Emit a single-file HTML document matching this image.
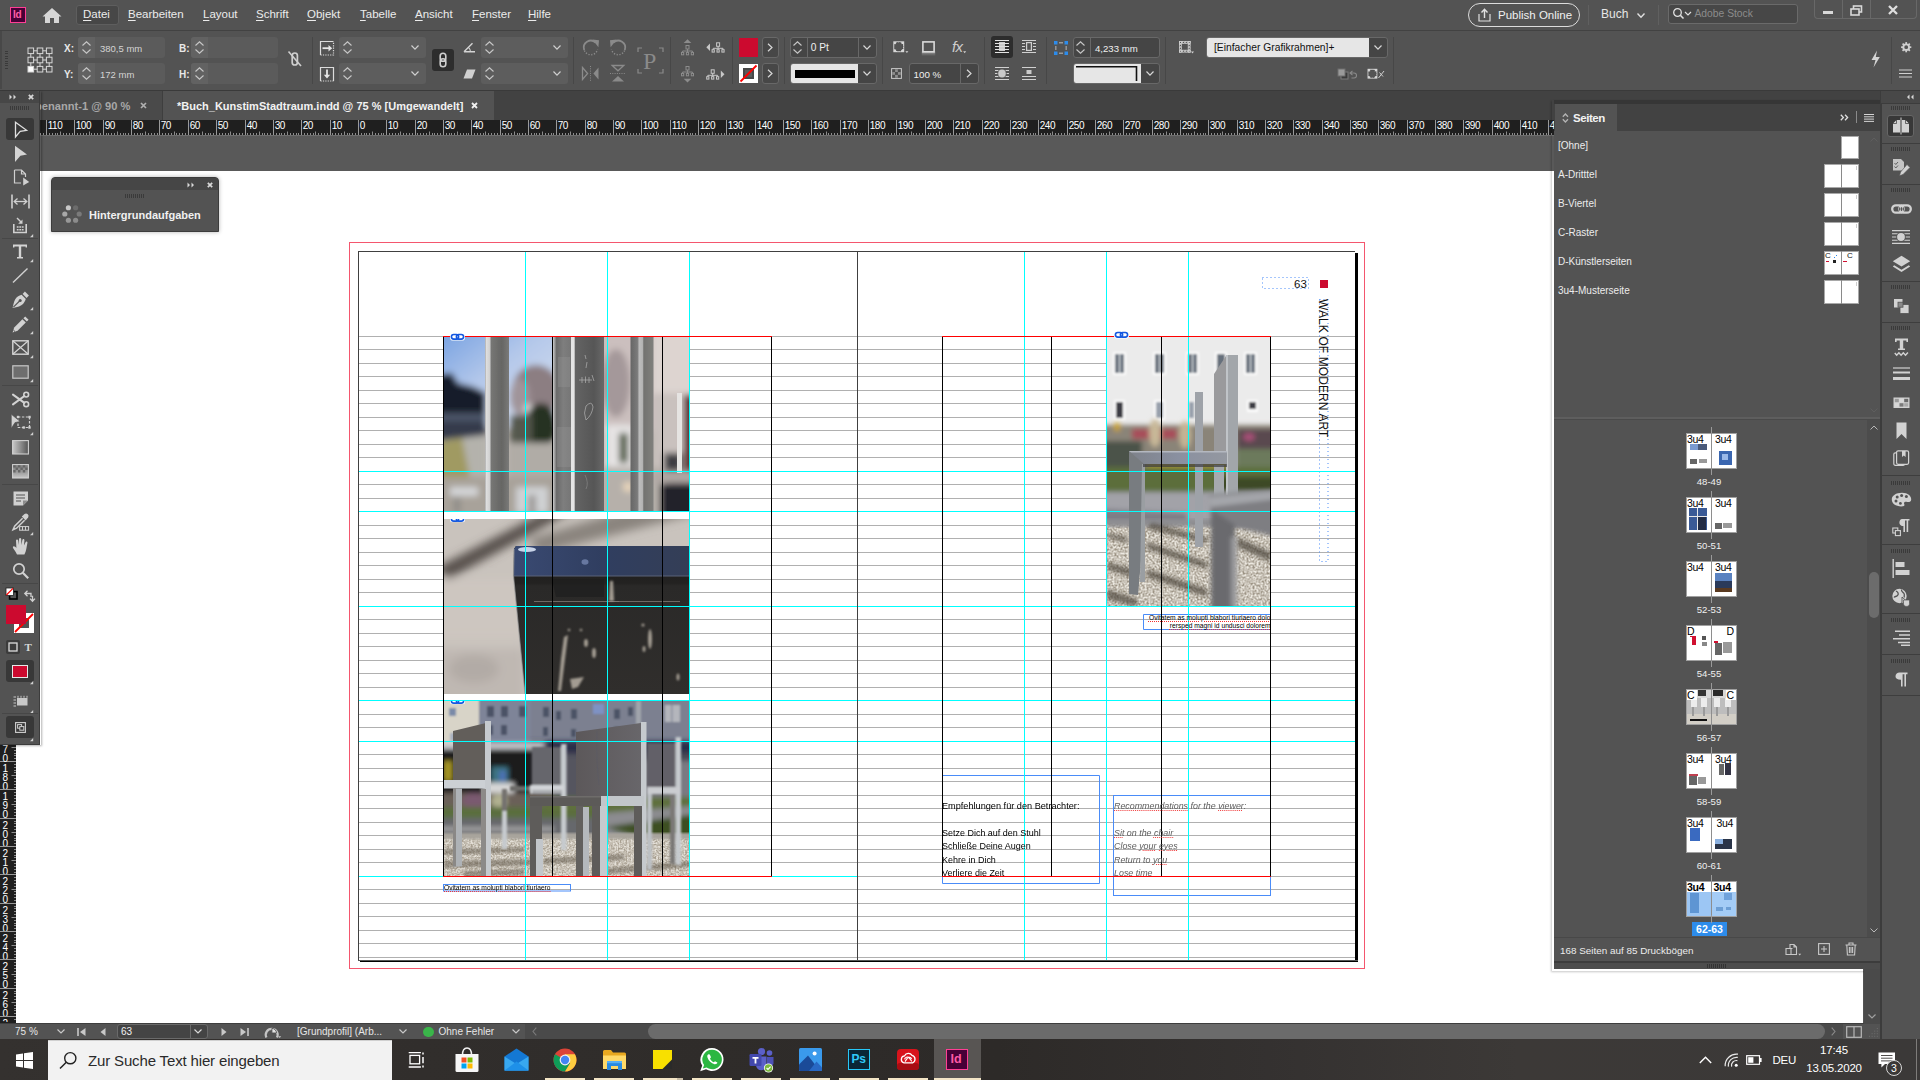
<!DOCTYPE html>
<html><head><meta charset="utf-8"><title>InDesign</title>
<style>
html,body{margin:0;padding:0;width:1920px;height:1080px;overflow:hidden;background:#535353;}
body{font-family:"Liberation Sans",sans-serif;position:relative;}
body div, body svg{position:absolute;}
svg{overflow:visible;}
u{text-decoration:underline;text-underline-offset:1.5px;}
</style></head><body>
<div style="left:39px;top:170.5px;width:1515px;height:852px;background:#ffffff;"></div>
<div style="left:16px;top:744px;width:24px;height:279px;background:#ffffff;"></div>
<div style="left:1554px;top:969px;width:309px;height:54px;background:#ffffff;"></div>
<div style="left:360px;top:960px;width:998px;height:2px;background:#000;"></div>
<div style="left:1355px;top:253px;width:3px;height:709px;background:#000;"></div>
<div style="left:358px;top:251px;width:997px;height:709px;background:#fff;border-left:1px solid #404040;border-top:1px solid #404040;box-sizing:border-box;"></div>
<div style="left:358px;top:960px;width:1000px;height:0.6px;background:#555;"></div>
<div style="left:349px;top:242px;width:1016px;height:727px;border:1px solid #f4566e;box-sizing:border-box;"></div>
<svg style="left:0;top:0" width="1920" height="1080"><path d="M359,336.5H1355" stroke="#b0b0b0" stroke-width="1"/><path d="M359,349.5H1355" stroke="#b0b0b0" stroke-width="1"/><path d="M359,363.5H1355" stroke="#b0b0b0" stroke-width="1"/><path d="M359,376.5H1355" stroke="#b0b0b0" stroke-width="1"/><path d="M359,390.5H1355" stroke="#b0b0b0" stroke-width="1"/><path d="M359,403.5H1355" stroke="#b0b0b0" stroke-width="1"/><path d="M359,417.5H1355" stroke="#b0b0b0" stroke-width="1"/><path d="M359,430.5H1355" stroke="#b0b0b0" stroke-width="1"/><path d="M359,444.5H1355" stroke="#b0b0b0" stroke-width="1"/><path d="M359,457.5H1355" stroke="#b0b0b0" stroke-width="1"/><path d="M359,471.5H1355" stroke="#b0b0b0" stroke-width="1"/><path d="M359,484.5H1355" stroke="#b0b0b0" stroke-width="1"/><path d="M359,498.5H1355" stroke="#b0b0b0" stroke-width="1"/><path d="M359,511.5H1355" stroke="#b0b0b0" stroke-width="1"/><path d="M359,525.5H1355" stroke="#b0b0b0" stroke-width="1"/><path d="M359,538.5H1355" stroke="#b0b0b0" stroke-width="1"/><path d="M359,552.5H1355" stroke="#b0b0b0" stroke-width="1"/><path d="M359,565.5H1355" stroke="#b0b0b0" stroke-width="1"/><path d="M359,579.5H1355" stroke="#b0b0b0" stroke-width="1"/><path d="M359,592.5H1355" stroke="#b0b0b0" stroke-width="1"/><path d="M359,606.5H1355" stroke="#b0b0b0" stroke-width="1"/><path d="M359,619.5H1355" stroke="#b0b0b0" stroke-width="1"/><path d="M359,633.5H1355" stroke="#b0b0b0" stroke-width="1"/><path d="M359,646.5H1355" stroke="#b0b0b0" stroke-width="1"/><path d="M359,660.5H1355" stroke="#b0b0b0" stroke-width="1"/><path d="M359,673.5H1355" stroke="#b0b0b0" stroke-width="1"/><path d="M359,687.5H1355" stroke="#b0b0b0" stroke-width="1"/><path d="M359,700.5H1355" stroke="#b0b0b0" stroke-width="1"/><path d="M359,714.5H1355" stroke="#b0b0b0" stroke-width="1"/><path d="M359,727.5H1355" stroke="#b0b0b0" stroke-width="1"/><path d="M359,741.5H1355" stroke="#b0b0b0" stroke-width="1"/><path d="M359,754.5H1355" stroke="#b0b0b0" stroke-width="1"/><path d="M359,768.5H1355" stroke="#b0b0b0" stroke-width="1"/><path d="M359,781.5H1355" stroke="#b0b0b0" stroke-width="1"/><path d="M359,795.5H1355" stroke="#b0b0b0" stroke-width="1"/><path d="M359,808.5H1355" stroke="#b0b0b0" stroke-width="1"/><path d="M359,822.5H1355" stroke="#b0b0b0" stroke-width="1"/><path d="M359,835.5H1355" stroke="#b0b0b0" stroke-width="1"/><path d="M359,849.5H1355" stroke="#b0b0b0" stroke-width="1"/><path d="M359,862.5H1355" stroke="#b0b0b0" stroke-width="1"/><path d="M359,876.5H1355" stroke="#b0b0b0" stroke-width="1"/><path d="M359,889.5H1355" stroke="#b0b0b0" stroke-width="1"/><path d="M359,903.5H1355" stroke="#b0b0b0" stroke-width="1"/><path d="M359,916.5H1355" stroke="#b0b0b0" stroke-width="1"/><path d="M359,930.5H1355" stroke="#b0b0b0" stroke-width="1"/><path d="M359,943.5H1355" stroke="#b0b0b0" stroke-width="1"/><path d="M359,957.5H1355" stroke="#b0b0b0" stroke-width="1"/></svg>
<div style="left:857px;top:251px;width:1px;height:709px;background:#3a3a3a;"></div>
<svg style="left:444px;top:337px;overflow:hidden;" width="246" height="174" viewBox="0 0 246 174"><defs>
<filter id="b1" x="-10%" y="-10%" width="120%" height="120%"><feGaussianBlur stdDeviation="3.2"/></filter>
<filter id="b1s" x="-10%" y="-10%" width="120%" height="120%"><feGaussianBlur stdDeviation="0.7"/></filter>
<linearGradient id="sky1" x1="0" y1="0" x2="1" y2="1"><stop offset="0" stop-color="#6f9ce0"/><stop offset="0.45" stop-color="#b4c8ea"/><stop offset="1" stop-color="#dfe4ee"/></linearGradient>
<linearGradient id="bar1g" x1="0" y1="0" x2="1" y2="0"><stop offset="0" stop-color="#a8a8a8"/><stop offset="0.06" stop-color="#dedede"/><stop offset="0.2" stop-color="#d0d0d0"/><stop offset="0.26" stop-color="#767674"/><stop offset="0.7" stop-color="#666664"/><stop offset="1" stop-color="#7a7a78"/></linearGradient>
<linearGradient id="bar2g" x1="0" y1="0" x2="1" y2="0"><stop offset="0" stop-color="#cccccc"/><stop offset="0.07" stop-color="#6a6a6a"/><stop offset="0.2" stop-color="#7e7e7e"/><stop offset="0.355" stop-color="#767676"/><stop offset="0.36" stop-color="#e4e4e4"/><stop offset="0.42" stop-color="#e4e4e4"/><stop offset="0.425" stop-color="#646464"/><stop offset="0.8" stop-color="#565656"/><stop offset="1" stop-color="#686868"/></linearGradient>
<linearGradient id="bar3g" x1="0" y1="0" x2="1" y2="0"><stop offset="0" stop-color="#666666"/><stop offset="0.3" stop-color="#7a7a7a"/><stop offset="0.38" stop-color="#bcbcbc"/><stop offset="0.52" stop-color="#b4b4b4"/><stop offset="0.58" stop-color="#727270"/><stop offset="1" stop-color="#80807c"/></linearGradient>
</defs>
<rect width="246" height="174" fill="#bdb6b2"/>
<g filter="url(#b1)">
<rect x="-10" y="-10" width="130" height="100" fill="url(#sky1)"/>
<path d="M-10,38 L8,36 L14,46 L30,50 L42,56 L42,104 L-10,104Z" fill="#131a2c"/>
<rect x="-10" y="76" width="52" height="9" fill="#4c5468"/>
<rect x="-10" y="86" width="52" height="16" fill="#343a4c"/>
<path d="M-10,104 L42,98 L42,142 L-10,142Z" fill="#b4b2ac"/>
<path d="M-10,106 L18,101 L26,142 L-10,142Z" fill="#a09a62"/>
<ellipse cx="92" cy="54" rx="24" ry="26" fill="#8c7e82"/>
<ellipse cx="76" cy="60" rx="10" ry="18" fill="#a0949a"/>
<circle cx="85" cy="72" r="5" fill="#e4e2e2"/>
<ellipse cx="97" cy="88" rx="16" ry="22" fill="#283220"/><rect x="66" y="78" width="22" height="28" fill="#54584e"/>
<rect x="64" y="106" width="50" height="42" fill="#b0aca6"/>
<rect x="-10" y="140" width="130" height="44" fill="#a8a29a"/>
<rect x="6" y="150" width="28" height="9" fill="#d4d6d8"/>
<rect x="10" y="160" width="6" height="16" fill="#8c8a86"/>
<rect x="72" y="150" width="32" height="26" fill="#d0d2d4"/>
<rect x="84" y="158" width="8" height="18" fill="#9c9a98"/>
<rect x="158" y="-10" width="100" height="104" fill="#cbbfbe"/>
<ellipse cx="172" cy="46" rx="14" ry="34" fill="#a4989a"/>
<rect x="162" y="88" width="28" height="42" fill="#e6e4e4"/>
<rect x="175" y="96" width="9" height="30" fill="#48563a"/>
<rect x="208" y="-10" width="50" height="68" fill="#ddd4d0"/>
<rect x="210" y="56" width="44" height="84" fill="#c9c1be"/>
<rect x="240" y="58" width="16" height="78" fill="#561a1a"/>
<rect x="220" y="116" width="18" height="18" fill="#3c3c42"/>
<path d="M213,148 L260,140 L260,184 L213,184Z" fill="#22222a"/>
<rect x="158" y="130" width="58" height="54" fill="#b6b0aa"/>
<rect x="210" y="134" width="40" height="12" fill="#b0a8a4"/>
<ellipse cx="184" cy="150" rx="5" ry="5" fill="#ecd8bc"/>
</g>
<rect x="41" y="-2" width="24" height="178" fill="url(#bar1g)" filter="url(#b1s)"/>
<rect x="186.5" y="-2" width="23" height="178" fill="url(#bar3g)" filter="url(#b1s)"/>
<rect x="233" y="56" width="5" height="80" fill="#e6e4e2" filter="url(#b1s)"/>
<rect x="109" y="0" width="51" height="174" fill="url(#bar2g)"/>
<g stroke="#cfcfcf" stroke-width="0.7" fill="none" opacity="0.75"><path d="M135,43 H148 M138,40 V46 M141.5,39.5 V46 M145,40 V46 M148,38 L150,44 M141,18 L142,22 M143,25 L142,31 M142,69 Q148,63 149,70 Q148,78 142,83 Q139,76 142,69"/><path d="M141,138 Q145,146 142,152" opacity="0.5"/></g>
<g fill="#a0a0a0" opacity="0.25"><rect x="113" y="90" width="14" height="40"/><rect x="114" y="20" width="12" height="30"/></g>
</svg>
<svg style="left:444px;top:519px;overflow:hidden;" width="246" height="175" viewBox="0 0 246 175"><defs>
<filter id="b2" x="-10%" y="-10%" width="120%" height="120%"><feGaussianBlur stdDeviation="5"/></filter>
<filter id="b2s"><feGaussianBlur stdDeviation="0.8"/></filter>
<linearGradient id="blk" x1="0" y1="0" x2="0" y2="1"><stop offset="0" stop-color="#1e1e1e"/><stop offset="0.25" stop-color="#232221"/><stop offset="0.27" stop-color="#2a2928"/><stop offset="1" stop-color="#302e2c"/></linearGradient>
<linearGradient id="blu" x1="0" y1="0" x2="1" y2="0"><stop offset="0" stop-color="#3a4a72"/><stop offset="0.5" stop-color="#303e60"/><stop offset="1" stop-color="#343e56"/></linearGradient>
</defs>
<rect width="246" height="175" fill="#c9c3bd"/>
<g filter="url(#b2)">
<path d="M-10,50 L110,-12 L135,-12 L5,60Z" fill="#56504c"/>
<path d="M85,20 L250,-30 L250,-5 L95,35Z" fill="#8a847e"/>
<rect x="-10" y="60" width="90" height="60" fill="#cdc6c0"/>
<rect x="-10" y="130" width="90" height="60" fill="#bfb8b2"/>
<ellipse cx="30" cy="150" rx="25" ry="14" fill="#b2aba6"/>
</g>
<path d="M72,27 L246,27 L246,175 L81,175 L69.5,57 L70,30Z" fill="url(#blk)"/>
<path d="M72,27 L246,27 L246,57 L69.5,57 L70,30Z" fill="url(#blu)"/>
<path d="M69.5,57 H246" stroke="#5a6278" stroke-width="1.2"/>
<path d="M70,30 L69.5,57 L81,175" stroke="#9a9a9a" stroke-width="1.2" fill="none" opacity="0.7"/>
<ellipse cx="83" cy="30.5" rx="9" ry="2.5" fill="#c8d4e8"/>
<ellipse cx="141" cy="43" rx="3.5" ry="2.8" fill="#6878a0"/>
<path d="M108,60 H160 V78 H112Z" fill="#1e1e1e" opacity="0.7"/>
<path d="M90,82.5 H175 M165,82.5 H236" stroke="#807a74" stroke-width="0.8"/>
<g fill="#b8b0a4" opacity="0.85" filter="url(#b2s)">
<path d="M166,62 L169,62 L170,82 L165,82Z"/>
<path d="M120,118 L124,116 L121,140 L117,172 L114,172 L117,140Z"/>
<path d="M126,160 L140,158 L134,168 L128,170Z"/>
<ellipse cx="142" cy="124" rx="2" ry="4"/>
<ellipse cx="206" cy="120" rx="2" ry="10"/>
<ellipse cx="200" cy="130" rx="1.5" ry="3"/>
<ellipse cx="234" cy="158" rx="1.5" ry="3.5"/>
<ellipse cx="150" cy="134" rx="2" ry="5"/>
<ellipse cx="125" cy="111" rx="1.3" ry="1.3"/><ellipse cx="137" cy="111" rx="1.3" ry="1.3"/><ellipse cx="199" cy="106" rx="1.6" ry="1.6"/>
</g>
</svg>
<div style="left:444px;top:511px;width:246px;height:8px;background:#fff;"></div>
<div style="left:444px;top:694px;width:246px;height:7px;background:#fff;"></div>
<svg style="left:444px;top:701px;overflow:hidden;" width="246" height="176" viewBox="0 0 246 176"><defs>
<filter id="b3" x="-10%" y="-10%" width="120%" height="120%"><feGaussianBlur stdDeviation="2.4"/></filter>
<filter id="b3b" x="-10%" y="-10%" width="120%" height="120%"><feGaussianBlur stdDeviation="1.3"/></filter>
<filter id="b3s"><feGaussianBlur stdDeviation="0.8"/></filter>
<linearGradient id="pan" x1="0" y1="0" x2="1" y2="0"><stop offset="0" stop-color="#5c585a"/><stop offset="1" stop-color="#68666a"/></linearGradient>
<filter id="grvf3" x="0" y="0" width="100%" height="100%"><feTurbulence type="fractalNoise" baseFrequency="0.55" numOctaves="2" seed="3"/><feColorMatrix type="matrix" values="0 0 0 0 0.78  0 0 0 0 0.75  0 0 0 0 0.69  1.6 1.6 0 0 -1.05"/><feComposite in2="SourceGraphic" operator="in"/></filter>
</defs>
<rect width="246" height="176" fill="#8c8c96"/>
<g filter="url(#b3b)">
<rect x="-10" y="-10" width="270" height="54" fill="#7c8090"/>
<rect x="-10" y="-10" width="45" height="60" fill="#d8d4c8"/>
<rect x="35" y="-10" width="52" height="52" fill="#7e8498"/>
<rect x="5" y="7" width="7" height="8" fill="#7a8aa8"/><rect x="6" y="32" width="5" height="8" fill="#a8b0c0"/>
<g fill="#4c5266"><rect x="43" y="5" width="7" height="11"/><rect x="57" y="5" width="7" height="11"/><rect x="75" y="5" width="7" height="11"/><rect x="43" y="24" width="6" height="10"/><rect x="57" y="24" width="6" height="10"/><rect x="99" y="6" width="6" height="10"/><rect x="112" y="10" width="5" height="9"/><rect x="127" y="8" width="6" height="10"/><rect x="99" y="26" width="5" height="9"/><rect x="127" y="28" width="5" height="8"/><rect x="170" y="8" width="6" height="10"/><rect x="184" y="6" width="5" height="9"/><rect x="170" y="26" width="5" height="9"/></g>
<rect x="149" y="3" width="11" height="10" fill="#7e92c4"/>
<rect x="192" y="0" width="5" height="24" fill="#a0a4ac"/>
<rect x="221" y="4" width="15" height="17" fill="#b4b6bc"/><rect x="227" y="4" width="1.5" height="17" fill="#8a8e9c"/>
</g>
<g filter="url(#b3)">
<rect x="-10" y="42" width="270" height="58" fill="#4a4a56"/>
<rect x="86" y="40" width="170" height="12" fill="#2c2e48"/>
<rect x="-10" y="48" width="100" height="46" fill="#1a1c1c"/>
<rect x="-10" y="42" width="110" height="6" fill="#c8cace"/>
<rect x="0" y="60" width="8" height="20" fill="#a89820"/>
<rect x="48" y="66" width="16" height="16" fill="#3e7484"/><rect x="56" y="70" width="5" height="10" fill="#5070c0"/>
<rect x="40" y="82" width="30" height="14" fill="#d8d8d8"/>
<rect x="200" y="60" width="60" height="40" fill="#7a7a82"/>
<rect x="100" y="54" width="100" height="42" fill="#55555f"/>
<rect x="-10" y="92" width="120" height="18" fill="#6a6058"/>
<ellipse cx="30" cy="100" rx="12" ry="8" fill="#7a5a70"/>
<ellipse cx="55" cy="100" rx="8" ry="7" fill="#b0b090"/>
<rect x="-10" y="106" width="270" height="16" fill="#5a6e3c"/>
<rect x="100" y="96" width="160" height="14" fill="#5e703e"/>
<path d="M160,112 L260,104 L260,116 L160,126Z" fill="#8c8c90"/>
<rect x="-10" y="117" width="170" height="20" fill="#66686c"/>
<rect x="-10" y="126" width="120" height="4" fill="#a8a8a8"/>
<path d="M160,126 L260,112 L260,140 L200,136Z" fill="#3e5024"/>
</g>
<rect x="-2" y="134" width="250" height="44" fill="#a89f90"/><rect x="-2" y="134" width="250" height="44" fill="#fff" filter="url(#grvf3)"/><rect x="-2" y="132" width="250" height="6" fill="#a8a49c" filter="url(#b3s)"/>
<g fill="#5e564a" opacity="0.5" filter="url(#b3s)"><path d="M0,148 L80,146 L80,151 L0,154Z"/><path d="M0,160 L90,158 L90,164 L0,167Z"/><path d="M100,157 L180,153 L180,159 L100,163Z"/><path d="M150,168 L246,160 L246,166 L150,174Z"/><path d="M20,170 L80,168 L80,174 L20,176Z"/></g>
<!-- chair 2 (mid back) -->
<g filter="url(#b3s)">
<rect x="66" y="85" width="22" height="5" fill="#6c6a68"/>
<rect x="58" y="88" width="5" height="60" fill="#74726e"/><rect x="58" y="110" width="5" height="38" fill="#c6cace"/>
<rect x="88" y="46" width="32" height="42" fill="#66666c"/>
<rect x="117" y="43" width="5.5" height="106" fill="#c6cace"/>
<rect x="86" y="84" width="34" height="9" fill="#d2d4d8"/><rect x="88" y="89" width="30" height="4" fill="#a8aaae"/>
</g>
<!-- chair 4 (right) -->
<g filter="url(#b3s)">
<rect x="203" y="42" width="31" height="48" fill="#626068"/>
<rect x="231.5" y="36" width="5.5" height="128" fill="#c6cace"/>
<rect x="203" y="86" width="34" height="7" fill="#caccd0"/>
<rect x="203" y="93" width="5" height="76" fill="#bcc0c4"/>
<rect x="226" y="93" width="5" height="70" fill="#7a7876"/>
</g>
<!-- chair 1 (left) -->
<path d="M9,30 L42,22 L42,80 L9,80Z" fill="#625e5a"/>
<rect x="41" y="20" width="6" height="158" fill="#c6cace"/><rect x="37" y="88" width="5" height="90" fill="#8c8a88"/>
<rect x="-2" y="79" width="43" height="8.5" fill="#ccd0d4"/>
<rect x="9" y="87.5" width="9" height="78" fill="#aeb2b6"/><rect x="9" y="87.5" width="3" height="78" fill="#8a8886"/>
<!-- chair 3 (main) -->
<path d="M132,31 L197,22 L197,95 L132,95Z" fill="url(#pan)"/>
<path d="M153,30 Q152,60 155,84" stroke="#5a5a64" stroke-width="0.6" fill="none"/>
<rect x="197" y="21" width="5.5" height="157" fill="#c6cace"/>
<rect x="86" y="95" width="72" height="10" fill="#5c5a58"/><rect x="86" y="95" width="72" height="1.5" fill="#6e6c6a"/>
<rect x="157" y="95" width="43" height="10" fill="#c2c6ca"/>
<rect x="86" y="105" width="12" height="73" fill="#5e5c5a"/><rect x="92" y="138" width="7" height="40" fill="#c2c6ca"/>
<rect x="132" y="105" width="8" height="73" fill="#62605e"/><rect x="139" y="106" width="6" height="72" fill="#b4b8bc"/>
<rect x="148" y="105" width="9" height="73" fill="#5e5c5a"/><rect x="156" y="105" width="8" height="73" fill="#c6cace"/>
<rect x="190" y="105" width="8" height="73" fill="#5e5c5a"/>
</svg>
<svg style="left:1106.5px;top:337px;overflow:hidden;" width="164" height="270" viewBox="0 0 164 270"><defs>
<filter id="b4" x="-10%" y="-10%" width="120%" height="120%"><feGaussianBlur stdDeviation="2.5"/></filter>
<filter id="b4s"><feGaussianBlur stdDeviation="0.7"/></filter>
<filter id="b4w" x="-5%" y="-5%" width="110%" height="110%"><feGaussianBlur stdDeviation="1.1"/></filter>
<filter id="b4m"><feGaussianBlur stdDeviation="2"/></filter>
<filter id="grvf4" x="0" y="0" width="100%" height="100%"><feTurbulence type="fractalNoise" baseFrequency="0.5" numOctaves="2" seed="7"/><feColorMatrix type="matrix" values="0 0 0 0 0.84  0 0 0 0 0.81  0 0 0 0 0.75  1.6 1.6 0 0 -1.05"/><feComposite in2="SourceGraphic" operator="in"/></filter>
<linearGradient id="seat4" x1="0" y1="0" x2="1" y2="0"><stop offset="0" stop-color="#7e828a"/><stop offset="0.5" stop-color="#8a90a0"/><stop offset="1" stop-color="#9498a0"/></linearGradient>
</defs>
<rect width="164" height="270" fill="#e4e4e4"/>
<g filter="url(#b4w)">
<rect x="-5" y="-5" width="174" height="95" fill="#ebebeb"/>
<g fill="#fcfcfc"><rect x="6" y="15" width="13" height="23"/><rect x="46" y="15" width="13" height="23"/><rect x="79" y="15" width="13" height="23"/><rect x="108" y="15" width="12" height="23"/><rect x="137" y="15" width="13" height="23"/><rect x="7" y="63" width="11" height="20"/><rect x="47" y="63" width="11" height="20"/><rect x="140" y="63" width="11" height="12"/></g>
<g fill="#66707c"><rect x="8" y="17" width="9" height="19"/><rect x="48" y="17" width="9" height="19"/><rect x="81" y="17" width="9" height="19"/><rect x="110" y="17" width="8" height="19"/><rect x="139" y="17" width="9" height="19"/></g>
<g fill="#d8dce0"><rect x="12" y="17" width="1.2" height="19"/><rect x="52" y="17" width="1.2" height="19"/><rect x="85" y="17" width="1.2" height="19"/><rect x="143" y="17" width="1.2" height="19"/></g>
<g fill="#3e3e44"><rect x="9" y="65" width="7" height="16"/><rect x="142" y="65" width="7" height="7"/></g>
<g fill="#98a0ac"><rect x="49" y="65" width="7" height="16"/><rect x="82" y="65" width="5" height="16"/></g>
</g>
<g filter="url(#b4)">
<rect x="-5" y="88" width="174" height="46" fill="#8a8478"/>
<rect x="25" y="92" width="45" height="10" fill="#a84c58"/>
<ellipse cx="48" cy="96" rx="6" ry="14" fill="#c8b898"/><ellipse cx="78" cy="98" rx="6" ry="14" fill="#c4b494"/>
<rect x="7" y="86" width="6" height="8" fill="#c8a020"/>
<rect x="-5" y="104" width="40" height="28" fill="#4c5248"/>
<rect x="130" y="92" width="40" height="30" fill="#5a4a50"/><ellipse cx="142" cy="100" rx="6" ry="4" fill="#a85078"/>
<rect x="130" y="112" width="40" height="18" fill="#6c7a5c"/>
<rect x="40" y="124" width="80" height="8" fill="#b0a030"/>
<rect x="-5" y="130" width="174" height="28" fill="#5c6e3a"/>
<rect x="110" y="140" width="60" height="14" fill="#3c4828"/>
<rect x="-5" y="155" width="174" height="32" fill="#a2a2a8"/>
<path d="M-5,172 L80,176 L80,186 L-5,186Z" fill="#7e7e86"/>
</g>
<rect x="-2" y="186" width="168" height="86" fill="#9c9384"/><rect x="-2" y="186" width="168" height="86" fill="#fff" filter="url(#grvf4)"/><rect x="-2" y="182" width="168" height="8" fill="#8c8c90" filter="url(#b4m)"/>
<g fill="#4e463c" opacity="0.72" filter="url(#b4m)"><path d="M0,196 L20,200 L20,206 L0,200Z"/><path d="M45,186 L100,200 L100,206 L40,192Z"/><path d="M40,205 L100,225 L100,232 L40,212Z"/><path d="M0,225 L25,232 L25,240 L0,232Z"/><path d="M40,232 L100,252 L100,260 L40,240Z"/><path d="M0,252 L30,262 L30,270 L0,262Z"/><path d="M130,200 L164,215 L164,225 L130,210Z"/></g>
<!-- thin post behind -->
<rect x="88" y="55" width="8" height="155" fill="#9ea2a8" filter="url(#b4s)"/>
<rect x="107" y="128" width="10" height="50" fill="#a6aaae"/>
<!-- back panel + post -->
<path d="M107,37 L119,19 L119,114 L107,114Z" fill="#9a9a9c"/>
<rect x="119" y="18" width="12" height="140" fill="#a2a6aa"/><rect x="119" y="18" width="2" height="140" fill="#c0c4c8"/>
<!-- seat & leg -->
<rect x="22" y="114" width="98" height="13" fill="url(#seat4)"/><rect x="22" y="114" width="98" height="1.5" fill="#b4b8c0"/>
<path d="M22,114 L37,127 L36,200 L31,258 L22,257Z" fill="#787c80"/><path d="M35,127 L38,127 L38,245 L33,245Z" fill="#9a9ea2"/>
<rect x="36" y="127" width="84" height="3" fill="#3a3a40" opacity="0.7"/>
<!-- foreground blurry chair -->
<g filter="url(#b4m)">
<path d="M102,158 L170,152 L170,200 L128,190 L104,172Z" fill="#7e7e82"/>
<path d="M102,160 L170,154 L170,162 L104,170Z" fill="#a4a6aa"/>
<path d="M104,172 L128,188 L128,275 L104,275Z" fill="#6a6a6e"/>
<rect x="124" y="200" width="6" height="70" fill="#9a9a9c"/>
</g>
</svg>
<svg style="left:0;top:0" width="1920" height="1080"><rect x="443.5" y="884.5" width="127" height="6.5" fill="none" stroke="#4a8cf8" stroke-width="1"/><path d="M1270.5,614.5 H1143.5 V629.5 H1270.5" fill="none" stroke="#4a8cf8" stroke-width="1"/><path d="M942.5,775.5 H1099.5 V883.5 H942.5 V877" fill="none" stroke="#4a8cf8" stroke-width="1"/><rect x="1113.5" y="795.5" width="157" height="100" fill="none" stroke="#4a8cf8" stroke-width="1"/><rect x="1262.5" y="277.5" width="46" height="11" fill="none" stroke="#4a8cf8" stroke-width="1" stroke-dasharray="1,3"/><rect x="1319.5" y="299.5" width="8.5" height="262" fill="none" stroke="#4a8cf8" stroke-width="1" stroke-dasharray="1,3"/><path d="M525.5,252V960" stroke="#00ffff" stroke-width="1"/><path d="M607.5,252V960" stroke="#00ffff" stroke-width="1"/><path d="M689.5,252V960" stroke="#00ffff" stroke-width="1"/><path d="M1024.5,252V960" stroke="#00ffff" stroke-width="1"/><path d="M1106.5,252V960" stroke="#00ffff" stroke-width="1"/><path d="M1188.5,252V960" stroke="#00ffff" stroke-width="1"/><path d="M359,471.5H1355" stroke="#00ffff" stroke-width="1"/><path d="M359,511.5H1355" stroke="#00ffff" stroke-width="1"/><path d="M359,606.5H1355" stroke="#00ffff" stroke-width="1"/><path d="M359,700.5H1355" stroke="#00ffff" stroke-width="1"/><path d="M359,741.5H1355" stroke="#00ffff" stroke-width="1"/><path d="M359,876.5H857" stroke="#00ffff" stroke-width="1"/><path d="M443.5,337V877" stroke="#000" stroke-width="1"/><path d="M552.5,337V877" stroke="#000" stroke-width="1"/><path d="M662.5,337V877" stroke="#000" stroke-width="1"/><path d="M771.5,337V877" stroke="#000" stroke-width="1"/><path d="M942.5,337V877" stroke="#000" stroke-width="1"/><path d="M1051.5,337V877" stroke="#000" stroke-width="1"/><path d="M1161.5,337V877" stroke="#000" stroke-width="1"/><path d="M1270.5,337V877" stroke="#000" stroke-width="1"/><path d="M443,336.5H772" stroke="#ff0000" stroke-width="1"/><path d="M443,876.5H772" stroke="#ff0000" stroke-width="1"/><path d="M942,336.5H1271" stroke="#ff0000" stroke-width="1"/><path d="M942,876.5H1271" stroke="#ff0000" stroke-width="1"/><path d="M857.5,251V960" stroke="#404040" stroke-width="1"/></svg>
<svg style="left:450px;top:333.3px;" width="15" height="7.6" viewBox="0 0 15 7.6"><rect x="0" y="0" width="15" height="7.6" rx="3.2" fill="#fff"/><rect x="1.4" y="1.5" width="7.2" height="4.6" rx="2.3" fill="none" stroke="#1458e0" stroke-width="1.6"/><rect x="6.4" y="1.5" width="7.2" height="4.6" rx="2.3" fill="none" stroke="#1458e0" stroke-width="1.6"/></svg>
<svg style="left:1113.5px;top:330.8px;" width="15" height="7.6" viewBox="0 0 15 7.6"><rect x="0" y="0" width="15" height="7.6" rx="3.2" fill="#fff"/><rect x="1.4" y="1.5" width="7.2" height="4.6" rx="2.3" fill="none" stroke="#1458e0" stroke-width="1.6"/><rect x="6.4" y="1.5" width="7.2" height="4.6" rx="2.3" fill="none" stroke="#1458e0" stroke-width="1.6"/></svg>
<svg style="clip-path:inset(4.4px 0 0 0);left:450px;top:514.6px;" width="15" height="7.6" viewBox="0 0 15 7.6"><rect x="0" y="0" width="15" height="7.6" rx="3.2" fill="#fff"/><rect x="1.4" y="1.5" width="7.2" height="4.6" rx="2.3" fill="none" stroke="#1458e0" stroke-width="1.6"/><rect x="6.4" y="1.5" width="7.2" height="4.6" rx="2.3" fill="none" stroke="#1458e0" stroke-width="1.6"/></svg>
<svg style="clip-path:inset(4.4px 0 0 0);left:450px;top:696.6px;" width="15" height="7.6" viewBox="0 0 15 7.6"><rect x="0" y="0" width="15" height="7.6" rx="3.2" fill="#fff"/><rect x="1.4" y="1.5" width="7.2" height="4.6" rx="2.3" fill="none" stroke="#1458e0" stroke-width="1.6"/><rect x="6.4" y="1.5" width="7.2" height="4.6" rx="2.3" fill="none" stroke="#1458e0" stroke-width="1.6"/></svg>
<div style="left:1294px;top:278.5px;font-size:11.5px;color:#111;white-space:nowrap;line-height:1;letter-spacing:0.2px;">63</div>
<div style="left:1319.5px;top:279.5px;width:8.5px;height:8.5px;background:#cc0a2f;"></div>
<div style="left:1328.5px;top:299px;font-size:12px;color:#111;white-space:nowrap;line-height:1;transform-origin:0 0;transform:rotate(90deg);letter-spacing:0.1px;">WALK OF MODERN ART</div>
<div style="left:942px;top:801.5px;font-size:9.3px;color:#000;white-space:nowrap;line-height:1;transform-origin:0 0;transform:scaleX(0.985);">Empfehlungen für den Betrachter:</div>
<div style="left:942px;top:828.5px;font-size:9.3px;color:#000;white-space:nowrap;line-height:1;transform-origin:0 0;transform:scaleX(0.965);">Setze Dich auf den Stuhl</div>
<div style="left:942px;top:842px;font-size:9.3px;color:#000;white-space:nowrap;line-height:1;transform-origin:0 0;transform:scaleX(0.965);">Schließe Deine Augen</div>
<div style="left:942px;top:855.5px;font-size:9.3px;color:#000;white-space:nowrap;line-height:1;transform-origin:0 0;transform:scaleX(0.965);">Kehre in Dich</div>
<div style="left:942px;top:869px;font-size:9.3px;color:#000;white-space:nowrap;line-height:1;transform-origin:0 0;transform:scaleX(0.965);">Verliere die Zeit</div>
<div style="left:1113.5px;top:801.5px;font-size:9.3px;color:#5e5e5e;font-style:italic;white-space:nowrap;line-height:1;transform-origin:0 0;transform:scaleX(0.955);"><span style="text-decoration:underline dotted #f03838;text-decoration-thickness:1px;text-underline-offset:1px;">Recommendations</span> for the <span style="text-decoration:underline dotted #f03838;text-decoration-thickness:1px;text-underline-offset:1px;">viewer</span>:</div>
<div style="left:1113.5px;top:828.5px;font-size:9.3px;color:#5e5e5e;font-style:italic;white-space:nowrap;line-height:1;transform-origin:0 0;transform:scaleX(0.955);"><span style="text-decoration:underline dotted #f03838;text-decoration-thickness:1px;text-underline-offset:1px;">Sit</span> on the <span style="text-decoration:underline dotted #f03838;text-decoration-thickness:1px;text-underline-offset:1px;">chair</span></div>
<div style="left:1113.5px;top:842px;font-size:9.3px;color:#5e5e5e;font-style:italic;white-space:nowrap;line-height:1;transform-origin:0 0;transform:scaleX(0.955);">Close <span style="text-decoration:underline dotted #f03838;text-decoration-thickness:1px;text-underline-offset:1px;">your</span> <span style="text-decoration:underline dotted #f03838;text-decoration-thickness:1px;text-underline-offset:1px;">eyes</span></div>
<div style="left:1113.5px;top:855.5px;font-size:9.3px;color:#5e5e5e;font-style:italic;white-space:nowrap;line-height:1;transform-origin:0 0;transform:scaleX(0.955);">Return to <span style="text-decoration:underline dotted #f03838;text-decoration-thickness:1px;text-underline-offset:1px;">you</span></div>
<div style="left:1113.5px;top:869px;font-size:9.3px;color:#5e5e5e;font-style:italic;white-space:nowrap;line-height:1;transform-origin:0 0;transform:scaleX(0.955);">Lose time</div>
<div style="left:444px;top:884.5px;font-size:6.7px;color:#000;white-space:nowrap;line-height:1;text-decoration:underline dotted #f03030;text-decoration-thickness:1px;text-underline-offset:0.5px;transform-origin:0 0;transform:scaleX(0.995);">Ovitatem as molupti blabori tiuriaero</div>
<div style="left:1143px;top:614.5px;width:127.5px;text-align:right;font-size:6.7px;color:#000;white-space:nowrap;line-height:1;text-decoration:underline dotted #f03030;text-decoration-thickness:1px;text-underline-offset:0.5px;">Ovitatem as molupti blabori tiuriaero dolo</div>
<div style="left:1143px;top:623px;width:127.5px;text-align:right;font-size:6.7px;color:#000;white-space:nowrap;line-height:1;text-decoration:underline dotted #f03030;text-decoration-thickness:1px;text-underline-offset:0.5px;">rersped magni id undusci dolorem</div>
<div style="left:0px;top:0px;width:1920px;height:30px;background:#535353;"></div>
<div style="left:0px;top:30px;width:1920px;height:1px;background:#424242;"></div>
<div style="left:10px;top:7px;width:16px;height:16px;background:#470137;border:1px solid #ff3f94;box-sizing:border-box;"></div>
<div style="left:13px;top:10px;font-size:10px;color:#ff5fa8;white-space:nowrap;line-height:1;font-weight:bold;letter-spacing:-0.3px;">Id</div>
<svg style="left:42px;top:7px;" width="20" height="17" viewBox="0 0 20 17"><path d="M10,1 L19.5,9.5 L17,9.5 L17,16 L12,16 L12,11 L8,11 L8,16 L3,16 L3,9.5 L0.5,9.5 Z" fill="#d6d6d6"/></svg>
<div style="left:76px;top:5px;width:43px;height:20px;background:#474747;border-radius:3px;border:1px solid #5e5e5e;box-sizing:border-box;"></div>
<div style="left:83px;top:9px;font-size:11.5px;color:#ececec;white-space:nowrap;line-height:1;"><u>D</u>atei</div>
<div style="left:128px;top:9px;font-size:11.5px;color:#ececec;white-space:nowrap;line-height:1;"><u>B</u>earbeiten</div>
<div style="left:203px;top:9px;font-size:11.5px;color:#ececec;white-space:nowrap;line-height:1;"><u>L</u>ayout</div>
<div style="left:256px;top:9px;font-size:11.5px;color:#ececec;white-space:nowrap;line-height:1;"><u>S</u>chrift</div>
<div style="left:307px;top:9px;font-size:11.5px;color:#ececec;white-space:nowrap;line-height:1;"><u>O</u>bjekt</div>
<div style="left:360px;top:9px;font-size:11.5px;color:#ececec;white-space:nowrap;line-height:1;"><u>T</u>abelle</div>
<div style="left:415px;top:9px;font-size:11.5px;color:#ececec;white-space:nowrap;line-height:1;"><u>A</u>nsicht</div>
<div style="left:472px;top:9px;font-size:11.5px;color:#ececec;white-space:nowrap;line-height:1;"><u>F</u>enster</div>
<div style="left:528px;top:9px;font-size:11.5px;color:#ececec;white-space:nowrap;line-height:1;"><u>H</u>ilfe</div>
<div style="left:1468px;top:3px;width:112px;height:24px;border:1px solid #dcdcdc;border-radius:12px;box-sizing:border-box;"></div>
<svg style="left:1478px;top:8px;" width="14" height="14" viewBox="0 0 14 14"><path d="M1,6 L1,13 L12,13 L12,6" fill="none" stroke="#e0e0e0" stroke-width="1.2"/><path d="M6.5,10 L6.5,2 M3.5,4.5 L6.5,1.2 L9.5,4.5" fill="none" stroke="#e0e0e0" stroke-width="1.4"/></svg>
<div style="left:1498px;top:10px;font-size:11.5px;color:#f0f0f0;white-space:nowrap;line-height:1;">Publish Online</div>
<div style="left:1588px;top:5px;width:1px;height:20px;background:#606060;"></div>
<div style="left:1601px;top:8px;font-size:12px;color:#e6e6e6;white-space:nowrap;line-height:1;">Buch</div>
<svg style="left:1637px;top:13px;" width="8" height="5.5" viewBox="0 0 8 5.5"><path d="M0.5,0.5 L4.0,4.2 L7.5,0.5" fill="none" stroke="#e0e0e0" stroke-width="1.4"/></svg>
<div style="left:1658px;top:5px;width:1px;height:20px;background:#606060;"></div>
<div style="left:1668px;top:4px;width:130px;height:20px;background:#474747;border:1px solid #6a6a6a;border-radius:3px;box-sizing:border-box;"></div>
<svg style="left:1672px;top:7px;" width="26" height="13" viewBox="0 0 26 13"><circle cx="5.5" cy="5.5" r="3.8" fill="none" stroke="#e0e0e0" stroke-width="1.3"/><path d="M8.3,8.3 L11.5,11.5" stroke="#e0e0e0" stroke-width="1.6"/><path d="M13,5 L16,8 L19,5" fill="none" stroke="#e0e0e0" stroke-width="1.2"/></svg>
<div style="left:1694.5px;top:8.8px;font-size:10.3px;color:#8c8c8c;white-space:nowrap;line-height:1;">Adobe Stock</div>
<div style="left:1814px;top:0px;width:103px;height:18.5px;border:1px solid #686868;border-top:none;border-radius:0 0 4px 4px;box-sizing:border-box;"></div>
<div style="left:1842px;top:0px;width:1px;height:18px;background:#686868;"></div>
<div style="left:1869.5px;top:0px;width:1px;height:18px;background:#686868;"></div>
<div style="left:1823px;top:11px;width:10px;height:2.5px;background:#d8d8d8;"></div>
<svg style="left:1850px;top:5px;" width="13" height="11" viewBox="0 0 13 11"><rect x="3.5" y="1" width="8" height="6" fill="none" stroke="#d8d8d8" stroke-width="1.6"/><rect x="1" y="4" width="8" height="6" fill="#535353" stroke="#d8d8d8" stroke-width="1.6"/></svg>
<svg style="left:1888px;top:4.5px;" width="10" height="10" viewBox="0 0 10 10"><path d="M1,1 L9,9 M9,1 L1,9" stroke="#dedede" stroke-width="2.3"/></svg>
<div style="left:0px;top:31px;width:1920px;height:59px;background:#535353;"></div>
<div style="left:0px;top:90px;width:1920px;height:1.2px;background:#3a3a3a;"></div>
<div style="left:0px;top:31px;width:2px;height:58px;background:#484848;"></div>
<div style="left:5px;top:51.0px;width:3px;height:1px;background:#3a3a3a;"></div>
<div style="left:5px;top:53.4px;width:3px;height:1px;background:#3a3a3a;"></div>
<div style="left:5px;top:55.8px;width:3px;height:1px;background:#3a3a3a;"></div>
<div style="left:5px;top:58.2px;width:3px;height:1px;background:#3a3a3a;"></div>
<div style="left:5px;top:60.6px;width:3px;height:1px;background:#3a3a3a;"></div>
<div style="left:5px;top:63.0px;width:3px;height:1px;background:#3a3a3a;"></div>
<div style="left:5px;top:65.4px;width:3px;height:1px;background:#3a3a3a;"></div>
<div style="left:5px;top:67.8px;width:3px;height:1px;background:#3a3a3a;"></div>
<svg style="left:27px;top:47px;" width="27" height="27" viewBox="0 0 27 27"><rect x="1.0" y="1.0" width="5.6" height="5.6" fill="none" stroke="#d8d8d8" stroke-width="1"/><rect x="10.2" y="1.0" width="5.6" height="5.6" fill="none" stroke="#d8d8d8" stroke-width="1"/><rect x="19.4" y="1.0" width="5.6" height="5.6" fill="none" stroke="#d8d8d8" stroke-width="1"/><rect x="1.0" y="10.2" width="5.6" height="5.6" fill="none" stroke="#d8d8d8" stroke-width="1"/><rect x="10.2" y="10.2" width="5.6" height="5.6" fill="none" stroke="#d8d8d8" stroke-width="1"/><rect x="19.4" y="10.2" width="5.6" height="5.6" fill="none" stroke="#d8d8d8" stroke-width="1"/><rect x="1.0" y="19.4" width="5.6" height="5.6" fill="#ffffff" stroke="#d8d8d8" stroke-width="1"/><rect x="10.2" y="19.4" width="5.6" height="5.6" fill="none" stroke="#d8d8d8" stroke-width="1"/><rect x="19.4" y="19.4" width="5.6" height="5.6" fill="none" stroke="#d8d8d8" stroke-width="1"/><path d="M6.6,3.8H10.2 M15.8,3.8H19.4 M6.6,13H10.2 M15.8,13H19.4 M6.6,22.2H10.2 M15.8,22.2H19.4 M3.8,6.6V10.2 M3.8,15.8V19.4 M13,6.6V10.2 M13,15.8V19.4 M22.2,6.6V10.2 M22.2,15.8V19.4" stroke="#d8d8d8" stroke-width="1"/></svg>
<div style="left:64px;top:43.5px;font-size:10px;color:#e8e8e8;white-space:nowrap;line-height:1;font-weight:bold;">X:</div>
<div style="left:64px;top:69.5px;font-size:10px;color:#e8e8e8;white-space:nowrap;line-height:1;font-weight:bold;">Y:</div>
<div style="left:179px;top:43.5px;font-size:10px;color:#e8e8e8;white-space:nowrap;line-height:1;font-weight:bold;">B:</div>
<div style="left:179px;top:69.5px;font-size:10px;color:#e8e8e8;white-space:nowrap;line-height:1;font-weight:bold;">H:</div>
<div style="left:78px;top:37px;width:87px;height:21px;background:#5b5b5b;border-radius:3px;"></div>
<div style="left:78px;top:37px;width:17px;height:21px;background:#626262;border-radius:3px 0 0 3px;"></div>
<svg style="left:82px;top:41px;" width="9" height="5.5" viewBox="0 0 9 5.5"><path d="M0.5,4.5 L4.5,0.8 L8.5,4.5" fill="none" stroke="#c8c8c8" stroke-width="1.1"/></svg><svg style="left:82px;top:49px;" width="9" height="5.5" viewBox="0 0 9 5.5"><path d="M0.5,0.5 L4.5,4.2 L8.5,0.5" fill="none" stroke="#c8c8c8" stroke-width="1.1"/></svg>
<div style="left:78px;top:63px;width:87px;height:21px;background:#5b5b5b;border-radius:3px;"></div>
<div style="left:78px;top:63px;width:17px;height:21px;background:#626262;border-radius:3px 0 0 3px;"></div>
<svg style="left:82px;top:67px;" width="9" height="5.5" viewBox="0 0 9 5.5"><path d="M0.5,4.5 L4.5,0.8 L8.5,4.5" fill="none" stroke="#c8c8c8" stroke-width="1.1"/></svg><svg style="left:82px;top:75px;" width="9" height="5.5" viewBox="0 0 9 5.5"><path d="M0.5,0.5 L4.5,4.2 L8.5,0.5" fill="none" stroke="#c8c8c8" stroke-width="1.1"/></svg>
<div style="left:191px;top:37px;width:87px;height:21px;background:#5b5b5b;border-radius:3px;"></div>
<div style="left:191px;top:37px;width:17px;height:21px;background:#626262;border-radius:3px 0 0 3px;"></div>
<svg style="left:195px;top:41px;" width="9" height="5.5" viewBox="0 0 9 5.5"><path d="M0.5,4.5 L4.5,0.8 L8.5,4.5" fill="none" stroke="#c8c8c8" stroke-width="1.1"/></svg><svg style="left:195px;top:49px;" width="9" height="5.5" viewBox="0 0 9 5.5"><path d="M0.5,0.5 L4.5,4.2 L8.5,0.5" fill="none" stroke="#c8c8c8" stroke-width="1.1"/></svg>
<div style="left:191px;top:63px;width:87px;height:21px;background:#5b5b5b;border-radius:3px;"></div>
<div style="left:191px;top:63px;width:17px;height:21px;background:#626262;border-radius:3px 0 0 3px;"></div>
<svg style="left:195px;top:67px;" width="9" height="5.5" viewBox="0 0 9 5.5"><path d="M0.5,4.5 L4.5,0.8 L8.5,4.5" fill="none" stroke="#c8c8c8" stroke-width="1.1"/></svg><svg style="left:195px;top:75px;" width="9" height="5.5" viewBox="0 0 9 5.5"><path d="M0.5,0.5 L4.5,4.2 L8.5,0.5" fill="none" stroke="#c8c8c8" stroke-width="1.1"/></svg>
<div style="left:100px;top:43.5px;font-size:9.5px;color:#d4d4d4;white-space:nowrap;line-height:1;">380,5 mm</div>
<div style="left:100px;top:69.5px;font-size:9.5px;color:#d4d4d4;white-space:nowrap;line-height:1;">172 mm</div>
<svg style="left:287px;top:50px;" width="16" height="18" viewBox="0 0 16 18"><rect x="5.2" y="3" width="5.2" height="12" rx="2.6" fill="none" stroke="#cfcfcf" stroke-width="1.7"/><path d="M1.5,1.5 L14,16" stroke="#cfcfcf" stroke-width="1.6"/></svg>
<div style="left:312px;top:37px;width:1px;height:47px;background:#474747;"></div>
<svg style="left:319px;top:40px;" width="16" height="16" viewBox="0 0 16 16"><path d="M1.5,15 V1.5 H14.5" fill="none" stroke="#dcdcdc" stroke-width="1.2"/><path d="M1.5,15 H14.5 V1.5" fill="none" stroke="#dcdcdc" stroke-width="1.2" stroke-dasharray="1.2,1.2"/><path d="M3.5,8.2 H11" stroke="#e6e6e6" stroke-width="1.8"/><path d="M9.5,5 L13.2,8.2 L9.5,11.4Z" fill="#e6e6e6"/></svg>
<svg style="left:319px;top:66px;" width="16" height="16" viewBox="0 0 16 16"><path d="M1.5,15 V1.5 H14.5 V15" fill="none" stroke="#dcdcdc" stroke-width="1.2"/><path d="M1.5,15 H14.5" fill="none" stroke="#dcdcdc" stroke-width="1.2" stroke-dasharray="1.2,1.2"/><path d="M8,3.5 V10" stroke="#e6e6e6" stroke-width="1.8"/><path d="M4.8,8.8 L8,12.6 L11.2,8.8Z" fill="#e6e6e6"/></svg>
<div style="left:339px;top:37px;width:87px;height:21px;background:#5d5d5d;border-radius:3px;"></div>
<svg style="left:343px;top:41px;" width="9" height="5.5" viewBox="0 0 9 5.5"><path d="M0.5,4.5 L4.5,0.8 L8.5,4.5" fill="none" stroke="#c8c8c8" stroke-width="1.1"/></svg><svg style="left:343px;top:49px;" width="9" height="5.5" viewBox="0 0 9 5.5"><path d="M0.5,0.5 L4.5,4.2 L8.5,0.5" fill="none" stroke="#c8c8c8" stroke-width="1.1"/></svg>
<svg style="left:411px;top:45px;" width="8" height="5.5" viewBox="0 0 8 5.5"><path d="M0.5,0.5 L4.0,4.2 L7.5,0.5" fill="none" stroke="#d0d0d0" stroke-width="1.2"/></svg>
<div style="left:339px;top:63px;width:87px;height:21px;background:#5d5d5d;border-radius:3px;"></div>
<svg style="left:343px;top:67px;" width="9" height="5.5" viewBox="0 0 9 5.5"><path d="M0.5,4.5 L4.5,0.8 L8.5,4.5" fill="none" stroke="#c8c8c8" stroke-width="1.1"/></svg><svg style="left:343px;top:75px;" width="9" height="5.5" viewBox="0 0 9 5.5"><path d="M0.5,0.5 L4.5,4.2 L8.5,0.5" fill="none" stroke="#c8c8c8" stroke-width="1.1"/></svg>
<svg style="left:411px;top:71px;" width="8" height="5.5" viewBox="0 0 8 5.5"><path d="M0.5,0.5 L4.0,4.2 L7.5,0.5" fill="none" stroke="#d0d0d0" stroke-width="1.2"/></svg>
<div style="left:481px;top:37px;width:87px;height:21px;background:#5d5d5d;border-radius:3px;"></div>
<svg style="left:485px;top:41px;" width="9" height="5.5" viewBox="0 0 9 5.5"><path d="M0.5,4.5 L4.5,0.8 L8.5,4.5" fill="none" stroke="#c8c8c8" stroke-width="1.1"/></svg><svg style="left:485px;top:49px;" width="9" height="5.5" viewBox="0 0 9 5.5"><path d="M0.5,0.5 L4.5,4.2 L8.5,0.5" fill="none" stroke="#c8c8c8" stroke-width="1.1"/></svg>
<svg style="left:553px;top:45px;" width="8" height="5.5" viewBox="0 0 8 5.5"><path d="M0.5,0.5 L4.0,4.2 L7.5,0.5" fill="none" stroke="#d0d0d0" stroke-width="1.2"/></svg>
<div style="left:481px;top:63px;width:87px;height:21px;background:#5d5d5d;border-radius:3px;"></div>
<svg style="left:485px;top:67px;" width="9" height="5.5" viewBox="0 0 9 5.5"><path d="M0.5,4.5 L4.5,0.8 L8.5,4.5" fill="none" stroke="#c8c8c8" stroke-width="1.1"/></svg><svg style="left:485px;top:75px;" width="9" height="5.5" viewBox="0 0 9 5.5"><path d="M0.5,0.5 L4.5,4.2 L8.5,0.5" fill="none" stroke="#c8c8c8" stroke-width="1.1"/></svg>
<svg style="left:553px;top:71px;" width="8" height="5.5" viewBox="0 0 8 5.5"><path d="M0.5,0.5 L4.0,4.2 L7.5,0.5" fill="none" stroke="#d0d0d0" stroke-width="1.2"/></svg>
<div style="left:432px;top:49px;width:22px;height:22px;background:#2d2d2d;border-radius:3px;"></div>
<svg style="left:437px;top:52px;" width="12" height="16" viewBox="0 0 12 16"><rect x="3.2" y="1.2" width="5.6" height="8" rx="2.8" fill="none" stroke="#cfcfcf" stroke-width="1.6"/><rect x="3.2" y="6.8" width="5.6" height="8" rx="2.8" fill="none" stroke="#cfcfcf" stroke-width="1.6"/></svg>
<svg style="left:463px;top:42px;" width="13" height="11" viewBox="0 0 13 11"><path d="M1,9.8 H12 M1,9.8 L9.5,1.2" stroke="#d4d4d4" stroke-width="1.4" fill="none"/><path d="M7.5,9.8 A6,6 0 0 0 5.4,5.3" stroke="#d4d4d4" stroke-width="1.1" fill="none"/></svg>
<svg style="left:463px;top:69px;" width="13" height="10" viewBox="0 0 13 10"><path d="M4,0.5 H12.5 L9,9.5 H0.5Z" fill="#d0d0d0"/></svg>
<div style="left:573px;top:37px;width:1px;height:47px;background:#474747;"></div>
<svg style="left:582px;top:38px;" width="18" height="18" viewBox="0 0 18 18"><path d="M2.2,12 A7,7 0 0 1 13.6,4.6" fill="none" stroke="#8a8a8a" stroke-width="1.8"/><path d="M10.4,1.6 L17,2.2 L16.4,9.2Z" fill="#8a8a8a"/><path d="M2.4,12.5 A7,7 0 0 0 15.6,11.5" fill="none" stroke="#8a8a8a" stroke-width="1.4" stroke-dasharray="1.2,1.6"/></svg>
<svg style="left:609px;top:38px;" width="18" height="18" viewBox="0 0 18 18"><path d="M15.8,12 A7,7 0 0 0 4.4,4.6" fill="none" stroke="#8a8a8a" stroke-width="1.8"/><path d="M7.6,1.6 L1,2.2 L1.6,9.2Z" fill="#8a8a8a"/><path d="M15.6,12.5 A7,7 0 0 1 2.4,11.5" fill="none" stroke="#8a8a8a" stroke-width="1.4" stroke-dasharray="1.2,1.6"/></svg>
<svg style="left:581px;top:65px;" width="19" height="17" viewBox="0 0 19 17"><path d="M1.5,2.5 L6.6,8.5 L1.5,14.5Z" fill="none" stroke="#8a8a8a" stroke-width="1.3"/><path d="M17.5,2.5 L12.4,8.5 L17.5,14.5Z" fill="#8a8a8a"/><path d="M9.5,1 V16" stroke="#8a8a8a" stroke-width="1" stroke-dasharray="1,1.3"/></svg>
<svg style="left:609px;top:64px;" width="18" height="19" viewBox="0 0 18 19"><path d="M3.2,1.5 L9,6.8 L14.8,1.5Z" fill="none" stroke="#8a8a8a" stroke-width="1.3"/><path d="M3,17.5 L9,12 L15,17.5Z" fill="#8a8a8a"/><path d="M1,9.5 H17" stroke="#8a8a8a" stroke-width="1" stroke-dasharray="1,1.3"/></svg>
<svg style="left:637px;top:47px;" width="27" height="27" viewBox="0 0 27 27"><path d="M1,5 V1 H5 M22,1 H26 V5 M26,22 V26 H22 M5,26 H1 V22" fill="none" stroke="#8a8a8a" stroke-width="1.2"/></svg>
<div style="left:643px;top:48.5px;font-size:24px;color:#8a8a8a;white-space:nowrap;line-height:1;font-family:'Liberation Serif',serif;">P</div>
<div style="left:670px;top:37px;width:1px;height:47px;background:#474747;"></div>
<svg style="left:681px;top:38.5px;" width="13" height="17" viewBox="0 0 13 17"><path d="M2.7,4 L6.5,0.3 L10.3,4Z" fill="#8c8c8c"/><g transform="translate(0,6)"><path d="M6.5,4 V6 M1.6,7.4 V6 H11.4 V7.4 M6.5,6 V7.4" fill="none" stroke="#8c8c8c" stroke-width="1"/><rect x="5" y="0.5" width="3" height="3.5" fill="none" stroke="#8c8c8c" stroke-width="1"/><rect x="0.5" y="7.4" width="2.2" height="2.4" fill="none" stroke="#8c8c8c" stroke-width="1"/><rect x="5.4" y="7.4" width="2.2" height="2.4" fill="none" stroke="#8c8c8c" stroke-width="1"/><rect x="10.3" y="7.4" width="2.2" height="2.4" fill="none" stroke="#8c8c8c" stroke-width="1"/></g></svg>
<svg style="left:681px;top:65.5px;" width="13" height="17" viewBox="0 0 13 17"><g transform="translate(0,0)"><path d="M6.5,4 V6 M1.6,7.4 V6 H11.4 V7.4 M6.5,6 V7.4" fill="none" stroke="#8c8c8c" stroke-width="1"/><rect x="5" y="0.5" width="3" height="3.5" fill="none" stroke="#8c8c8c" stroke-width="1"/><rect x="0.5" y="7.4" width="2.2" height="2.4" fill="none" stroke="#8c8c8c" stroke-width="1"/><rect x="5.4" y="7.4" width="2.2" height="2.4" fill="none" stroke="#8c8c8c" stroke-width="1"/><rect x="10.3" y="7.4" width="2.2" height="2.4" fill="none" stroke="#8c8c8c" stroke-width="1"/></g><path d="M2.7,12.8 L6.5,16.5 L10.3,12.8Z" fill="#8c8c8c"/></svg>
<svg style="left:705.5px;top:41.5px;" width="19" height="11" viewBox="0 0 19 11"><path d="M4,1.5 L0.3,5.3 L4,9.1Z" fill="#c8c8c8"/><g transform="translate(5.6,0.3)"><path d="M6.5,4 V6 M1.6,7.4 V6 H11.4 V7.4 M6.5,6 V7.4" fill="none" stroke="#c8c8c8" stroke-width="1"/><rect x="5" y="0.5" width="3" height="3.5" fill="none" stroke="#c8c8c8" stroke-width="1"/><rect x="0.5" y="7.4" width="2.2" height="2.4" fill="none" stroke="#c8c8c8" stroke-width="1"/><rect x="5.4" y="7.4" width="2.2" height="2.4" fill="none" stroke="#c8c8c8" stroke-width="1"/><rect x="10.3" y="7.4" width="2.2" height="2.4" fill="none" stroke="#c8c8c8" stroke-width="1"/></g></svg>
<svg style="left:705.5px;top:68.5px;" width="19" height="11" viewBox="0 0 19 11"><g transform="translate(0.2,0.3)"><path d="M6.5,4 V6 M1.6,7.4 V6 H11.4 V7.4 M6.5,6 V7.4" fill="none" stroke="#c8c8c8" stroke-width="1"/><rect x="5" y="0.5" width="3" height="3.5" fill="none" stroke="#c8c8c8" stroke-width="1"/><rect x="0.5" y="7.4" width="2.2" height="2.4" fill="none" stroke="#c8c8c8" stroke-width="1"/><rect x="5.4" y="7.4" width="2.2" height="2.4" fill="none" stroke="#c8c8c8" stroke-width="1"/><rect x="10.3" y="7.4" width="2.2" height="2.4" fill="none" stroke="#c8c8c8" stroke-width="1"/></g><path d="M14.8,1.5 L18.5,5.3 L14.8,9.1Z" fill="#c8c8c8"/></svg>
<div style="left:732px;top:37px;width:1px;height:47px;background:#474747;"></div>
<div style="left:739px;top:38px;width:19px;height:19px;background:#cc0a2f;"></div>
<div style="left:739px;top:64px;width:19px;height:19px;background:#ffffff;"></div>
<svg style="left:739px;top:64px;" width="19" height="19" viewBox="0 0 19 19"><rect x="5" y="5" width="9" height="9" fill="#5a5a5a" stroke="#484848" stroke-width="2"/><path d="M1.5,17.5 L17.5,1.5" stroke="#ff0000" stroke-width="1.8"/></svg>
<div style="left:762px;top:37px;width:17px;height:21px;background:#474747;border:1px solid #686868;border-radius:3px;box-sizing:border-box;"></div>
<svg style="left:767px;top:43px;" width="6" height="9" viewBox="0 0 6 9"><path d="M1,0.7 L5,4.5 L1,8.3" fill="none" stroke="#d8d8d8" stroke-width="1.2"/></svg>
<div style="left:762px;top:63px;width:17px;height:21px;background:#474747;border:1px solid #686868;border-radius:3px;box-sizing:border-box;"></div>
<svg style="left:767px;top:69px;" width="6" height="9" viewBox="0 0 6 9"><path d="M1,0.7 L5,4.5 L1,8.3" fill="none" stroke="#d8d8d8" stroke-width="1.2"/></svg>
<div style="left:784px;top:37px;width:1px;height:47px;background:#474747;"></div>
<div style="left:790px;top:37px;width:87px;height:21px;background:#454545;border:1px solid #686868;border-radius:3px;box-sizing:border-box;"></div>
<div style="left:807px;top:38px;width:1px;height:19px;background:#686868;"></div>
<div style="left:858px;top:38px;width:1px;height:19px;background:#686868;"></div>
<svg style="left:793px;top:41px;" width="9" height="5.5" viewBox="0 0 9 5.5"><path d="M0.5,4.5 L4.5,0.8 L8.5,4.5" fill="none" stroke="#c8c8c8" stroke-width="1.1"/></svg><svg style="left:793px;top:49px;" width="9" height="5.5" viewBox="0 0 9 5.5"><path d="M0.5,0.5 L4.5,4.2 L8.5,0.5" fill="none" stroke="#c8c8c8" stroke-width="1.1"/></svg>
<div style="left:810.8px;top:43.3px;font-size:10.2px;color:#f0f0f0;white-space:nowrap;line-height:1;">0 Pt</div>
<svg style="left:863px;top:45px;" width="8" height="5.5" viewBox="0 0 8 5.5"><path d="M0.5,0.5 L4.0,4.2 L7.5,0.5" fill="none" stroke="#d8d8d8" stroke-width="1.2"/></svg>
<div style="left:790px;top:63px;width:87px;height:21px;background:#454545;border:1px solid #686868;border-radius:3px;box-sizing:border-box;"></div>
<div style="left:791px;top:64px;width:67px;height:19px;background:#e6e6e6;border-radius:2px 0 0 2px;"></div>
<div style="left:795px;top:70px;width:60px;height:8px;background:#000;"></div>
<svg style="left:863px;top:71px;" width="8" height="5.5" viewBox="0 0 8 5.5"><path d="M0.5,0.5 L4.0,4.2 L7.5,0.5" fill="none" stroke="#d8d8d8" stroke-width="1.2"/></svg>
<div style="left:882px;top:37px;width:1px;height:47px;background:#474747;"></div>
<svg style="left:892.7px;top:40.8px;" width="16" height="13" viewBox="0 0 16 13"><rect x="0.3" y="0.3" width="10.9" height="10.9" fill="#d6d6d6"/><path d="M3.6,1.5 H7.9 A2.1,2.1 0 0 0 10,3.6 V7.9 A2.1,2.1 0 0 0 7.9,10 H3.6 A2.1,2.1 0 0 0 1.5,7.9 V3.6 A2.1,2.1 0 0 0 3.6,1.5Z" fill="#545454" stroke="#3c3c3c" stroke-width="0.7" stroke-dasharray="1.2,0.9"/><path d="M12.4,10.2 L15.4,10.2 L13.9,12Z" fill="#d4d4d4"/></svg>
<svg style="left:921px;top:40px;" width="15" height="17" viewBox="0 0 15 17"><defs><linearGradient id="dsg" x1="0" y1="0" x2="0" y2="1"><stop offset="0" stop-color="#a8a8a8"/><stop offset="1" stop-color="#8a8a8a" stop-opacity="0"/></linearGradient></defs><rect x="0.8" y="11.5" width="13.4" height="4.6" fill="url(#dsg)"/><rect x="1.9" y="1.9" width="11.2" height="9.9" fill="#535353" stroke="#dadada" stroke-width="1.6"/></svg>
<div style="left:952px;top:38.6px;font-size:15px;color:#cdcdcd;white-space:nowrap;line-height:1;font-style:italic;letter-spacing:-0.6px;">fx</div>
<svg style="left:963px;top:50.5px;" width="4" height="3" viewBox="0 0 4 3"><path d="M0.2,0.3 L3.2,0.3 L1.7,2.2Z" fill="#d0d0d0"/></svg>
<svg style="left:891px;top:68px;" width="11" height="11" viewBox="0 0 11 11"><rect x="1.3" y="1.3" width="2.8" height="2.8" fill="#4c4c4c"/><rect x="4.1" y="1.3" width="2.8" height="2.8" fill="#8e8e8e"/><rect x="6.8999999999999995" y="1.3" width="2.8" height="2.8" fill="#4c4c4c"/><rect x="1.3" y="4.1" width="2.8" height="2.8" fill="#8e8e8e"/><rect x="4.1" y="4.1" width="2.8" height="2.8" fill="#4c4c4c"/><rect x="6.8999999999999995" y="4.1" width="2.8" height="2.8" fill="#8e8e8e"/><rect x="1.3" y="6.8999999999999995" width="2.8" height="2.8" fill="#4c4c4c"/><rect x="4.1" y="6.8999999999999995" width="2.8" height="2.8" fill="#8e8e8e"/><rect x="6.8999999999999995" y="6.8999999999999995" width="2.8" height="2.8" fill="#4c4c4c"/><rect x="0.6" y="0.6" width="9.8" height="9.8" fill="none" stroke="#c8c8c8" stroke-width="1"/></svg>
<div style="left:909px;top:63px;width:70px;height:21px;background:#454545;border:1px solid #686868;border-radius:3px;box-sizing:border-box;"></div>
<div style="left:960px;top:64px;width:1px;height:19px;background:#686868;"></div>
<div style="left:913.5px;top:70px;font-size:9.8px;color:#f0f0f0;white-space:nowrap;line-height:1;">100 %</div>
<svg style="left:966px;top:69px;" width="6" height="9" viewBox="0 0 6 9"><path d="M1,0.7 L5,4.5 L1,8.3" fill="none" stroke="#d8d8d8" stroke-width="1.2"/></svg>
<div style="left:984px;top:37px;width:1px;height:47px;background:#474747;"></div>
<div style="left:991px;top:36px;width:22px;height:22px;background:#2d2d2d;border-radius:3px;"></div>
<svg style="left:995px;top:40px;" width="14" height="14" viewBox="0 0 14 14"><path d="M0,0.5H14 M0,3.5H14 M0,6.5H14 M0,9.5H14 M0,12.5H14" stroke="#e4e4e4" stroke-width="1"/><rect x="4" y="2" width="6" height="9" fill="#dcdcdc" opacity="0.9"/></svg>
<svg style="left:1022px;top:40px;" width="14" height="14" viewBox="0 0 14 14"><path d="M0,0.5H14 M0,12.5H14 M0,3.5H3 M11,3.5H14 M0,6.5H3 M11,6.5H14 M0,9.5H3 M11,9.5H14" stroke="#d0d0d0" stroke-width="1"/><rect x="4.6" y="2.6" width="4.8" height="7.8" fill="none" stroke="#d0d0d0" stroke-width="1.2"/></svg>
<svg style="left:995px;top:67px;" width="14" height="14" viewBox="0 0 14 14"><path d="M0,0.5H14 M0,12.5H14 M0,3.5H3.4 M10.6,3.5H14 M0,6.5H2.4 M11.6,6.5H14 M0,9.5H3.4 M10.6,9.5H14" stroke="#d0d0d0" stroke-width="1"/><ellipse cx="7" cy="6.5" rx="3.8" ry="4.1" fill="#cacaca"/></svg>
<svg style="left:1022px;top:67px;" width="14" height="14" viewBox="0 0 14 14"><path d="M0,0.5H14 M0,9.5H14 M0,12.5H14" stroke="#d0d0d0" stroke-width="1"/><rect x="4.5" y="3" width="5" height="4" fill="#cacaca"/></svg>
<div style="left:1046px;top:37px;width:1px;height:47px;background:#474747;"></div>
<svg style="left:1054px;top:41px;" width="14" height="14" viewBox="0 0 14 14"><rect x="0" y="0" width="3.5" height="3.5" fill="#2d8ceb"/><rect x="10.5" y="0" width="3.5" height="3.5" fill="#2d8ceb"/><rect x="0" y="10.5" width="3.5" height="3.5" fill="#2d8ceb"/><rect x="10.5" y="10.5" width="3.5" height="3.5" fill="#2d8ceb"/><path d="M5,1.8H9 M5,12.2H9 M1.8,5V9 M12.2,5V9" stroke="#9a9a9a" stroke-width="1.4"/></svg>
<div style="left:1073px;top:37px;width:87px;height:21px;background:#454545;border:1px solid #686868;border-radius:3px;box-sizing:border-box;"></div>
<div style="left:1090px;top:38px;width:1px;height:19px;background:#686868;"></div>
<svg style="left:1076px;top:41px;" width="9" height="5.5" viewBox="0 0 9 5.5"><path d="M0.5,4.5 L4.5,0.8 L8.5,4.5" fill="none" stroke="#c8c8c8" stroke-width="1.1"/></svg><svg style="left:1076px;top:49px;" width="9" height="5.5" viewBox="0 0 9 5.5"><path d="M0.5,0.5 L4.5,4.2 L8.5,0.5" fill="none" stroke="#c8c8c8" stroke-width="1.1"/></svg>
<div style="left:1095px;top:43.5px;font-size:9.6px;color:#f0f0f0;white-space:nowrap;line-height:1;">4,233 mm</div>
<div style="left:1073px;top:63px;width:87px;height:21px;background:#454545;border:1px solid #686868;border-radius:3px;box-sizing:border-box;"></div>
<div style="left:1074px;top:64px;width:67px;height:19px;background:#e6e6e6;border-radius:2px 0 0 2px;"></div>
<svg style="left:1074px;top:64px;" width="67" height="19" viewBox="0 0 67 19"><path d="M2,2.8 H62.5 V17" fill="none" stroke="#111" stroke-width="1.6"/></svg>
<svg style="left:1146px;top:71px;" width="8" height="5.5" viewBox="0 0 8 5.5"><path d="M0.5,0.5 L4.0,4.2 L7.5,0.5" fill="none" stroke="#d8d8d8" stroke-width="1.2"/></svg>
<div style="left:1165px;top:37px;width:1px;height:47px;background:#474747;"></div>
<svg style="left:1179px;top:41px;" width="17" height="14" viewBox="0 0 17 14"><rect x="0.5" y="0.5" width="2" height="2" fill="none" stroke="#d0d0d0" stroke-width="0.8"/><rect x="0.5" y="9.2" width="2" height="2" fill="none" stroke="#d0d0d0" stroke-width="0.8"/><rect x="0.5" y="0.5" width="2" height="2" fill="none" stroke="#d0d0d0" stroke-width="0.8"/><rect x="9.2" y="0.5" width="2" height="2" fill="none" stroke="#d0d0d0" stroke-width="0.8"/><rect x="3.4" y="0.5" width="2" height="2" fill="none" stroke="#d0d0d0" stroke-width="0.8"/><rect x="3.4" y="9.2" width="2" height="2" fill="none" stroke="#d0d0d0" stroke-width="0.8"/><rect x="0.5" y="3.4" width="2" height="2" fill="none" stroke="#d0d0d0" stroke-width="0.8"/><rect x="9.2" y="3.4" width="2" height="2" fill="none" stroke="#d0d0d0" stroke-width="0.8"/><rect x="6.3" y="0.5" width="2" height="2" fill="none" stroke="#d0d0d0" stroke-width="0.8"/><rect x="6.3" y="9.2" width="2" height="2" fill="none" stroke="#d0d0d0" stroke-width="0.8"/><rect x="0.5" y="6.3" width="2" height="2" fill="none" stroke="#d0d0d0" stroke-width="0.8"/><rect x="9.2" y="6.3" width="2" height="2" fill="none" stroke="#d0d0d0" stroke-width="0.8"/><rect x="9.2" y="0.5" width="2" height="2" fill="none" stroke="#d0d0d0" stroke-width="0.8"/><rect x="9.2" y="9.2" width="2" height="2" fill="none" stroke="#d0d0d0" stroke-width="0.8"/><rect x="0.5" y="9.2" width="2" height="2" fill="none" stroke="#d0d0d0" stroke-width="0.8"/><rect x="9.2" y="9.2" width="2" height="2" fill="none" stroke="#d0d0d0" stroke-width="0.8"/><path d="M12,10.6 L15,10.6 L13.5,12.4Z" fill="#d0d0d0"/></svg>
<div style="left:1206px;top:37px;width:182px;height:21px;background:#454545;border:1px solid #686868;border-radius:3px;box-sizing:border-box;"></div>
<div style="left:1207px;top:38px;width:162px;height:19px;background:#e6e6e6;border-radius:2px 0 0 2px;"></div>
<div style="left:1214px;top:42.5px;font-size:10.3px;color:#111;white-space:nowrap;line-height:1;">[Einfacher Grafikrahmen]+</div>
<svg style="left:1374px;top:45px;" width="8" height="5.5" viewBox="0 0 8 5.5"><path d="M0.5,0.5 L4.0,4.2 L7.5,0.5" fill="none" stroke="#d8d8d8" stroke-width="1.2"/></svg>
<svg style="left:1337px;top:68px;" width="21" height="12" viewBox="0 0 21 12"><rect x="4" y="4" width="7" height="7" fill="#3c3c3c" stroke="#7a7a7a" stroke-width="1"/><rect x="1" y="1" width="7" height="7" fill="#9a9a9a" stroke="#6e6e6e" stroke-width="1"/><path d="M13.5,5 H17 A2.5,2.5 0 0 1 17,10 H14.5 M15.5,2.8 L13,5 L15.5,7.2" fill="none" stroke="#8a8a8a" stroke-width="1.1"/></svg>
<svg style="left:1367px;top:68px;" width="18" height="12" viewBox="0 0 18 12"><g transform="scale(0.9) translate(0.3,0.6)"><rect x="0.3" y="0.3" width="10.9" height="10.9" fill="#d6d6d6"/><path d="M3.6,1.5 H7.9 A2.1,2.1 0 0 0 10,3.6 V7.9 A2.1,2.1 0 0 0 7.9,10 H3.6 A2.1,2.1 0 0 0 1.5,7.9 V3.6 A2.1,2.1 0 0 0 3.6,1.5Z" fill="#545454" stroke="#3c3c3c" stroke-width="0.7" stroke-dasharray="1.2,0.9"/></g><path d="M11.5,10 L17,3 M12.5,4.5 L16,8.5" stroke="#d0d0d0" stroke-width="1"/></svg>
<div style="left:1393px;top:37px;width:1px;height:47px;background:#474747;"></div>
<svg style="left:1870px;top:50px;" width="11" height="18" viewBox="0 0 11 18"><path d="M7,0.5 L1.5,10 H5.5 L3.5,17.5 L9.8,7 H5.8Z" fill="#d4d4d4"/></svg>
<div style="left:1890.5px;top:37px;width:1px;height:47px;background:#474747;"></div>
<svg style="left:1900.7px;top:41.8px;" width="10.4" height="10.4" viewBox="0 0 12 12"><circle cx="6" cy="6" r="3.3" fill="none" stroke="#d0d0d0" stroke-width="2.2"/><rect x="-1" y="-1" width="2" height="2.2" fill="#d0d0d0" transform="translate(10.90,6.00) rotate(90)"/><rect x="-1" y="-1" width="2" height="2.2" fill="#d0d0d0" transform="translate(9.46,9.46) rotate(135)"/><rect x="-1" y="-1" width="2" height="2.2" fill="#d0d0d0" transform="translate(6.00,10.90) rotate(180)"/><rect x="-1" y="-1" width="2" height="2.2" fill="#d0d0d0" transform="translate(2.54,9.46) rotate(225)"/><rect x="-1" y="-1" width="2" height="2.2" fill="#d0d0d0" transform="translate(1.10,6.00) rotate(270)"/><rect x="-1" y="-1" width="2" height="2.2" fill="#d0d0d0" transform="translate(2.54,2.54) rotate(315)"/><rect x="-1" y="-1" width="2" height="2.2" fill="#d0d0d0" transform="translate(6.00,1.10) rotate(360)"/><rect x="-1" y="-1" width="2" height="2.2" fill="#d0d0d0" transform="translate(9.46,2.54) rotate(405)"/></svg>
<svg style="left:1899px;top:69px;" width="13" height="9" viewBox="0 0 13 9"><path d="M0,1H13 M0,4.5H13 M0,8H13" stroke="#d0d0d0" stroke-width="1.1"/></svg>
<div style="left:0px;top:91px;width:1920px;height:29px;background:#424242;"></div>
<div style="left:39px;top:91px;width:123px;height:29px;background:#4a4a4a;"></div>
<div style="left:162px;top:91px;width:1px;height:29px;background:#3e3e3e;"></div>
<div style="left:35.1px;top:100.6px;font-size:11.1px;color:#a8a8a8;white-space:nowrap;line-height:1;font-weight:bold;">benannt-1 @ 90 %</div>
<svg style="left:139.5px;top:102px;" width="7" height="7" viewBox="0 0 7 7"><path d="M1,1 L6,6 M6,1 L1,6" stroke="#b0b0b0" stroke-width="1.7"/></svg>
<div style="left:163px;top:91px;width:331px;height:29px;background:#535353;"></div>
<div style="left:177px;top:100.6px;font-size:11px;color:#f2f2f2;white-space:nowrap;line-height:1;font-weight:bold;">*Buch_KunstimStadtraum.indd @ 75 % [Umgewandelt]</div>
<svg style="left:471px;top:102px;" width="7" height="7" viewBox="0 0 7 7"><path d="M1,1 L6,6 M6,1 L1,6" stroke="#f0f0f0" stroke-width="1.8"/></svg>
<div style="left:39px;top:120px;width:1515px;height:15px;background:#1f1f1f;"></div>
<div style="left:39px;top:135px;width:1515px;height:1px;background:#6e6e6e;"></div>
<svg style="left:0;top:119px" width="1554" height="16" viewBox="0 0 1554 16"><path d="M40.5,14V16" stroke="#8c8c8c" stroke-width="1"/><path d="M43.5,14V16" stroke="#8c8c8c" stroke-width="1"/><path d="M46.5,1V16" stroke="#9a9a9a" stroke-width="1"/><text x="47.8" y="9.9" font-size="10" letter-spacing="-0.5" fill="#fff" font-family="Liberation Sans">110</text><path d="M49.5,14V16" stroke="#8c8c8c" stroke-width="1"/><path d="M52.5,14V16" stroke="#8c8c8c" stroke-width="1"/><path d="M55.5,14V16" stroke="#8c8c8c" stroke-width="1"/><path d="M57.5,14V16" stroke="#8c8c8c" stroke-width="1"/><path d="M60.5,12.5V16" stroke="#8c8c8c" stroke-width="1"/><path d="M63.5,14V16" stroke="#8c8c8c" stroke-width="1"/><path d="M66.5,14V16" stroke="#8c8c8c" stroke-width="1"/><path d="M69.5,14V16" stroke="#8c8c8c" stroke-width="1"/><path d="M72.5,14V16" stroke="#8c8c8c" stroke-width="1"/><path d="M74.5,1V16" stroke="#9a9a9a" stroke-width="1"/><text x="75.8" y="9.9" font-size="10" letter-spacing="-0.5" fill="#fff" font-family="Liberation Sans">100</text><path d="M77.5,14V16" stroke="#8c8c8c" stroke-width="1"/><path d="M80.5,14V16" stroke="#8c8c8c" stroke-width="1"/><path d="M83.5,14V16" stroke="#8c8c8c" stroke-width="1"/><path d="M86.5,14V16" stroke="#8c8c8c" stroke-width="1"/><path d="M89.5,12.5V16" stroke="#8c8c8c" stroke-width="1"/><path d="M91.5,14V16" stroke="#8c8c8c" stroke-width="1"/><path d="M94.5,14V16" stroke="#8c8c8c" stroke-width="1"/><path d="M97.5,14V16" stroke="#8c8c8c" stroke-width="1"/><path d="M100.5,14V16" stroke="#8c8c8c" stroke-width="1"/><path d="M103.5,1V16" stroke="#9a9a9a" stroke-width="1"/><text x="104.8" y="9.9" font-size="10" letter-spacing="-0.5" fill="#fff" font-family="Liberation Sans">90</text><path d="M106.5,14V16" stroke="#8c8c8c" stroke-width="1"/><path d="M108.5,14V16" stroke="#8c8c8c" stroke-width="1"/><path d="M111.5,14V16" stroke="#8c8c8c" stroke-width="1"/><path d="M114.5,14V16" stroke="#8c8c8c" stroke-width="1"/><path d="M117.5,12.5V16" stroke="#8c8c8c" stroke-width="1"/><path d="M120.5,14V16" stroke="#8c8c8c" stroke-width="1"/><path d="M123.5,14V16" stroke="#8c8c8c" stroke-width="1"/><path d="M125.5,14V16" stroke="#8c8c8c" stroke-width="1"/><path d="M128.5,14V16" stroke="#8c8c8c" stroke-width="1"/><path d="M131.5,1V16" stroke="#9a9a9a" stroke-width="1"/><text x="132.8" y="9.9" font-size="10" letter-spacing="-0.5" fill="#fff" font-family="Liberation Sans">80</text><path d="M134.5,14V16" stroke="#8c8c8c" stroke-width="1"/><path d="M137.5,14V16" stroke="#8c8c8c" stroke-width="1"/><path d="M140.5,14V16" stroke="#8c8c8c" stroke-width="1"/><path d="M142.5,14V16" stroke="#8c8c8c" stroke-width="1"/><path d="M145.5,12.5V16" stroke="#8c8c8c" stroke-width="1"/><path d="M148.5,14V16" stroke="#8c8c8c" stroke-width="1"/><path d="M151.5,14V16" stroke="#8c8c8c" stroke-width="1"/><path d="M154.5,14V16" stroke="#8c8c8c" stroke-width="1"/><path d="M157.5,14V16" stroke="#8c8c8c" stroke-width="1"/><path d="M159.5,1V16" stroke="#9a9a9a" stroke-width="1"/><text x="160.8" y="9.9" font-size="10" letter-spacing="-0.5" fill="#fff" font-family="Liberation Sans">70</text><path d="M162.5,14V16" stroke="#8c8c8c" stroke-width="1"/><path d="M165.5,14V16" stroke="#8c8c8c" stroke-width="1"/><path d="M168.5,14V16" stroke="#8c8c8c" stroke-width="1"/><path d="M171.5,14V16" stroke="#8c8c8c" stroke-width="1"/><path d="M174.5,12.5V16" stroke="#8c8c8c" stroke-width="1"/><path d="M176.5,14V16" stroke="#8c8c8c" stroke-width="1"/><path d="M179.5,14V16" stroke="#8c8c8c" stroke-width="1"/><path d="M182.5,14V16" stroke="#8c8c8c" stroke-width="1"/><path d="M185.5,14V16" stroke="#8c8c8c" stroke-width="1"/><path d="M188.5,1V16" stroke="#9a9a9a" stroke-width="1"/><text x="189.8" y="9.9" font-size="10" letter-spacing="-0.5" fill="#fff" font-family="Liberation Sans">60</text><path d="M191.5,14V16" stroke="#8c8c8c" stroke-width="1"/><path d="M193.5,14V16" stroke="#8c8c8c" stroke-width="1"/><path d="M196.5,14V16" stroke="#8c8c8c" stroke-width="1"/><path d="M199.5,14V16" stroke="#8c8c8c" stroke-width="1"/><path d="M202.5,12.5V16" stroke="#8c8c8c" stroke-width="1"/><path d="M205.5,14V16" stroke="#8c8c8c" stroke-width="1"/><path d="M208.5,14V16" stroke="#8c8c8c" stroke-width="1"/><path d="M210.5,14V16" stroke="#8c8c8c" stroke-width="1"/><path d="M213.5,14V16" stroke="#8c8c8c" stroke-width="1"/><path d="M216.5,1V16" stroke="#9a9a9a" stroke-width="1"/><text x="217.8" y="9.9" font-size="10" letter-spacing="-0.5" fill="#fff" font-family="Liberation Sans">50</text><path d="M219.5,14V16" stroke="#8c8c8c" stroke-width="1"/><path d="M222.5,14V16" stroke="#8c8c8c" stroke-width="1"/><path d="M225.5,14V16" stroke="#8c8c8c" stroke-width="1"/><path d="M228.5,14V16" stroke="#8c8c8c" stroke-width="1"/><path d="M230.5,12.5V16" stroke="#8c8c8c" stroke-width="1"/><path d="M233.5,14V16" stroke="#8c8c8c" stroke-width="1"/><path d="M236.5,14V16" stroke="#8c8c8c" stroke-width="1"/><path d="M239.5,14V16" stroke="#8c8c8c" stroke-width="1"/><path d="M242.5,14V16" stroke="#8c8c8c" stroke-width="1"/><path d="M245.5,1V16" stroke="#9a9a9a" stroke-width="1"/><text x="246.8" y="9.9" font-size="10" letter-spacing="-0.5" fill="#fff" font-family="Liberation Sans">40</text><path d="M247.5,14V16" stroke="#8c8c8c" stroke-width="1"/><path d="M250.5,14V16" stroke="#8c8c8c" stroke-width="1"/><path d="M253.5,14V16" stroke="#8c8c8c" stroke-width="1"/><path d="M256.5,14V16" stroke="#8c8c8c" stroke-width="1"/><path d="M259.5,12.5V16" stroke="#8c8c8c" stroke-width="1"/><path d="M262.5,14V16" stroke="#8c8c8c" stroke-width="1"/><path d="M264.5,14V16" stroke="#8c8c8c" stroke-width="1"/><path d="M267.5,14V16" stroke="#8c8c8c" stroke-width="1"/><path d="M270.5,14V16" stroke="#8c8c8c" stroke-width="1"/><path d="M273.5,1V16" stroke="#9a9a9a" stroke-width="1"/><text x="274.8" y="9.9" font-size="10" letter-spacing="-0.5" fill="#fff" font-family="Liberation Sans">30</text><path d="M276.5,14V16" stroke="#8c8c8c" stroke-width="1"/><path d="M279.5,14V16" stroke="#8c8c8c" stroke-width="1"/><path d="M281.5,14V16" stroke="#8c8c8c" stroke-width="1"/><path d="M284.5,14V16" stroke="#8c8c8c" stroke-width="1"/><path d="M287.5,12.5V16" stroke="#8c8c8c" stroke-width="1"/><path d="M290.5,14V16" stroke="#8c8c8c" stroke-width="1"/><path d="M293.5,14V16" stroke="#8c8c8c" stroke-width="1"/><path d="M296.5,14V16" stroke="#8c8c8c" stroke-width="1"/><path d="M298.5,14V16" stroke="#8c8c8c" stroke-width="1"/><path d="M301.5,1V16" stroke="#9a9a9a" stroke-width="1"/><text x="302.8" y="9.9" font-size="10" letter-spacing="-0.5" fill="#fff" font-family="Liberation Sans">20</text><path d="M304.5,14V16" stroke="#8c8c8c" stroke-width="1"/><path d="M307.5,14V16" stroke="#8c8c8c" stroke-width="1"/><path d="M310.5,14V16" stroke="#8c8c8c" stroke-width="1"/><path d="M313.5,14V16" stroke="#8c8c8c" stroke-width="1"/><path d="M315.5,12.5V16" stroke="#8c8c8c" stroke-width="1"/><path d="M318.5,14V16" stroke="#8c8c8c" stroke-width="1"/><path d="M321.5,14V16" stroke="#8c8c8c" stroke-width="1"/><path d="M324.5,14V16" stroke="#8c8c8c" stroke-width="1"/><path d="M327.5,14V16" stroke="#8c8c8c" stroke-width="1"/><path d="M330.5,1V16" stroke="#9a9a9a" stroke-width="1"/><text x="331.8" y="9.9" font-size="10" letter-spacing="-0.5" fill="#fff" font-family="Liberation Sans">10</text><path d="M332.5,14V16" stroke="#8c8c8c" stroke-width="1"/><path d="M335.5,14V16" stroke="#8c8c8c" stroke-width="1"/><path d="M338.5,14V16" stroke="#8c8c8c" stroke-width="1"/><path d="M341.5,14V16" stroke="#8c8c8c" stroke-width="1"/><path d="M344.5,12.5V16" stroke="#8c8c8c" stroke-width="1"/><path d="M347.5,14V16" stroke="#8c8c8c" stroke-width="1"/><path d="M349.5,14V16" stroke="#8c8c8c" stroke-width="1"/><path d="M352.5,14V16" stroke="#8c8c8c" stroke-width="1"/><path d="M355.5,14V16" stroke="#8c8c8c" stroke-width="1"/><path d="M358.5,1V16" stroke="#9a9a9a" stroke-width="1"/><text x="359.8" y="9.9" font-size="10" letter-spacing="-0.5" fill="#fff" font-family="Liberation Sans">0</text><path d="M361.5,14V16" stroke="#8c8c8c" stroke-width="1"/><path d="M364.5,14V16" stroke="#8c8c8c" stroke-width="1"/><path d="M366.5,14V16" stroke="#8c8c8c" stroke-width="1"/><path d="M369.5,14V16" stroke="#8c8c8c" stroke-width="1"/><path d="M372.5,12.5V16" stroke="#8c8c8c" stroke-width="1"/><path d="M375.5,14V16" stroke="#8c8c8c" stroke-width="1"/><path d="M378.5,14V16" stroke="#8c8c8c" stroke-width="1"/><path d="M381.5,14V16" stroke="#8c8c8c" stroke-width="1"/><path d="M383.5,14V16" stroke="#8c8c8c" stroke-width="1"/><path d="M386.5,1V16" stroke="#9a9a9a" stroke-width="1"/><text x="387.8" y="9.9" font-size="10" letter-spacing="-0.5" fill="#fff" font-family="Liberation Sans">10</text><path d="M389.5,14V16" stroke="#8c8c8c" stroke-width="1"/><path d="M392.5,14V16" stroke="#8c8c8c" stroke-width="1"/><path d="M395.5,14V16" stroke="#8c8c8c" stroke-width="1"/><path d="M398.5,14V16" stroke="#8c8c8c" stroke-width="1"/><path d="M400.5,12.5V16" stroke="#8c8c8c" stroke-width="1"/><path d="M403.5,14V16" stroke="#8c8c8c" stroke-width="1"/><path d="M406.5,14V16" stroke="#8c8c8c" stroke-width="1"/><path d="M409.5,14V16" stroke="#8c8c8c" stroke-width="1"/><path d="M412.5,14V16" stroke="#8c8c8c" stroke-width="1"/><path d="M415.5,1V16" stroke="#9a9a9a" stroke-width="1"/><text x="416.8" y="9.9" font-size="10" letter-spacing="-0.5" fill="#fff" font-family="Liberation Sans">20</text><path d="M417.5,14V16" stroke="#8c8c8c" stroke-width="1"/><path d="M420.5,14V16" stroke="#8c8c8c" stroke-width="1"/><path d="M423.5,14V16" stroke="#8c8c8c" stroke-width="1"/><path d="M426.5,14V16" stroke="#8c8c8c" stroke-width="1"/><path d="M429.5,12.5V16" stroke="#8c8c8c" stroke-width="1"/><path d="M432.5,14V16" stroke="#8c8c8c" stroke-width="1"/><path d="M434.5,14V16" stroke="#8c8c8c" stroke-width="1"/><path d="M437.5,14V16" stroke="#8c8c8c" stroke-width="1"/><path d="M440.5,14V16" stroke="#8c8c8c" stroke-width="1"/><path d="M443.5,1V16" stroke="#9a9a9a" stroke-width="1"/><text x="444.8" y="9.9" font-size="10" letter-spacing="-0.5" fill="#fff" font-family="Liberation Sans">30</text><path d="M446.5,14V16" stroke="#8c8c8c" stroke-width="1"/><path d="M449.5,14V16" stroke="#8c8c8c" stroke-width="1"/><path d="M451.5,14V16" stroke="#8c8c8c" stroke-width="1"/><path d="M454.5,14V16" stroke="#8c8c8c" stroke-width="1"/><path d="M457.5,12.5V16" stroke="#8c8c8c" stroke-width="1"/><path d="M460.5,14V16" stroke="#8c8c8c" stroke-width="1"/><path d="M463.5,14V16" stroke="#8c8c8c" stroke-width="1"/><path d="M466.5,14V16" stroke="#8c8c8c" stroke-width="1"/><path d="M468.5,14V16" stroke="#8c8c8c" stroke-width="1"/><path d="M471.5,1V16" stroke="#9a9a9a" stroke-width="1"/><text x="472.8" y="9.9" font-size="10" letter-spacing="-0.5" fill="#fff" font-family="Liberation Sans">40</text><path d="M474.5,14V16" stroke="#8c8c8c" stroke-width="1"/><path d="M477.5,14V16" stroke="#8c8c8c" stroke-width="1"/><path d="M480.5,14V16" stroke="#8c8c8c" stroke-width="1"/><path d="M483.5,14V16" stroke="#8c8c8c" stroke-width="1"/><path d="M485.5,12.5V16" stroke="#8c8c8c" stroke-width="1"/><path d="M488.5,14V16" stroke="#8c8c8c" stroke-width="1"/><path d="M491.5,14V16" stroke="#8c8c8c" stroke-width="1"/><path d="M494.5,14V16" stroke="#8c8c8c" stroke-width="1"/><path d="M497.5,14V16" stroke="#8c8c8c" stroke-width="1"/><path d="M500.5,1V16" stroke="#9a9a9a" stroke-width="1"/><text x="501.8" y="9.9" font-size="10" letter-spacing="-0.5" fill="#fff" font-family="Liberation Sans">50</text><path d="M502.5,14V16" stroke="#8c8c8c" stroke-width="1"/><path d="M505.5,14V16" stroke="#8c8c8c" stroke-width="1"/><path d="M508.5,14V16" stroke="#8c8c8c" stroke-width="1"/><path d="M511.5,14V16" stroke="#8c8c8c" stroke-width="1"/><path d="M514.5,12.5V16" stroke="#8c8c8c" stroke-width="1"/><path d="M517.5,14V16" stroke="#8c8c8c" stroke-width="1"/><path d="M519.5,14V16" stroke="#8c8c8c" stroke-width="1"/><path d="M522.5,14V16" stroke="#8c8c8c" stroke-width="1"/><path d="M525.5,14V16" stroke="#8c8c8c" stroke-width="1"/><path d="M528.5,1V16" stroke="#9a9a9a" stroke-width="1"/><text x="529.8" y="9.9" font-size="10" letter-spacing="-0.5" fill="#fff" font-family="Liberation Sans">60</text><path d="M531.5,14V16" stroke="#8c8c8c" stroke-width="1"/><path d="M534.5,14V16" stroke="#8c8c8c" stroke-width="1"/><path d="M536.5,14V16" stroke="#8c8c8c" stroke-width="1"/><path d="M539.5,14V16" stroke="#8c8c8c" stroke-width="1"/><path d="M542.5,12.5V16" stroke="#8c8c8c" stroke-width="1"/><path d="M545.5,14V16" stroke="#8c8c8c" stroke-width="1"/><path d="M548.5,14V16" stroke="#8c8c8c" stroke-width="1"/><path d="M551.5,14V16" stroke="#8c8c8c" stroke-width="1"/><path d="M553.5,14V16" stroke="#8c8c8c" stroke-width="1"/><path d="M556.5,1V16" stroke="#9a9a9a" stroke-width="1"/><text x="557.8" y="9.9" font-size="10" letter-spacing="-0.5" fill="#fff" font-family="Liberation Sans">70</text><path d="M559.5,14V16" stroke="#8c8c8c" stroke-width="1"/><path d="M562.5,14V16" stroke="#8c8c8c" stroke-width="1"/><path d="M565.5,14V16" stroke="#8c8c8c" stroke-width="1"/><path d="M568.5,14V16" stroke="#8c8c8c" stroke-width="1"/><path d="M570.5,12.5V16" stroke="#8c8c8c" stroke-width="1"/><path d="M573.5,14V16" stroke="#8c8c8c" stroke-width="1"/><path d="M576.5,14V16" stroke="#8c8c8c" stroke-width="1"/><path d="M579.5,14V16" stroke="#8c8c8c" stroke-width="1"/><path d="M582.5,14V16" stroke="#8c8c8c" stroke-width="1"/><path d="M585.5,1V16" stroke="#9a9a9a" stroke-width="1"/><text x="586.8" y="9.9" font-size="10" letter-spacing="-0.5" fill="#fff" font-family="Liberation Sans">80</text><path d="M588.5,14V16" stroke="#8c8c8c" stroke-width="1"/><path d="M590.5,14V16" stroke="#8c8c8c" stroke-width="1"/><path d="M593.5,14V16" stroke="#8c8c8c" stroke-width="1"/><path d="M596.5,14V16" stroke="#8c8c8c" stroke-width="1"/><path d="M599.5,12.5V16" stroke="#8c8c8c" stroke-width="1"/><path d="M602.5,14V16" stroke="#8c8c8c" stroke-width="1"/><path d="M605.5,14V16" stroke="#8c8c8c" stroke-width="1"/><path d="M607.5,14V16" stroke="#8c8c8c" stroke-width="1"/><path d="M610.5,14V16" stroke="#8c8c8c" stroke-width="1"/><path d="M613.5,1V16" stroke="#9a9a9a" stroke-width="1"/><text x="614.8" y="9.9" font-size="10" letter-spacing="-0.5" fill="#fff" font-family="Liberation Sans">90</text><path d="M616.5,14V16" stroke="#8c8c8c" stroke-width="1"/><path d="M619.5,14V16" stroke="#8c8c8c" stroke-width="1"/><path d="M622.5,14V16" stroke="#8c8c8c" stroke-width="1"/><path d="M624.5,14V16" stroke="#8c8c8c" stroke-width="1"/><path d="M627.5,12.5V16" stroke="#8c8c8c" stroke-width="1"/><path d="M630.5,14V16" stroke="#8c8c8c" stroke-width="1"/><path d="M633.5,14V16" stroke="#8c8c8c" stroke-width="1"/><path d="M636.5,14V16" stroke="#8c8c8c" stroke-width="1"/><path d="M639.5,14V16" stroke="#8c8c8c" stroke-width="1"/><path d="M641.5,1V16" stroke="#9a9a9a" stroke-width="1"/><text x="642.8" y="9.9" font-size="10" letter-spacing="-0.5" fill="#fff" font-family="Liberation Sans">100</text><path d="M644.5,14V16" stroke="#8c8c8c" stroke-width="1"/><path d="M647.5,14V16" stroke="#8c8c8c" stroke-width="1"/><path d="M650.5,14V16" stroke="#8c8c8c" stroke-width="1"/><path d="M653.5,14V16" stroke="#8c8c8c" stroke-width="1"/><path d="M656.5,12.5V16" stroke="#8c8c8c" stroke-width="1"/><path d="M658.5,14V16" stroke="#8c8c8c" stroke-width="1"/><path d="M661.5,14V16" stroke="#8c8c8c" stroke-width="1"/><path d="M664.5,14V16" stroke="#8c8c8c" stroke-width="1"/><path d="M667.5,14V16" stroke="#8c8c8c" stroke-width="1"/><path d="M670.5,1V16" stroke="#9a9a9a" stroke-width="1"/><text x="671.8" y="9.9" font-size="10" letter-spacing="-0.5" fill="#fff" font-family="Liberation Sans">110</text><path d="M673.5,14V16" stroke="#8c8c8c" stroke-width="1"/><path d="M675.5,14V16" stroke="#8c8c8c" stroke-width="1"/><path d="M678.5,14V16" stroke="#8c8c8c" stroke-width="1"/><path d="M681.5,14V16" stroke="#8c8c8c" stroke-width="1"/><path d="M684.5,12.5V16" stroke="#8c8c8c" stroke-width="1"/><path d="M687.5,14V16" stroke="#8c8c8c" stroke-width="1"/><path d="M690.5,14V16" stroke="#8c8c8c" stroke-width="1"/><path d="M692.5,14V16" stroke="#8c8c8c" stroke-width="1"/><path d="M695.5,14V16" stroke="#8c8c8c" stroke-width="1"/><path d="M698.5,1V16" stroke="#9a9a9a" stroke-width="1"/><text x="699.8" y="9.9" font-size="10" letter-spacing="-0.5" fill="#fff" font-family="Liberation Sans">120</text><path d="M701.5,14V16" stroke="#8c8c8c" stroke-width="1"/><path d="M704.5,14V16" stroke="#8c8c8c" stroke-width="1"/><path d="M707.5,14V16" stroke="#8c8c8c" stroke-width="1"/><path d="M709.5,14V16" stroke="#8c8c8c" stroke-width="1"/><path d="M712.5,12.5V16" stroke="#8c8c8c" stroke-width="1"/><path d="M715.5,14V16" stroke="#8c8c8c" stroke-width="1"/><path d="M718.5,14V16" stroke="#8c8c8c" stroke-width="1"/><path d="M721.5,14V16" stroke="#8c8c8c" stroke-width="1"/><path d="M724.5,14V16" stroke="#8c8c8c" stroke-width="1"/><path d="M726.5,1V16" stroke="#9a9a9a" stroke-width="1"/><text x="727.8" y="9.9" font-size="10" letter-spacing="-0.5" fill="#fff" font-family="Liberation Sans">130</text><path d="M729.5,14V16" stroke="#8c8c8c" stroke-width="1"/><path d="M732.5,14V16" stroke="#8c8c8c" stroke-width="1"/><path d="M735.5,14V16" stroke="#8c8c8c" stroke-width="1"/><path d="M738.5,14V16" stroke="#8c8c8c" stroke-width="1"/><path d="M741.5,12.5V16" stroke="#8c8c8c" stroke-width="1"/><path d="M743.5,14V16" stroke="#8c8c8c" stroke-width="1"/><path d="M746.5,14V16" stroke="#8c8c8c" stroke-width="1"/><path d="M749.5,14V16" stroke="#8c8c8c" stroke-width="1"/><path d="M752.5,14V16" stroke="#8c8c8c" stroke-width="1"/><path d="M755.5,1V16" stroke="#9a9a9a" stroke-width="1"/><text x="756.8" y="9.9" font-size="10" letter-spacing="-0.5" fill="#fff" font-family="Liberation Sans">140</text><path d="M758.5,14V16" stroke="#8c8c8c" stroke-width="1"/><path d="M760.5,14V16" stroke="#8c8c8c" stroke-width="1"/><path d="M763.5,14V16" stroke="#8c8c8c" stroke-width="1"/><path d="M766.5,14V16" stroke="#8c8c8c" stroke-width="1"/><path d="M769.5,12.5V16" stroke="#8c8c8c" stroke-width="1"/><path d="M772.5,14V16" stroke="#8c8c8c" stroke-width="1"/><path d="M775.5,14V16" stroke="#8c8c8c" stroke-width="1"/><path d="M777.5,14V16" stroke="#8c8c8c" stroke-width="1"/><path d="M780.5,14V16" stroke="#8c8c8c" stroke-width="1"/><path d="M783.5,1V16" stroke="#9a9a9a" stroke-width="1"/><text x="784.8" y="9.9" font-size="10" letter-spacing="-0.5" fill="#fff" font-family="Liberation Sans">150</text><path d="M786.5,14V16" stroke="#8c8c8c" stroke-width="1"/><path d="M789.5,14V16" stroke="#8c8c8c" stroke-width="1"/><path d="M792.5,14V16" stroke="#8c8c8c" stroke-width="1"/><path d="M794.5,14V16" stroke="#8c8c8c" stroke-width="1"/><path d="M797.5,12.5V16" stroke="#8c8c8c" stroke-width="1"/><path d="M800.5,14V16" stroke="#8c8c8c" stroke-width="1"/><path d="M803.5,14V16" stroke="#8c8c8c" stroke-width="1"/><path d="M806.5,14V16" stroke="#8c8c8c" stroke-width="1"/><path d="M809.5,14V16" stroke="#8c8c8c" stroke-width="1"/><path d="M811.5,1V16" stroke="#9a9a9a" stroke-width="1"/><text x="812.8" y="9.9" font-size="10" letter-spacing="-0.5" fill="#fff" font-family="Liberation Sans">160</text><path d="M814.5,14V16" stroke="#8c8c8c" stroke-width="1"/><path d="M817.5,14V16" stroke="#8c8c8c" stroke-width="1"/><path d="M820.5,14V16" stroke="#8c8c8c" stroke-width="1"/><path d="M823.5,14V16" stroke="#8c8c8c" stroke-width="1"/><path d="M826.5,12.5V16" stroke="#8c8c8c" stroke-width="1"/><path d="M828.5,14V16" stroke="#8c8c8c" stroke-width="1"/><path d="M831.5,14V16" stroke="#8c8c8c" stroke-width="1"/><path d="M834.5,14V16" stroke="#8c8c8c" stroke-width="1"/><path d="M837.5,14V16" stroke="#8c8c8c" stroke-width="1"/><path d="M840.5,1V16" stroke="#9a9a9a" stroke-width="1"/><text x="841.8" y="9.9" font-size="10" letter-spacing="-0.5" fill="#fff" font-family="Liberation Sans">170</text><path d="M843.5,14V16" stroke="#8c8c8c" stroke-width="1"/><path d="M845.5,14V16" stroke="#8c8c8c" stroke-width="1"/><path d="M848.5,14V16" stroke="#8c8c8c" stroke-width="1"/><path d="M851.5,14V16" stroke="#8c8c8c" stroke-width="1"/><path d="M854.5,12.5V16" stroke="#8c8c8c" stroke-width="1"/><path d="M857.5,14V16" stroke="#8c8c8c" stroke-width="1"/><path d="M860.5,14V16" stroke="#8c8c8c" stroke-width="1"/><path d="M862.5,14V16" stroke="#8c8c8c" stroke-width="1"/><path d="M865.5,14V16" stroke="#8c8c8c" stroke-width="1"/><path d="M868.5,1V16" stroke="#9a9a9a" stroke-width="1"/><text x="869.8" y="9.9" font-size="10" letter-spacing="-0.5" fill="#fff" font-family="Liberation Sans">180</text><path d="M871.5,14V16" stroke="#8c8c8c" stroke-width="1"/><path d="M874.5,14V16" stroke="#8c8c8c" stroke-width="1"/><path d="M877.5,14V16" stroke="#8c8c8c" stroke-width="1"/><path d="M879.5,14V16" stroke="#8c8c8c" stroke-width="1"/><path d="M882.5,12.5V16" stroke="#8c8c8c" stroke-width="1"/><path d="M885.5,14V16" stroke="#8c8c8c" stroke-width="1"/><path d="M888.5,14V16" stroke="#8c8c8c" stroke-width="1"/><path d="M891.5,14V16" stroke="#8c8c8c" stroke-width="1"/><path d="M894.5,14V16" stroke="#8c8c8c" stroke-width="1"/><path d="M896.5,1V16" stroke="#9a9a9a" stroke-width="1"/><text x="897.8" y="9.9" font-size="10" letter-spacing="-0.5" fill="#fff" font-family="Liberation Sans">190</text><path d="M899.5,14V16" stroke="#8c8c8c" stroke-width="1"/><path d="M902.5,14V16" stroke="#8c8c8c" stroke-width="1"/><path d="M905.5,14V16" stroke="#8c8c8c" stroke-width="1"/><path d="M908.5,14V16" stroke="#8c8c8c" stroke-width="1"/><path d="M911.5,12.5V16" stroke="#8c8c8c" stroke-width="1"/><path d="M913.5,14V16" stroke="#8c8c8c" stroke-width="1"/><path d="M916.5,14V16" stroke="#8c8c8c" stroke-width="1"/><path d="M919.5,14V16" stroke="#8c8c8c" stroke-width="1"/><path d="M922.5,14V16" stroke="#8c8c8c" stroke-width="1"/><path d="M925.5,1V16" stroke="#9a9a9a" stroke-width="1"/><text x="926.8" y="9.9" font-size="10" letter-spacing="-0.5" fill="#fff" font-family="Liberation Sans">200</text><path d="M928.5,14V16" stroke="#8c8c8c" stroke-width="1"/><path d="M930.5,14V16" stroke="#8c8c8c" stroke-width="1"/><path d="M933.5,14V16" stroke="#8c8c8c" stroke-width="1"/><path d="M936.5,14V16" stroke="#8c8c8c" stroke-width="1"/><path d="M939.5,12.5V16" stroke="#8c8c8c" stroke-width="1"/><path d="M942.5,14V16" stroke="#8c8c8c" stroke-width="1"/><path d="M945.5,14V16" stroke="#8c8c8c" stroke-width="1"/><path d="M948.5,14V16" stroke="#8c8c8c" stroke-width="1"/><path d="M950.5,14V16" stroke="#8c8c8c" stroke-width="1"/><path d="M953.5,1V16" stroke="#9a9a9a" stroke-width="1"/><text x="954.8" y="9.9" font-size="10" letter-spacing="-0.5" fill="#fff" font-family="Liberation Sans">210</text><path d="M956.5,14V16" stroke="#8c8c8c" stroke-width="1"/><path d="M959.5,14V16" stroke="#8c8c8c" stroke-width="1"/><path d="M962.5,14V16" stroke="#8c8c8c" stroke-width="1"/><path d="M965.5,14V16" stroke="#8c8c8c" stroke-width="1"/><path d="M967.5,12.5V16" stroke="#8c8c8c" stroke-width="1"/><path d="M970.5,14V16" stroke="#8c8c8c" stroke-width="1"/><path d="M973.5,14V16" stroke="#8c8c8c" stroke-width="1"/><path d="M976.5,14V16" stroke="#8c8c8c" stroke-width="1"/><path d="M979.5,14V16" stroke="#8c8c8c" stroke-width="1"/><path d="M982.5,1V16" stroke="#9a9a9a" stroke-width="1"/><text x="983.8" y="9.9" font-size="10" letter-spacing="-0.5" fill="#fff" font-family="Liberation Sans">220</text><path d="M984.5,14V16" stroke="#8c8c8c" stroke-width="1"/><path d="M987.5,14V16" stroke="#8c8c8c" stroke-width="1"/><path d="M990.5,14V16" stroke="#8c8c8c" stroke-width="1"/><path d="M993.5,14V16" stroke="#8c8c8c" stroke-width="1"/><path d="M996.5,12.5V16" stroke="#8c8c8c" stroke-width="1"/><path d="M999.5,14V16" stroke="#8c8c8c" stroke-width="1"/><path d="M1001.5,14V16" stroke="#8c8c8c" stroke-width="1"/><path d="M1004.5,14V16" stroke="#8c8c8c" stroke-width="1"/><path d="M1007.5,14V16" stroke="#8c8c8c" stroke-width="1"/><path d="M1010.5,1V16" stroke="#9a9a9a" stroke-width="1"/><text x="1011.8" y="9.9" font-size="10" letter-spacing="-0.5" fill="#fff" font-family="Liberation Sans">230</text><path d="M1013.5,14V16" stroke="#8c8c8c" stroke-width="1"/><path d="M1016.5,14V16" stroke="#8c8c8c" stroke-width="1"/><path d="M1018.5,14V16" stroke="#8c8c8c" stroke-width="1"/><path d="M1021.5,14V16" stroke="#8c8c8c" stroke-width="1"/><path d="M1024.5,12.5V16" stroke="#8c8c8c" stroke-width="1"/><path d="M1027.5,14V16" stroke="#8c8c8c" stroke-width="1"/><path d="M1030.5,14V16" stroke="#8c8c8c" stroke-width="1"/><path d="M1033.5,14V16" stroke="#8c8c8c" stroke-width="1"/><path d="M1035.5,14V16" stroke="#8c8c8c" stroke-width="1"/><path d="M1038.5,1V16" stroke="#9a9a9a" stroke-width="1"/><text x="1039.8" y="9.9" font-size="10" letter-spacing="-0.5" fill="#fff" font-family="Liberation Sans">240</text><path d="M1041.5,14V16" stroke="#8c8c8c" stroke-width="1"/><path d="M1044.5,14V16" stroke="#8c8c8c" stroke-width="1"/><path d="M1047.5,14V16" stroke="#8c8c8c" stroke-width="1"/><path d="M1050.5,14V16" stroke="#8c8c8c" stroke-width="1"/><path d="M1052.5,12.5V16" stroke="#8c8c8c" stroke-width="1"/><path d="M1055.5,14V16" stroke="#8c8c8c" stroke-width="1"/><path d="M1058.5,14V16" stroke="#8c8c8c" stroke-width="1"/><path d="M1061.5,14V16" stroke="#8c8c8c" stroke-width="1"/><path d="M1064.5,14V16" stroke="#8c8c8c" stroke-width="1"/><path d="M1067.5,1V16" stroke="#9a9a9a" stroke-width="1"/><text x="1068.8" y="9.9" font-size="10" letter-spacing="-0.5" fill="#fff" font-family="Liberation Sans">250</text><path d="M1069.5,14V16" stroke="#8c8c8c" stroke-width="1"/><path d="M1072.5,14V16" stroke="#8c8c8c" stroke-width="1"/><path d="M1075.5,14V16" stroke="#8c8c8c" stroke-width="1"/><path d="M1078.5,14V16" stroke="#8c8c8c" stroke-width="1"/><path d="M1081.5,12.5V16" stroke="#8c8c8c" stroke-width="1"/><path d="M1084.5,14V16" stroke="#8c8c8c" stroke-width="1"/><path d="M1086.5,14V16" stroke="#8c8c8c" stroke-width="1"/><path d="M1089.5,14V16" stroke="#8c8c8c" stroke-width="1"/><path d="M1092.5,14V16" stroke="#8c8c8c" stroke-width="1"/><path d="M1095.5,1V16" stroke="#9a9a9a" stroke-width="1"/><text x="1096.8" y="9.9" font-size="10" letter-spacing="-0.5" fill="#fff" font-family="Liberation Sans">260</text><path d="M1098.5,14V16" stroke="#8c8c8c" stroke-width="1"/><path d="M1101.5,14V16" stroke="#8c8c8c" stroke-width="1"/><path d="M1103.5,14V16" stroke="#8c8c8c" stroke-width="1"/><path d="M1106.5,14V16" stroke="#8c8c8c" stroke-width="1"/><path d="M1109.5,12.5V16" stroke="#8c8c8c" stroke-width="1"/><path d="M1112.5,14V16" stroke="#8c8c8c" stroke-width="1"/><path d="M1115.5,14V16" stroke="#8c8c8c" stroke-width="1"/><path d="M1118.5,14V16" stroke="#8c8c8c" stroke-width="1"/><path d="M1120.5,14V16" stroke="#8c8c8c" stroke-width="1"/><path d="M1123.5,1V16" stroke="#9a9a9a" stroke-width="1"/><text x="1124.8" y="9.9" font-size="10" letter-spacing="-0.5" fill="#fff" font-family="Liberation Sans">270</text><path d="M1126.5,14V16" stroke="#8c8c8c" stroke-width="1"/><path d="M1129.5,14V16" stroke="#8c8c8c" stroke-width="1"/><path d="M1132.5,14V16" stroke="#8c8c8c" stroke-width="1"/><path d="M1135.5,14V16" stroke="#8c8c8c" stroke-width="1"/><path d="M1137.5,12.5V16" stroke="#8c8c8c" stroke-width="1"/><path d="M1140.5,14V16" stroke="#8c8c8c" stroke-width="1"/><path d="M1143.5,14V16" stroke="#8c8c8c" stroke-width="1"/><path d="M1146.5,14V16" stroke="#8c8c8c" stroke-width="1"/><path d="M1149.5,14V16" stroke="#8c8c8c" stroke-width="1"/><path d="M1152.5,1V16" stroke="#9a9a9a" stroke-width="1"/><text x="1153.8" y="9.9" font-size="10" letter-spacing="-0.5" fill="#fff" font-family="Liberation Sans">280</text><path d="M1154.5,14V16" stroke="#8c8c8c" stroke-width="1"/><path d="M1157.5,14V16" stroke="#8c8c8c" stroke-width="1"/><path d="M1160.5,14V16" stroke="#8c8c8c" stroke-width="1"/><path d="M1163.5,14V16" stroke="#8c8c8c" stroke-width="1"/><path d="M1166.5,12.5V16" stroke="#8c8c8c" stroke-width="1"/><path d="M1169.5,14V16" stroke="#8c8c8c" stroke-width="1"/><path d="M1171.5,14V16" stroke="#8c8c8c" stroke-width="1"/><path d="M1174.5,14V16" stroke="#8c8c8c" stroke-width="1"/><path d="M1177.5,14V16" stroke="#8c8c8c" stroke-width="1"/><path d="M1180.5,1V16" stroke="#9a9a9a" stroke-width="1"/><text x="1181.8" y="9.9" font-size="10" letter-spacing="-0.5" fill="#fff" font-family="Liberation Sans">290</text><path d="M1183.5,14V16" stroke="#8c8c8c" stroke-width="1"/><path d="M1186.5,14V16" stroke="#8c8c8c" stroke-width="1"/><path d="M1188.5,14V16" stroke="#8c8c8c" stroke-width="1"/><path d="M1191.5,14V16" stroke="#8c8c8c" stroke-width="1"/><path d="M1194.5,12.5V16" stroke="#8c8c8c" stroke-width="1"/><path d="M1197.5,14V16" stroke="#8c8c8c" stroke-width="1"/><path d="M1200.5,14V16" stroke="#8c8c8c" stroke-width="1"/><path d="M1203.5,14V16" stroke="#8c8c8c" stroke-width="1"/><path d="M1205.5,14V16" stroke="#8c8c8c" stroke-width="1"/><path d="M1208.5,1V16" stroke="#9a9a9a" stroke-width="1"/><text x="1209.8" y="9.9" font-size="10" letter-spacing="-0.5" fill="#fff" font-family="Liberation Sans">300</text><path d="M1211.5,14V16" stroke="#8c8c8c" stroke-width="1"/><path d="M1214.5,14V16" stroke="#8c8c8c" stroke-width="1"/><path d="M1217.5,14V16" stroke="#8c8c8c" stroke-width="1"/><path d="M1220.5,14V16" stroke="#8c8c8c" stroke-width="1"/><path d="M1222.5,12.5V16" stroke="#8c8c8c" stroke-width="1"/><path d="M1225.5,14V16" stroke="#8c8c8c" stroke-width="1"/><path d="M1228.5,14V16" stroke="#8c8c8c" stroke-width="1"/><path d="M1231.5,14V16" stroke="#8c8c8c" stroke-width="1"/><path d="M1234.5,14V16" stroke="#8c8c8c" stroke-width="1"/><path d="M1237.5,1V16" stroke="#9a9a9a" stroke-width="1"/><text x="1238.8" y="9.9" font-size="10" letter-spacing="-0.5" fill="#fff" font-family="Liberation Sans">310</text><path d="M1239.5,14V16" stroke="#8c8c8c" stroke-width="1"/><path d="M1242.5,14V16" stroke="#8c8c8c" stroke-width="1"/><path d="M1245.5,14V16" stroke="#8c8c8c" stroke-width="1"/><path d="M1248.5,14V16" stroke="#8c8c8c" stroke-width="1"/><path d="M1251.5,12.5V16" stroke="#8c8c8c" stroke-width="1"/><path d="M1254.5,14V16" stroke="#8c8c8c" stroke-width="1"/><path d="M1256.5,14V16" stroke="#8c8c8c" stroke-width="1"/><path d="M1259.5,14V16" stroke="#8c8c8c" stroke-width="1"/><path d="M1262.5,14V16" stroke="#8c8c8c" stroke-width="1"/><path d="M1265.5,1V16" stroke="#9a9a9a" stroke-width="1"/><text x="1266.8" y="9.9" font-size="10" letter-spacing="-0.5" fill="#fff" font-family="Liberation Sans">320</text><path d="M1268.5,14V16" stroke="#8c8c8c" stroke-width="1"/><path d="M1271.5,14V16" stroke="#8c8c8c" stroke-width="1"/><path d="M1273.5,14V16" stroke="#8c8c8c" stroke-width="1"/><path d="M1276.5,14V16" stroke="#8c8c8c" stroke-width="1"/><path d="M1279.5,12.5V16" stroke="#8c8c8c" stroke-width="1"/><path d="M1282.5,14V16" stroke="#8c8c8c" stroke-width="1"/><path d="M1285.5,14V16" stroke="#8c8c8c" stroke-width="1"/><path d="M1288.5,14V16" stroke="#8c8c8c" stroke-width="1"/><path d="M1290.5,14V16" stroke="#8c8c8c" stroke-width="1"/><path d="M1293.5,1V16" stroke="#9a9a9a" stroke-width="1"/><text x="1294.8" y="9.9" font-size="10" letter-spacing="-0.5" fill="#fff" font-family="Liberation Sans">330</text><path d="M1296.5,14V16" stroke="#8c8c8c" stroke-width="1"/><path d="M1299.5,14V16" stroke="#8c8c8c" stroke-width="1"/><path d="M1302.5,14V16" stroke="#8c8c8c" stroke-width="1"/><path d="M1305.5,14V16" stroke="#8c8c8c" stroke-width="1"/><path d="M1308.5,12.5V16" stroke="#8c8c8c" stroke-width="1"/><path d="M1310.5,14V16" stroke="#8c8c8c" stroke-width="1"/><path d="M1313.5,14V16" stroke="#8c8c8c" stroke-width="1"/><path d="M1316.5,14V16" stroke="#8c8c8c" stroke-width="1"/><path d="M1319.5,14V16" stroke="#8c8c8c" stroke-width="1"/><path d="M1322.5,1V16" stroke="#9a9a9a" stroke-width="1"/><text x="1323.8" y="9.9" font-size="10" letter-spacing="-0.5" fill="#fff" font-family="Liberation Sans">340</text><path d="M1325.5,14V16" stroke="#8c8c8c" stroke-width="1"/><path d="M1327.5,14V16" stroke="#8c8c8c" stroke-width="1"/><path d="M1330.5,14V16" stroke="#8c8c8c" stroke-width="1"/><path d="M1333.5,14V16" stroke="#8c8c8c" stroke-width="1"/><path d="M1336.5,12.5V16" stroke="#8c8c8c" stroke-width="1"/><path d="M1339.5,14V16" stroke="#8c8c8c" stroke-width="1"/><path d="M1342.5,14V16" stroke="#8c8c8c" stroke-width="1"/><path d="M1344.5,14V16" stroke="#8c8c8c" stroke-width="1"/><path d="M1347.5,14V16" stroke="#8c8c8c" stroke-width="1"/><path d="M1350.5,1V16" stroke="#9a9a9a" stroke-width="1"/><text x="1351.8" y="9.9" font-size="10" letter-spacing="-0.5" fill="#fff" font-family="Liberation Sans">350</text><path d="M1353.5,14V16" stroke="#8c8c8c" stroke-width="1"/><path d="M1356.5,14V16" stroke="#8c8c8c" stroke-width="1"/><path d="M1359.5,14V16" stroke="#8c8c8c" stroke-width="1"/><path d="M1361.5,14V16" stroke="#8c8c8c" stroke-width="1"/><path d="M1364.5,12.5V16" stroke="#8c8c8c" stroke-width="1"/><path d="M1367.5,14V16" stroke="#8c8c8c" stroke-width="1"/><path d="M1370.5,14V16" stroke="#8c8c8c" stroke-width="1"/><path d="M1373.5,14V16" stroke="#8c8c8c" stroke-width="1"/><path d="M1376.5,14V16" stroke="#8c8c8c" stroke-width="1"/><path d="M1378.5,1V16" stroke="#9a9a9a" stroke-width="1"/><text x="1379.8" y="9.9" font-size="10" letter-spacing="-0.5" fill="#fff" font-family="Liberation Sans">360</text><path d="M1381.5,14V16" stroke="#8c8c8c" stroke-width="1"/><path d="M1384.5,14V16" stroke="#8c8c8c" stroke-width="1"/><path d="M1387.5,14V16" stroke="#8c8c8c" stroke-width="1"/><path d="M1390.5,14V16" stroke="#8c8c8c" stroke-width="1"/><path d="M1393.5,12.5V16" stroke="#8c8c8c" stroke-width="1"/><path d="M1395.5,14V16" stroke="#8c8c8c" stroke-width="1"/><path d="M1398.5,14V16" stroke="#8c8c8c" stroke-width="1"/><path d="M1401.5,14V16" stroke="#8c8c8c" stroke-width="1"/><path d="M1404.5,14V16" stroke="#8c8c8c" stroke-width="1"/><path d="M1407.5,1V16" stroke="#9a9a9a" stroke-width="1"/><text x="1408.8" y="9.9" font-size="10" letter-spacing="-0.5" fill="#fff" font-family="Liberation Sans">370</text><path d="M1410.5,14V16" stroke="#8c8c8c" stroke-width="1"/><path d="M1412.5,14V16" stroke="#8c8c8c" stroke-width="1"/><path d="M1415.5,14V16" stroke="#8c8c8c" stroke-width="1"/><path d="M1418.5,14V16" stroke="#8c8c8c" stroke-width="1"/><path d="M1421.5,12.5V16" stroke="#8c8c8c" stroke-width="1"/><path d="M1424.5,14V16" stroke="#8c8c8c" stroke-width="1"/><path d="M1427.5,14V16" stroke="#8c8c8c" stroke-width="1"/><path d="M1429.5,14V16" stroke="#8c8c8c" stroke-width="1"/><path d="M1432.5,14V16" stroke="#8c8c8c" stroke-width="1"/><path d="M1435.5,1V16" stroke="#9a9a9a" stroke-width="1"/><text x="1436.8" y="9.9" font-size="10" letter-spacing="-0.5" fill="#fff" font-family="Liberation Sans">380</text><path d="M1438.5,14V16" stroke="#8c8c8c" stroke-width="1"/><path d="M1441.5,14V16" stroke="#8c8c8c" stroke-width="1"/><path d="M1444.5,14V16" stroke="#8c8c8c" stroke-width="1"/><path d="M1446.5,14V16" stroke="#8c8c8c" stroke-width="1"/><path d="M1449.5,12.5V16" stroke="#8c8c8c" stroke-width="1"/><path d="M1452.5,14V16" stroke="#8c8c8c" stroke-width="1"/><path d="M1455.5,14V16" stroke="#8c8c8c" stroke-width="1"/><path d="M1458.5,14V16" stroke="#8c8c8c" stroke-width="1"/><path d="M1461.5,14V16" stroke="#8c8c8c" stroke-width="1"/><path d="M1463.5,1V16" stroke="#9a9a9a" stroke-width="1"/><text x="1464.8" y="9.9" font-size="10" letter-spacing="-0.5" fill="#fff" font-family="Liberation Sans">390</text><path d="M1466.5,14V16" stroke="#8c8c8c" stroke-width="1"/><path d="M1469.5,14V16" stroke="#8c8c8c" stroke-width="1"/><path d="M1472.5,14V16" stroke="#8c8c8c" stroke-width="1"/><path d="M1475.5,14V16" stroke="#8c8c8c" stroke-width="1"/><path d="M1478.5,12.5V16" stroke="#8c8c8c" stroke-width="1"/><path d="M1480.5,14V16" stroke="#8c8c8c" stroke-width="1"/><path d="M1483.5,14V16" stroke="#8c8c8c" stroke-width="1"/><path d="M1486.5,14V16" stroke="#8c8c8c" stroke-width="1"/><path d="M1489.5,14V16" stroke="#8c8c8c" stroke-width="1"/><path d="M1492.5,1V16" stroke="#9a9a9a" stroke-width="1"/><text x="1493.8" y="9.9" font-size="10" letter-spacing="-0.5" fill="#fff" font-family="Liberation Sans">400</text><path d="M1495.5,14V16" stroke="#8c8c8c" stroke-width="1"/><path d="M1497.5,14V16" stroke="#8c8c8c" stroke-width="1"/><path d="M1500.5,14V16" stroke="#8c8c8c" stroke-width="1"/><path d="M1503.5,14V16" stroke="#8c8c8c" stroke-width="1"/><path d="M1506.5,12.5V16" stroke="#8c8c8c" stroke-width="1"/><path d="M1509.5,14V16" stroke="#8c8c8c" stroke-width="1"/><path d="M1512.5,14V16" stroke="#8c8c8c" stroke-width="1"/><path d="M1514.5,14V16" stroke="#8c8c8c" stroke-width="1"/><path d="M1517.5,14V16" stroke="#8c8c8c" stroke-width="1"/><path d="M1520.5,1V16" stroke="#9a9a9a" stroke-width="1"/><text x="1521.8" y="9.9" font-size="10" letter-spacing="-0.5" fill="#fff" font-family="Liberation Sans">410</text><path d="M1523.5,14V16" stroke="#8c8c8c" stroke-width="1"/><path d="M1526.5,14V16" stroke="#8c8c8c" stroke-width="1"/><path d="M1529.5,14V16" stroke="#8c8c8c" stroke-width="1"/><path d="M1531.5,14V16" stroke="#8c8c8c" stroke-width="1"/><path d="M1534.5,12.5V16" stroke="#8c8c8c" stroke-width="1"/><path d="M1537.5,14V16" stroke="#8c8c8c" stroke-width="1"/><path d="M1540.5,14V16" stroke="#8c8c8c" stroke-width="1"/><path d="M1543.5,14V16" stroke="#8c8c8c" stroke-width="1"/><path d="M1546.5,14V16" stroke="#8c8c8c" stroke-width="1"/><path d="M1548.5,1V16" stroke="#9a9a9a" stroke-width="1"/><text x="1549.8" y="9.9" font-size="10" letter-spacing="-0.5" fill="#fff" font-family="Liberation Sans">420</text><path d="M1551.5,14V16" stroke="#8c8c8c" stroke-width="1"/></svg>
<div style="left:39px;top:136px;width:1515px;height:34.5px;background:#595959;"></div>
<div style="left:0px;top:744.5px;width:16px;height:278px;background:#1f1f1f;"></div>
<svg style="left:0;top:0;clip-path:inset(745px 1904px 58px 0)" width="1920" height="1080"><path d="M11.5,747.5H16" stroke="#8c8c8c" stroke-width="1"/><path d="M14,750.5H16" stroke="#8c8c8c" stroke-width="1"/><path d="M14,753.5H16" stroke="#8c8c8c" stroke-width="1"/><path d="M14,755.5H16" stroke="#8c8c8c" stroke-width="1"/><path d="M14,758.5H16" stroke="#8c8c8c" stroke-width="1"/><path d="M0,761.5H16" stroke="#9a9a9a" stroke-width="1"/><text x="2.5" y="772.0" font-size="10" fill="#fff" font-family="Liberation Sans">1</text><text x="2.5" y="781.0" font-size="10" fill="#fff" font-family="Liberation Sans">8</text><text x="2.5" y="790.0" font-size="10" fill="#fff" font-family="Liberation Sans">0</text><path d="M14,764.5H16" stroke="#8c8c8c" stroke-width="1"/><path d="M14,767.5H16" stroke="#8c8c8c" stroke-width="1"/><path d="M14,770.5H16" stroke="#8c8c8c" stroke-width="1"/><path d="M14,772.5H16" stroke="#8c8c8c" stroke-width="1"/><path d="M11.5,775.5H16" stroke="#8c8c8c" stroke-width="1"/><path d="M14,778.5H16" stroke="#8c8c8c" stroke-width="1"/><path d="M14,781.5H16" stroke="#8c8c8c" stroke-width="1"/><path d="M14,784.5H16" stroke="#8c8c8c" stroke-width="1"/><path d="M14,787.5H16" stroke="#8c8c8c" stroke-width="1"/><path d="M0,789.5H16" stroke="#9a9a9a" stroke-width="1"/><text x="2.5" y="800.0" font-size="10" fill="#fff" font-family="Liberation Sans">1</text><text x="2.5" y="809.0" font-size="10" fill="#fff" font-family="Liberation Sans">9</text><text x="2.5" y="818.0" font-size="10" fill="#fff" font-family="Liberation Sans">0</text><path d="M14,792.5H16" stroke="#8c8c8c" stroke-width="1"/><path d="M14,795.5H16" stroke="#8c8c8c" stroke-width="1"/><path d="M14,798.5H16" stroke="#8c8c8c" stroke-width="1"/><path d="M14,801.5H16" stroke="#8c8c8c" stroke-width="1"/><path d="M11.5,804.5H16" stroke="#8c8c8c" stroke-width="1"/><path d="M14,806.5H16" stroke="#8c8c8c" stroke-width="1"/><path d="M14,809.5H16" stroke="#8c8c8c" stroke-width="1"/><path d="M14,812.5H16" stroke="#8c8c8c" stroke-width="1"/><path d="M14,815.5H16" stroke="#8c8c8c" stroke-width="1"/><path d="M0,818.5H16" stroke="#9a9a9a" stroke-width="1"/><text x="2.5" y="829.0" font-size="10" fill="#fff" font-family="Liberation Sans">2</text><text x="2.5" y="838.0" font-size="10" fill="#fff" font-family="Liberation Sans">0</text><text x="2.5" y="847.0" font-size="10" fill="#fff" font-family="Liberation Sans">0</text><path d="M14,821.5H16" stroke="#8c8c8c" stroke-width="1"/><path d="M14,823.5H16" stroke="#8c8c8c" stroke-width="1"/><path d="M14,826.5H16" stroke="#8c8c8c" stroke-width="1"/><path d="M14,829.5H16" stroke="#8c8c8c" stroke-width="1"/><path d="M11.5,832.5H16" stroke="#8c8c8c" stroke-width="1"/><path d="M14,835.5H16" stroke="#8c8c8c" stroke-width="1"/><path d="M14,838.5H16" stroke="#8c8c8c" stroke-width="1"/><path d="M14,840.5H16" stroke="#8c8c8c" stroke-width="1"/><path d="M14,843.5H16" stroke="#8c8c8c" stroke-width="1"/><path d="M0,846.5H16" stroke="#9a9a9a" stroke-width="1"/><text x="2.5" y="857.0" font-size="10" fill="#fff" font-family="Liberation Sans">2</text><text x="2.5" y="866.0" font-size="10" fill="#fff" font-family="Liberation Sans">1</text><text x="2.5" y="875.0" font-size="10" fill="#fff" font-family="Liberation Sans">0</text><path d="M14,849.5H16" stroke="#8c8c8c" stroke-width="1"/><path d="M14,852.5H16" stroke="#8c8c8c" stroke-width="1"/><path d="M14,855.5H16" stroke="#8c8c8c" stroke-width="1"/><path d="M14,857.5H16" stroke="#8c8c8c" stroke-width="1"/><path d="M11.5,860.5H16" stroke="#8c8c8c" stroke-width="1"/><path d="M14,863.5H16" stroke="#8c8c8c" stroke-width="1"/><path d="M14,866.5H16" stroke="#8c8c8c" stroke-width="1"/><path d="M14,869.5H16" stroke="#8c8c8c" stroke-width="1"/><path d="M14,872.5H16" stroke="#8c8c8c" stroke-width="1"/><path d="M0,874.5H16" stroke="#9a9a9a" stroke-width="1"/><text x="2.5" y="885.0" font-size="10" fill="#fff" font-family="Liberation Sans">2</text><text x="2.5" y="894.0" font-size="10" fill="#fff" font-family="Liberation Sans">2</text><text x="2.5" y="903.0" font-size="10" fill="#fff" font-family="Liberation Sans">0</text><path d="M14,877.5H16" stroke="#8c8c8c" stroke-width="1"/><path d="M14,880.5H16" stroke="#8c8c8c" stroke-width="1"/><path d="M14,883.5H16" stroke="#8c8c8c" stroke-width="1"/><path d="M14,886.5H16" stroke="#8c8c8c" stroke-width="1"/><path d="M11.5,889.5H16" stroke="#8c8c8c" stroke-width="1"/><path d="M14,891.5H16" stroke="#8c8c8c" stroke-width="1"/><path d="M14,894.5H16" stroke="#8c8c8c" stroke-width="1"/><path d="M14,897.5H16" stroke="#8c8c8c" stroke-width="1"/><path d="M14,900.5H16" stroke="#8c8c8c" stroke-width="1"/><path d="M0,903.5H16" stroke="#9a9a9a" stroke-width="1"/><text x="2.5" y="914.0" font-size="10" fill="#fff" font-family="Liberation Sans">2</text><text x="2.5" y="923.0" font-size="10" fill="#fff" font-family="Liberation Sans">3</text><text x="2.5" y="932.0" font-size="10" fill="#fff" font-family="Liberation Sans">0</text><path d="M14,906.5H16" stroke="#8c8c8c" stroke-width="1"/><path d="M14,908.5H16" stroke="#8c8c8c" stroke-width="1"/><path d="M14,911.5H16" stroke="#8c8c8c" stroke-width="1"/><path d="M14,914.5H16" stroke="#8c8c8c" stroke-width="1"/><path d="M11.5,917.5H16" stroke="#8c8c8c" stroke-width="1"/><path d="M14,920.5H16" stroke="#8c8c8c" stroke-width="1"/><path d="M14,923.5H16" stroke="#8c8c8c" stroke-width="1"/><path d="M14,925.5H16" stroke="#8c8c8c" stroke-width="1"/><path d="M14,928.5H16" stroke="#8c8c8c" stroke-width="1"/><path d="M0,931.5H16" stroke="#9a9a9a" stroke-width="1"/><text x="2.5" y="942.0" font-size="10" fill="#fff" font-family="Liberation Sans">2</text><text x="2.5" y="951.0" font-size="10" fill="#fff" font-family="Liberation Sans">4</text><text x="2.5" y="960.0" font-size="10" fill="#fff" font-family="Liberation Sans">0</text><path d="M14,934.5H16" stroke="#8c8c8c" stroke-width="1"/><path d="M14,937.5H16" stroke="#8c8c8c" stroke-width="1"/><path d="M14,940.5H16" stroke="#8c8c8c" stroke-width="1"/><path d="M14,942.5H16" stroke="#8c8c8c" stroke-width="1"/><path d="M11.5,945.5H16" stroke="#8c8c8c" stroke-width="1"/><path d="M14,948.5H16" stroke="#8c8c8c" stroke-width="1"/><path d="M14,951.5H16" stroke="#8c8c8c" stroke-width="1"/><path d="M14,954.5H16" stroke="#8c8c8c" stroke-width="1"/><path d="M14,957.5H16" stroke="#8c8c8c" stroke-width="1"/><path d="M0,959.5H16" stroke="#9a9a9a" stroke-width="1"/><text x="2.5" y="970.0" font-size="10" fill="#fff" font-family="Liberation Sans">2</text><text x="2.5" y="979.0" font-size="10" fill="#fff" font-family="Liberation Sans">5</text><text x="2.5" y="988.0" font-size="10" fill="#fff" font-family="Liberation Sans">0</text><path d="M14,962.5H16" stroke="#8c8c8c" stroke-width="1"/><path d="M14,965.5H16" stroke="#8c8c8c" stroke-width="1"/><path d="M14,968.5H16" stroke="#8c8c8c" stroke-width="1"/><path d="M14,971.5H16" stroke="#8c8c8c" stroke-width="1"/><path d="M11.5,974.5H16" stroke="#8c8c8c" stroke-width="1"/><path d="M14,976.5H16" stroke="#8c8c8c" stroke-width="1"/><path d="M14,979.5H16" stroke="#8c8c8c" stroke-width="1"/><path d="M14,982.5H16" stroke="#8c8c8c" stroke-width="1"/><path d="M14,985.5H16" stroke="#8c8c8c" stroke-width="1"/><path d="M0,988.5H16" stroke="#9a9a9a" stroke-width="1"/><text x="2.5" y="999.0" font-size="10" fill="#fff" font-family="Liberation Sans">2</text><text x="2.5" y="1008.0" font-size="10" fill="#fff" font-family="Liberation Sans">6</text><text x="2.5" y="1017.0" font-size="10" fill="#fff" font-family="Liberation Sans">0</text><path d="M14,991.5H16" stroke="#8c8c8c" stroke-width="1"/><path d="M14,993.5H16" stroke="#8c8c8c" stroke-width="1"/><path d="M14,996.5H16" stroke="#8c8c8c" stroke-width="1"/><path d="M14,999.5H16" stroke="#8c8c8c" stroke-width="1"/><path d="M11.5,1002.5H16" stroke="#8c8c8c" stroke-width="1"/><path d="M14,1005.5H16" stroke="#8c8c8c" stroke-width="1"/><path d="M14,1008.5H16" stroke="#8c8c8c" stroke-width="1"/><path d="M14,1010.5H16" stroke="#8c8c8c" stroke-width="1"/><path d="M14,1013.5H16" stroke="#8c8c8c" stroke-width="1"/><path d="M0,1016.5H16" stroke="#9a9a9a" stroke-width="1"/><text x="2.5" y="1027.0" font-size="10" fill="#fff" font-family="Liberation Sans">2</text><text x="2.5" y="1036.0" font-size="10" fill="#fff" font-family="Liberation Sans">7</text><text x="2.5" y="1045.0" font-size="10" fill="#fff" font-family="Liberation Sans">0</text><path d="M14,1019.5H16" stroke="#8c8c8c" stroke-width="1"/><text x="2.5" y="753.0" font-size="10" fill="#fff" font-family="Liberation Sans">7</text><text x="2.5" y="762.0" font-size="10" fill="#fff" font-family="Liberation Sans">0</text></svg>
<div style="left:0px;top:90.5px;width:41px;height:654px;background:rgba(0,0,0,0.0);box-shadow:1px 1px 2px rgba(0,0,0,0.3);"></div>
<div style="left:0px;top:90.5px;width:40px;height:654px;background:#535353;border-right:1px solid #3c3c3c;border-bottom:1px solid #3c3c3c;box-sizing:border-box;"></div>
<div style="left:0px;top:90.5px;width:39px;height:12px;background:#474747;border-radius:0 3px 0 0;"></div>
<svg style="left:9px;top:94px;" width="8" height="6" viewBox="0 0 8 6"><path d="M0.5,0.5 L3,3 L0.5,5.5Z M4.5,0.5 L7,3 L4.5,5.5Z" fill="#d8d8d8"/></svg>
<svg style="left:28px;top:94px;" width="6" height="6" viewBox="0 0 6 6"><path d="M0.8,0.8 L5.2,5.2 M5.2,0.8 L0.8,5.2" stroke="#d8d8d8" stroke-width="1.7"/></svg>
<div style="left:10px;top:106px;width:1px;height:4px;background:#3a3a3a;"></div>
<div style="left:12px;top:106px;width:1px;height:4px;background:#3a3a3a;"></div>
<div style="left:14px;top:106px;width:1px;height:4px;background:#3a3a3a;"></div>
<div style="left:16px;top:106px;width:1px;height:4px;background:#3a3a3a;"></div>
<div style="left:18px;top:106px;width:1px;height:4px;background:#3a3a3a;"></div>
<div style="left:20px;top:106px;width:1px;height:4px;background:#3a3a3a;"></div>
<div style="left:22px;top:106px;width:1px;height:4px;background:#3a3a3a;"></div>
<div style="left:24px;top:106px;width:1px;height:4px;background:#3a3a3a;"></div>
<div style="left:26px;top:106px;width:1px;height:4px;background:#3a3a3a;"></div>
<div style="left:28px;top:106px;width:1px;height:4px;background:#3a3a3a;"></div>
<div style="left:6px;top:118px;width:28px;height:22px;background:#383838;border-radius:3px;"></div>
<svg style="left:14px;top:121px;" width="14" height="18" viewBox="0 0 14 18"><path d="M1.5,1.2 L12.6,9.3 L6.2,10.4 L1.5,16Z" fill="none" stroke="#e0e0e0" stroke-width="1.3" stroke-linejoin="miter"/></svg>
<svg style="left:14px;top:145px;" width="14" height="18" viewBox="0 0 14 18"><path d="M1,0.8 L13,9.6 L6.4,10.8 L1,17Z" fill="#d4d4d4"/></svg>
<svg style="left:13px;top:169px;" width="17" height="18" viewBox="0 0 17 18"><path d="M1.5,1 H8.5 L12.5,5 V8 M12.5,5 H8.5 V1 M1.5,1 V14 H8" fill="none" stroke="#d0d0d0" stroke-width="1.2"/><path d="M10.2,8.5 L16.2,13 L10.2,16.5Z" fill="#d0d0d0"/></svg>
<svg style="left:11px;top:194px;" width="19" height="15" viewBox="0 0 19 15"><path d="M1,0.5V14.5 M18,0.5V14.5" stroke="#d0d0d0" stroke-width="1.6"/><path d="M4,7.5H15" stroke="#d0d0d0" stroke-width="1.3"/><path d="M6.5,4.5 L3.2,7.5 L6.5,10.5 M12.5,4.5 L15.8,7.5 L12.5,10.5" fill="none" stroke="#d0d0d0" stroke-width="1.3"/></svg>
<svg style="left:12px;top:217px;" width="18" height="17" viewBox="0 0 18 17"><path d="M1.8,7 V15.5 H14.2 V7" fill="none" stroke="#d0d0d0" stroke-width="1.6"/><path d="M4.8,10 h1.8 M7.3,10 h1.8 M9.8,10 h1.8 M4.8,12.8 h1.8 M7.3,12.8 h1.8 M9.8,12.8 h1.8" stroke="#d0d0d0" stroke-width="1.6"/><path d="M5,1 L9.5,5.5" stroke="#d0d0d0" stroke-width="1.4"/><path d="M10.5,2.5 V6.8 H6.2Z" fill="#d0d0d0"/></svg>
<svg style="left:30.3px;top:233.6px;" width="3.2" height="3.2" viewBox="0 0 3.2 3.2"><path d="M3.2,0 V3.2 H0Z" fill="#d0d0d0"/></svg>
<div style="left:2px;top:238px;width:36px;height:1px;background:#474747;"></div>
<svg style="left:12px;top:243px;" width="16" height="17" viewBox="0 0 16 17"><path d="M1,1.5 H15 V4.5 H13.6 V3.4 H9.2 V14 H11 V15.5 H5 V14 H6.8 V3.4 H2.4 V4.5 H1Z" fill="#d4d4d4"/></svg>
<svg style="left:30.3px;top:258.6px;" width="3.2" height="3.2" viewBox="0 0 3.2 3.2"><path d="M3.2,0 V3.2 H0Z" fill="#d0d0d0"/></svg>
<svg style="left:12px;top:267px;" width="17" height="17" viewBox="0 0 17 17"><path d="M1,15.5 L15.5,1.5" stroke="#d0d0d0" stroke-width="1.4"/></svg>
<svg style="left:11.5px;top:291px;" width="17" height="18" viewBox="0 0 17 18"><path d="M0.6,17 C1.6,12 2.6,8.4 4.6,6.6 C6.2,5.2 8,4.4 9.6,3.8 L13.8,8 C13.2,9.6 12.4,11.4 11,13 C9.2,15 5.6,16 0.6,17Z" fill="#d2d2d2"/><path d="M1.4,16.2 L7.6,10" stroke="#535353" stroke-width="1.1"/><circle cx="8.2" cy="9.4" r="1.5" fill="#535353"/><path d="M10.6,2.9 L12.9,0.6 L16.9,4.6 L14.6,6.9Z" fill="#d2d2d2"/></svg>
<svg style="left:30.3px;top:306.6px;" width="3.2" height="3.2" viewBox="0 0 3.2 3.2"><path d="M3.2,0 V3.2 H0Z" fill="#d0d0d0"/></svg>
<svg style="left:11.5px;top:315.5px;" width="17" height="17" viewBox="0 0 17 17"><path d="M10.4,3.2 L13.8,6.6 L5.6,14.8 L0.6,16.4 L2.2,11.4Z" fill="#d2d2d2"/><path d="M1.4,14 L3,15.6" stroke="#535353" stroke-width="1"/><path d="M11.4,2.2 L13.2,0.4 L16.6,3.8 L14.8,5.6Z" fill="#d2d2d2"/></svg>
<svg style="left:30.3px;top:330.6px;" width="3.2" height="3.2" viewBox="0 0 3.2 3.2"><path d="M3.2,0 V3.2 H0Z" fill="#d0d0d0"/></svg>
<svg style="left:12px;top:340px;" width="17" height="15" viewBox="0 0 17 15"><rect x="0.8" y="0.8" width="15.4" height="13.4" fill="none" stroke="#d4d4d4" stroke-width="1.4"/><path d="M1,1 L16,14 M16,1 L1,14" stroke="#d4d4d4" stroke-width="1.2"/></svg>
<svg style="left:30.3px;top:354.6px;" width="3.2" height="3.2" viewBox="0 0 3.2 3.2"><path d="M3.2,0 V3.2 H0Z" fill="#d0d0d0"/></svg>
<svg style="left:12px;top:365px;" width="17" height="15" viewBox="0 0 17 15"><rect x="0.8" y="0.8" width="15.4" height="12.4" fill="#6e6e6e" stroke="#c8c8c8" stroke-width="1.2"/></svg>
<svg style="left:30.3px;top:378.6px;" width="3.2" height="3.2" viewBox="0 0 3.2 3.2"><path d="M3.2,0 V3.2 H0Z" fill="#d0d0d0"/></svg>
<div style="left:2px;top:385px;width:36px;height:1px;background:#474747;"></div>
<svg style="left:12px;top:390.5px;" width="18" height="17" viewBox="0 0 18 17"><circle cx="14.2" cy="3.6" r="2.4" fill="none" stroke="#d2d2d2" stroke-width="1.6"/><circle cx="14.2" cy="13.2" r="2.4" fill="none" stroke="#d2d2d2" stroke-width="1.6"/><path d="M12.4,5 L1,13.4 M12.4,11.8 L1,3.6" stroke="#d2d2d2" stroke-width="2.1" stroke-linecap="round"/></svg>
<svg style="left:10.5px;top:414px;" width="21" height="17" viewBox="0 0 21 17"><rect x="7" y="3" width="11.5" height="10.5" fill="none" stroke="#d0d0d0" stroke-width="1.2" stroke-dasharray="2.4,1.5"/><rect x="5.8" y="1.8" width="2.4" height="2.4" fill="#d0d0d0"/><rect x="17.3" y="1.8" width="2.4" height="2.4" fill="#d0d0d0"/><rect x="17.3" y="12.3" width="2.4" height="2.4" fill="#d0d0d0"/><rect x="11.5" y="12.3" width="2.4" height="2.4" fill="#d0d0d0"/><path d="M0.3,0.3 L9,7.4 L4,8.6 L0.3,14.3Z" fill="#d2d2d2" stroke="#535353" stroke-width="0.6"/></svg>
<svg style="left:30.3px;top:431.6px;" width="3.2" height="3.2" viewBox="0 0 3.2 3.2"><path d="M3.2,0 V3.2 H0Z" fill="#d0d0d0"/></svg>
<svg style="left:12px;top:440px;" width="17" height="15" viewBox="0 0 17 15"><defs><linearGradient id="gs1" x1="0" y1="0" x2="1" y2="0"><stop offset="0" stop-color="#c8c8c8"/><stop offset="1" stop-color="#555"/></linearGradient></defs><rect x="0.6" y="0.6" width="15.8" height="13.4" fill="url(#gs1)" stroke="#d0d0d0" stroke-width="1.1"/></svg>
<svg style="left:12px;top:464px;" width="17" height="15" viewBox="0 0 17 15"><defs><linearGradient id="gs2" x1="0" y1="0" x2="0" y2="1"><stop offset="0" stop-color="#7a7a7a"/><stop offset="0.55" stop-color="#9a9a9a"/><stop offset="1" stop-color="#c8c8c8"/></linearGradient></defs><rect x="0.6" y="0.6" width="15.8" height="13.4" fill="url(#gs2)" stroke="#d0d0d0" stroke-width="1.1"/><path d="M1.2,1.2h2.4v2.4h-2.4z M6,1.2h2.4v2.4h-2.4z M10.8,1.2h2.4v2.4h-2.4z M3.6,3.6h2.4v2.4h-2.4z M8.4,3.6h2.4v2.4h-2.4z M13.2,3.6h2.4v2.4h-2.4z M1.2,6h2.4v2.4h-2.4z M6,6h2.4v2.4h-2.4z M10.8,6h2.4v2.4h-2.4z" fill="#5c5c5c" opacity="0.8"/></svg>
<div style="left:2px;top:484px;width:36px;height:1px;background:#474747;"></div>
<svg style="left:13px;top:491px;" width="16" height="15" viewBox="0 0 16 15"><path d="M0.5,0.5 H15 V9.5 L10,14.5 H0.5Z" fill="#d0d0d0"/><path d="M3,4H12 M3,7H12 M3,10H8" stroke="#535353" stroke-width="1.2"/><path d="M10,14.5 V9.5 H15Z" fill="#8c8c8c"/></svg>
<svg style="left:11px;top:513px;" width="20" height="19" viewBox="0 0 20 19"><path d="M13.5,1 a2.6,2.6 0 0 1 3.6,3.6 L14.6,7.4 L10.8,3.6Z" fill="#d0d0d0"/><path d="M11.6,5.2 L3.6,13.2 L2,16.8 L5.6,15.2 L13.6,7.2" fill="none" stroke="#d0d0d0" stroke-width="1.5"/><rect x="8.6" y="13.6" width="9" height="3.6" fill="none" stroke="#d0d0d0" stroke-width="1"/><path d="M11.5,13.6v3.6 M14.5,13.6v3.6" stroke="#d0d0d0" stroke-width="1"/></svg>
<svg style="left:30.3px;top:531.6px;" width="3.2" height="3.2" viewBox="0 0 3.2 3.2"><path d="M3.2,0 V3.2 H0Z" fill="#d0d0d0"/></svg>
<svg style="left:12px;top:537px;" width="17" height="19" viewBox="0 0 17 19"><path d="M5,17.5 C3.4,14 1,11.8 0.8,10 C1.4,8.4 3.2,9.2 4.4,11 L4,3.6 C4.2,2 5.9,2 6.2,3.6 L6.8,8 L7,2 C7.3,0.5 9,0.5 9.2,2 L9.4,8 L10.4,2.8 C10.8,1.4 12.4,1.7 12.4,3.2 L12,8.6 L13.6,5.2 C14.2,4 15.8,4.5 15.4,6 C14.6,9.6 14.4,14 12.4,17.5Z" fill="#d2d2d2"/></svg>
<svg style="left:12px;top:562px;" width="18" height="18" viewBox="0 0 18 18"><circle cx="7" cy="7" r="5.2" fill="none" stroke="#d2d2d2" stroke-width="1.7"/><path d="M10.8,10.8 L16.2,16.2" stroke="#d2d2d2" stroke-width="2.2"/></svg>
<div style="left:2px;top:583px;width:36px;height:1px;background:#474747;"></div>
<svg style="left:5px;top:587px;" width="13" height="13" viewBox="0 0 13 13"><rect x="4.6" y="4.6" width="7.4" height="7.4" fill="#535353" stroke="#000" stroke-width="1.6"/><rect x="1" y="1" width="7.4" height="7.4" fill="#fff" stroke="#222" stroke-width="0.8"/><path d="M1.4,8 L8,1.4" stroke="#ff0000" stroke-width="1.2"/></svg>
<svg style="left:24px;top:590px;" width="12" height="12" viewBox="0 0 12 12"><path d="M3.5,0.8 L0.8,3.5 L3.5,6.2 M0.8,3.5 H7 V7 M8.5,5.8 L8.5,11.2 M6,8.6 L8.5,11.2 L11,8.6" fill="none" stroke="#d0d0d0" stroke-width="1.3"/></svg>
<div style="left:14px;top:613px;width:20px;height:20px;background:#ffffff;"></div>
<svg style="left:14px;top:613px;" width="20" height="20" viewBox="0 0 20 20"><rect x="5" y="5" width="10" height="10" fill="#535353"/><path d="M1,19 L19,1" stroke="#ff0000" stroke-width="1.8"/></svg>
<div style="left:6px;top:604.5px;width:19.5px;height:19.5px;background:#cc0a2f;"></div>
<div style="left:6px;top:640px;width:14px;height:14px;background:#3c3c3c;border-radius:2px;"></div>
<svg style="left:8px;top:642px;" width="10" height="10" viewBox="0 0 10 10"><rect x="1" y="1" width="8" height="8" fill="none" stroke="#dcdcdc" stroke-width="1.3"/></svg>
<div style="left:24.5px;top:642px;font-size:11px;color:#d8d8d8;white-space:nowrap;line-height:1;font-family:'Liberation Serif',serif;font-weight:bold;">T</div>
<div style="left:6px;top:660px;width:28px;height:22px;background:#383838;border-radius:3px;"></div>
<div style="left:12px;top:664.5px;width:15.5px;height:13.5px;background:#cc0a2f;border:1px solid #e8e8e8;box-sizing:border-box;"></div>
<svg style="left:30.3px;top:680.6px;" width="3.2" height="3.2" viewBox="0 0 3.2 3.2"><path d="M3.2,0 V3.2 H0Z" fill="#d0d0d0"/></svg>
<svg style="left:13px;top:695px;" width="16" height="12" viewBox="0 0 16 12"><rect x="4" y="3" width="10.5" height="7.5" fill="#c8c8c8"/><path d="M0.5,2H3 M0.5,5H3 M0.5,8H3 M0.5,11H3 M5,0.8v2 M8,0.8v2 M11,0.8v2 M14,0.8v2" stroke="#c8c8c8" stroke-width="1"/></svg>
<svg style="left:30.3px;top:709.6px;" width="3.2" height="3.2" viewBox="0 0 3.2 3.2"><path d="M3.2,0 V3.2 H0Z" fill="#d0d0d0"/></svg>
<div style="left:2px;top:713px;width:36px;height:1px;background:#474747;"></div>
<div style="left:6px;top:716px;width:28px;height:22px;background:#383838;border-radius:3px;"></div>
<svg style="left:15px;top:721.5px;" width="11" height="11" viewBox="0 0 11 11"><rect x="0.6" y="0.6" width="9.8" height="9.8" fill="none" stroke="#d0d0d0" stroke-width="1.1"/><rect x="2.6" y="2.6" width="4" height="3.6" fill="none" stroke="#d0d0d0" stroke-width="1"/><rect x="4.8" y="4.6" width="4" height="3.6" fill="#383838" stroke="#d0d0d0" stroke-width="1"/></svg>
<svg style="left:30.3px;top:737.6px;" width="3.2" height="3.2" viewBox="0 0 3.2 3.2"><path d="M3.2,0 V3.2 H0Z" fill="#d0d0d0"/></svg>
<div style="left:51px;top:177px;width:168px;height:55px;background:#535353;border-radius:4px 4px 0 0;box-shadow:0 0 4px rgba(0,0,0,0.3);border:1px solid #3c3c3c;box-sizing:border-box;"></div>
<div style="left:52px;top:178px;width:166px;height:12px;background:#464646;border-radius:3px 3px 0 0;"></div>
<svg style="left:187px;top:182px;" width="8" height="6" viewBox="0 0 8 6"><path d="M0.5,0.5 L3,3 L0.5,5.5Z M4.5,0.5 L7,3 L4.5,5.5Z" fill="#d8d8d8"/></svg>
<svg style="left:207px;top:182px;" width="6" height="6" viewBox="0 0 6 6"><path d="M0.8,0.8 L5.2,5.2 M5.2,0.8 L0.8,5.2" stroke="#d8d8d8" stroke-width="1.7"/></svg>
<div style="left:125px;top:194px;width:1px;height:4px;background:#3a3a3a;"></div>
<div style="left:127px;top:194px;width:1px;height:4px;background:#3a3a3a;"></div>
<div style="left:129px;top:194px;width:1px;height:4px;background:#3a3a3a;"></div>
<div style="left:131px;top:194px;width:1px;height:4px;background:#3a3a3a;"></div>
<div style="left:133px;top:194px;width:1px;height:4px;background:#3a3a3a;"></div>
<div style="left:135px;top:194px;width:1px;height:4px;background:#3a3a3a;"></div>
<div style="left:137px;top:194px;width:1px;height:4px;background:#3a3a3a;"></div>
<div style="left:139px;top:194px;width:1px;height:4px;background:#3a3a3a;"></div>
<div style="left:141px;top:194px;width:1px;height:4px;background:#3a3a3a;"></div>
<div style="left:143px;top:194px;width:1px;height:4px;background:#3a3a3a;"></div>
<svg style="left:61.5px;top:204px;" width="20" height="20" viewBox="0 0 20 20"><circle cx="6.40" cy="3.76" r="2.6" fill="#c8c8c8"/><circle cx="13.60" cy="3.76" r="2.6" fill="#6c6c6c"/><circle cx="17.20" cy="10.00" r="2.6" fill="#7a7a7a"/><circle cx="13.60" cy="16.24" r="2.6" fill="#8c8c8c"/><circle cx="6.40" cy="16.24" r="2.6" fill="#989898"/><circle cx="2.80" cy="10.00" r="2.6" fill="#a8a8a8"/></svg>
<div style="left:89px;top:209.5px;font-size:11px;color:#f0f0f0;white-space:nowrap;line-height:1;font-weight:bold;">Hintergrundaufgaben</div>
<div style="left:1552px;top:100px;width:329px;height:871px;background:rgba(0,0,0,0);box-shadow:-1px 1px 2px rgba(0,0,0,0.22);"></div>
<div style="left:1554px;top:100px;width:327px;height:869px;background:#535353;"></div>
<div style="left:1554px;top:100px;width:327px;height:4px;background:#363636;"></div>
<div style="left:1554px;top:104px;width:327px;height:26.5px;background:#424242;"></div>
<div style="left:1555px;top:104px;width:62px;height:27px;background:#535353;"></div>
<svg style="left:1562px;top:113px;" width="7" height="10" viewBox="0 0 7 10"><path d="M0.8,3.8 L3.4,1 L6,3.8 M0.8,6.2 L3.4,9 L6,6.2" fill="none" stroke="#b4b4b4" stroke-width="1.3"/></svg>
<div style="left:1573px;top:112.5px;font-size:11.5px;color:#f2f2f2;white-space:nowrap;line-height:1;font-weight:bold;letter-spacing:-0.45px;">Seiten</div>
<svg style="left:1840px;top:114px;" width="9" height="7" viewBox="0 0 9 7"><path d="M0.8,0.8 L3.4,3.5 L0.8,6.2 M5,0.8 L7.6,3.5 L5,6.2" fill="none" stroke="#e0e0e0" stroke-width="1.3"/></svg>
<div style="left:1856px;top:111px;width:1px;height:12px;background:#8a8a8a;"></div>
<svg style="left:1864px;top:114px;" width="10" height="8" viewBox="0 0 10 8"><path d="M0,0.5H10 M0,2.8H10 M0,5.1H10 M0,7.4H10" stroke="#d4d4d4" stroke-width="1"/></svg>
<div style="left:1558px;top:141.0px;font-size:10px;color:#ececec;white-space:nowrap;line-height:1;">[Ohne]</div>
<div style="left:1841px;top:135.5px;width:17.5px;height:23px;background:#fff;border:1px solid #a8a8a8;box-sizing:border-box;"></div>
<div style="left:1558px;top:170.0px;font-size:10px;color:#ececec;white-space:nowrap;line-height:1;">A-Dritttel</div>
<div style="left:1824px;top:164.0px;width:35px;height:24px;background:#fff;border:1px solid #a8a8a8;box-sizing:border-box;"></div>
<div style="left:1841px;top:164.0px;width:1px;height:24px;background:#8a8a8a;"></div>
<div style="left:1856px;top:166.0px;width:1px;height:4px;background:#ccc;"></div>
<div style="left:1558px;top:199.0px;font-size:10px;color:#ececec;white-space:nowrap;line-height:1;">B-Viertel</div>
<div style="left:1824px;top:193.0px;width:35px;height:24px;background:#fff;border:1px solid #a8a8a8;box-sizing:border-box;"></div>
<div style="left:1841px;top:193.0px;width:1px;height:24px;background:#8a8a8a;"></div>
<div style="left:1856px;top:195.0px;width:1px;height:4px;background:#ccc;"></div>
<div style="left:1558px;top:228.0px;font-size:10px;color:#ececec;white-space:nowrap;line-height:1;">C-Raster</div>
<div style="left:1824px;top:222.0px;width:35px;height:24px;background:#fff;border:1px solid #a8a8a8;box-sizing:border-box;"></div>
<div style="left:1841px;top:222.0px;width:1px;height:24px;background:#8a8a8a;"></div>
<div style="left:1856px;top:224.0px;width:1px;height:4px;background:#ccc;"></div>
<div style="left:1558px;top:257.0px;font-size:10px;color:#ececec;white-space:nowrap;line-height:1;">D-Künstlerseiten</div>
<div style="left:1824px;top:251.0px;width:35px;height:24px;background:#fff;border:1px solid #a8a8a8;box-sizing:border-box;"></div>
<div style="left:1841px;top:251.0px;width:1px;height:24px;background:#8a8a8a;"></div>
<div style="left:1825px;top:252.0px;font-size:8px;color:#111;white-space:nowrap;line-height:1;">C</div>
<div style="left:1847px;top:252.0px;font-size:8px;color:#111;white-space:nowrap;line-height:1;">C</div>
<div style="left:1826px;top:260.5px;width:3px;height:1.5px;background:#d01030;"></div>
<div style="left:1843px;top:260.5px;width:4px;height:1.5px;background:#d01030;"></div>
<div style="left:1833px;top:259.5px;width:3px;height:3px;background:#222;"></div>
<div style="left:1834px;top:256.5px;width:1px;height:1px;background:#2d8ceb;"></div>
<div style="left:1836px;top:255.0px;width:1px;height:1px;background:#2d8ceb;"></div>
<div style="left:1558px;top:286.0px;font-size:10px;color:#ececec;white-space:nowrap;line-height:1;">3u4-Musterseite</div>
<div style="left:1824px;top:280.0px;width:35px;height:24px;background:#fff;border:1px solid #a8a8a8;box-sizing:border-box;"></div>
<div style="left:1841px;top:280.0px;width:1px;height:24px;background:#8a8a8a;"></div>
<div style="left:1856px;top:282.0px;width:1px;height:4px;background:#ccc;"></div>
<svg style="left:1870px;top:137px;" width="8" height="5" viewBox="0 0 8 5"><path d="M0.5,4.5 L4,1 L7.5,4.5" fill="none" stroke="#5e5e5e" stroke-width="1"/></svg>
<svg style="left:1870px;top:408px;" width="8" height="5" viewBox="0 0 8 5"><path d="M0.5,0.5 L4,4 L7.5,0.5" fill="none" stroke="#5e5e5e" stroke-width="1"/></svg>
<div style="left:1554px;top:417px;width:327px;height:2px;background:#5e5e5e;"></div>
<div style="left:1554px;top:419px;width:327px;height:1px;background:#4a4a4a;"></div>
<div style="left:1867px;top:420px;width:13px;height:517px;background:#4c4c4c;"></div>
<svg style="left:1870px;top:425px;" width="8" height="5" viewBox="0 0 8 5"><path d="M0.5,4.5 L4,1 L7.5,4.5" fill="none" stroke="#b8b8b8" stroke-width="1"/></svg>
<svg style="left:1870px;top:928px;" width="8" height="5" viewBox="0 0 8 5"><path d="M0.5,0.5 L4,4 L7.5,0.5" fill="none" stroke="#b8b8b8" stroke-width="1"/></svg>
<div style="left:1868.5px;top:572px;width:10px;height:46px;background:#6c6c6c;border-radius:5px;"></div>
<div style="left:1711px;top:427px;width:1px;height:48px;background:#9a9a9a;"></div>
<div style="left:1686px;top:433px;width:50.5px;height:35.5px;background:#fff;border:1px solid #a0a0a0;box-sizing:border-box;"></div>
<div style="left:1711px;top:433px;width:1px;height:35.5px;background:#8e8e8e;"></div>
<div style="left:1687px;top:434px;font-size:10.5px;color:#000;white-space:nowrap;line-height:1;letter-spacing:-0.3px;">3u4</div>
<div style="left:1715px;top:434px;font-size:10.5px;color:#000;white-space:nowrap;line-height:1;letter-spacing:-0.3px;">3u4</div>
<div style="left:1690px;top:444px;width:17px;height:6px;background:#4a5a7a;"></div>
<div style="left:1690px;top:444px;width:8px;height:6px;background:#7a9ad0;"></div>
<div style="left:1690px;top:459px;width:7px;height:5px;background:#666;"></div>
<div style="left:1699px;top:459px;width:8px;height:4px;background:#999;"></div>
<div style="left:1719px;top:451px;width:13px;height:14px;background:#3a66b0;"></div>
<div style="left:1722px;top:454px;width:6px;height:6px;background:#9ab8e8;"></div>
<div style="left:1684px;top:476.6px;font-size:9.6px;color:#f0f0f0;white-space:nowrap;line-height:1;width:50px;text-align:center;">48-49</div>
<div style="left:1711px;top:491px;width:1px;height:48px;background:#9a9a9a;"></div>
<div style="left:1686px;top:497px;width:50.5px;height:35.5px;background:#fff;border:1px solid #a0a0a0;box-sizing:border-box;"></div>
<div style="left:1711px;top:497px;width:1px;height:35.5px;background:#8e8e8e;"></div>
<div style="left:1687px;top:498px;font-size:10.5px;color:#000;white-space:nowrap;line-height:1;letter-spacing:-0.3px;">3u4</div>
<div style="left:1715px;top:498px;font-size:10.5px;color:#000;white-space:nowrap;line-height:1;letter-spacing:-0.3px;">3u4</div>
<div style="left:1689px;top:508px;width:17.5px;height:22px;background:#3a5a96;"></div>
<div style="left:1697px;top:508px;width:1px;height:22px;background:#e8e8e8;"></div>
<div style="left:1689px;top:516px;width:17.5px;height:1px;background:#e8e8e8;"></div>
<div style="left:1698px;top:517px;width:8px;height:13px;background:#222c44;"></div>
<div style="left:1715px;top:523px;width:7px;height:6px;background:#666;"></div>
<div style="left:1723px;top:523px;width:9px;height:5px;background:#999;"></div>
<div style="left:1684px;top:540.6px;font-size:9.6px;color:#f0f0f0;white-space:nowrap;line-height:1;width:50px;text-align:center;">50-51</div>
<div style="left:1711px;top:555px;width:1px;height:48px;background:#9a9a9a;"></div>
<div style="left:1686px;top:561px;width:50.5px;height:35.5px;background:#fff;border:1px solid #a0a0a0;box-sizing:border-box;"></div>
<div style="left:1711px;top:561px;width:1px;height:35.5px;background:#8e8e8e;"></div>
<div style="left:1687px;top:562px;font-size:10.5px;color:#000;white-space:nowrap;line-height:1;letter-spacing:-0.3px;">3u4</div>
<div style="left:1715px;top:562px;font-size:10.5px;color:#000;white-space:nowrap;line-height:1;letter-spacing:-0.3px;">3u4</div>
<div style="left:1715px;top:573px;width:17px;height:19px;background:#2a3a5a;"></div>
<div style="left:1715px;top:573px;width:17px;height:8px;background:#5a82c0;"></div>
<div style="left:1715px;top:588px;width:17px;height:4px;background:#5a3a20;"></div>
<div style="left:1684px;top:604.6px;font-size:9.6px;color:#f0f0f0;white-space:nowrap;line-height:1;width:50px;text-align:center;">52-53</div>
<div style="left:1711px;top:619px;width:1px;height:48px;background:#9a9a9a;"></div>
<div style="left:1686px;top:625px;width:50.5px;height:35.5px;background:#fff;border:1px solid #a0a0a0;box-sizing:border-box;"></div>
<div style="left:1711px;top:625px;width:1px;height:35.5px;background:#8e8e8e;"></div>
<div style="left:1687px;top:626px;font-size:10.5px;color:#000;white-space:nowrap;line-height:1;">D</div>
<div style="left:1726.5px;top:626px;font-size:10.5px;color:#000;white-space:nowrap;line-height:1;">D</div>
<div style="left:1690px;top:635.5px;width:2px;height:1.5px;background:#d01030;"></div>
<div style="left:1692px;top:635.5px;width:3.5px;height:9px;background:#d01030;"></div>
<div style="left:1702px;top:636px;width:4px;height:4px;background:#555;"></div>
<div style="left:1702px;top:642px;width:5px;height:4px;background:#888;"></div>
<div style="left:1713.5px;top:641px;width:4px;height:2px;background:#d01030;"></div>
<div style="left:1715px;top:643px;width:7px;height:12px;background:#666;"></div>
<div style="left:1723px;top:642px;width:8.5px;height:11px;background:#999;"></div>
<div style="left:1684px;top:668.6px;font-size:9.6px;color:#f0f0f0;white-space:nowrap;line-height:1;width:50px;text-align:center;">54-55</div>
<div style="left:1711px;top:683px;width:1px;height:48px;background:#9a9a9a;"></div>
<div style="left:1686px;top:689px;width:50.5px;height:35.5px;background:#fff;border:1px solid #a0a0a0;box-sizing:border-box;"></div>
<div style="left:1711px;top:689px;width:1px;height:35.5px;background:#8e8e8e;"></div>
<div style="left:1687px;top:690px;width:48.5px;height:33.5px;background:#bdbdbd;"></div>
<div style="left:1687px;top:690px;width:48.5px;height:8px;background:#d8d8d8;"></div>
<div style="left:1698px;top:690px;width:8px;height:6px;background:#333;"></div>
<div style="left:1713px;top:690px;width:10px;height:6px;background:#2a2a2a;"></div>
<div style="left:1687px;top:714px;width:48.5px;height:9.5px;background:#d2cec6;"></div>
<div style="left:1690px;top:719px;width:17px;height:1.5px;background:#111;"></div>
<div style="left:1691px;top:698px;width:6px;height:9px;background:#ececec;"></div>
<div style="left:1701px;top:698px;width:6px;height:9px;background:#ececec;"></div>
<div style="left:1714px;top:698px;width:6px;height:9px;background:#ececec;"></div>
<div style="left:1725px;top:698px;width:6px;height:9px;background:#ececec;"></div>
<div style="left:1692px;top:707px;width:1.5px;height:9px;background:#9a9a9a;"></div>
<div style="left:1703px;top:707px;width:1.5px;height:9px;background:#9a9a9a;"></div>
<div style="left:1716px;top:707px;width:1.5px;height:9px;background:#9a9a9a;"></div>
<div style="left:1727px;top:707px;width:1.5px;height:9px;background:#9a9a9a;"></div>
<div style="left:1687px;top:690px;width:9.5px;height:9.5px;background:#fff;"></div>
<div style="left:1726px;top:690px;width:9.5px;height:9.5px;background:#fff;"></div>
<div style="left:1687px;top:690px;font-size:10.5px;color:#000;white-space:nowrap;line-height:1;">C</div>
<div style="left:1726.5px;top:690px;font-size:10.5px;color:#000;white-space:nowrap;line-height:1;">C</div>
<div style="left:1711px;top:689px;width:1px;height:35.5px;background:#8e8e8e;"></div>
<div style="left:1684px;top:732.6px;font-size:9.6px;color:#f0f0f0;white-space:nowrap;line-height:1;width:50px;text-align:center;">56-57</div>
<div style="left:1711px;top:747px;width:1px;height:48px;background:#9a9a9a;"></div>
<div style="left:1686px;top:753px;width:50.5px;height:35.5px;background:#fff;border:1px solid #a0a0a0;box-sizing:border-box;"></div>
<div style="left:1711px;top:753px;width:1px;height:35.5px;background:#8e8e8e;"></div>
<div style="left:1687px;top:754px;font-size:10.5px;color:#000;white-space:nowrap;line-height:1;letter-spacing:-0.3px;">3u4</div>
<div style="left:1715px;top:754px;font-size:10.5px;color:#000;white-space:nowrap;line-height:1;letter-spacing:-0.3px;">3u4</div>
<div style="left:1689px;top:774px;width:9px;height:2px;background:#c04050;"></div>
<div style="left:1689px;top:776px;width:8px;height:9px;background:#666;"></div>
<div style="left:1698px;top:777px;width:8px;height:7px;background:#999;"></div>
<div style="left:1719px;top:764px;width:5px;height:11px;background:#666;"></div>
<div style="left:1725px;top:763px;width:6px;height:12px;background:#334;"></div>
<div style="left:1684px;top:796.6px;font-size:9.6px;color:#f0f0f0;white-space:nowrap;line-height:1;width:50px;text-align:center;">58-59</div>
<div style="left:1711px;top:811px;width:1px;height:48px;background:#9a9a9a;"></div>
<div style="left:1686px;top:817px;width:50.5px;height:35.5px;background:#fff;border:1px solid #a0a0a0;box-sizing:border-box;"></div>
<div style="left:1711px;top:817px;width:1px;height:35.5px;background:#8e8e8e;"></div>
<div style="left:1687px;top:818px;font-size:10.5px;color:#000;white-space:nowrap;line-height:1;letter-spacing:-0.3px;">3u4</div>
<div style="left:1716.5px;top:818px;font-size:10.5px;color:#000;white-space:nowrap;line-height:1;letter-spacing:-0.3px;">3u4</div>
<div style="left:1690px;top:828px;width:10px;height:13px;background:#3a6ac0;"></div>
<div style="left:1715px;top:839px;width:17px;height:10px;background:#2a3448;"></div>
<div style="left:1715px;top:839px;width:8px;height:5px;background:#8ab0e0;"></div>
<div style="left:1684px;top:860.6px;font-size:9.6px;color:#f0f0f0;white-space:nowrap;line-height:1;width:50px;text-align:center;">60-61</div>
<div style="left:1711px;top:875px;width:1px;height:48px;background:#9a9a9a;"></div>
<div style="left:1686px;top:881px;width:50.5px;height:35.5px;background:#fff;border:1px solid #a0a0a0;box-sizing:border-box;"></div>
<div style="left:1711px;top:881px;width:1px;height:35.5px;background:#8e8e8e;"></div>
<div style="left:1687px;top:882px;font-size:10.5px;color:#000;white-space:nowrap;line-height:1;font-weight:bold;letter-spacing:-0.3px;">3u4</div>
<div style="left:1713.5px;top:882px;font-size:10.5px;color:#000;white-space:nowrap;line-height:1;font-weight:bold;letter-spacing:-0.3px;">3u4</div>
<div style="left:1686.5px;top:891.5px;width:25px;height:24.5px;background:#9cc6f4;"></div>
<div style="left:1712px;top:891.5px;width:24px;height:24.5px;background:#a4ccf6;"></div>
<div style="left:1690px;top:893px;width:9px;height:20px;background:#4a84c8;opacity:0.75;"></div>
<div style="left:1724px;top:893px;width:8px;height:7px;background:#5a90d0;opacity:0.7;"></div>
<div style="left:1716px;top:907px;width:7px;height:4px;background:#4a80c0;opacity:0.6;"></div>
<div style="left:1726px;top:907px;width:5px;height:3px;background:#4a80c0;opacity:0.6;"></div>
<div style="left:1711px;top:881px;width:1px;height:35.5px;background:#8e8e8e;"></div>
<div style="left:1692px;top:921.5px;width:35px;height:14.5px;background:#2d8ceb;"></div>
<div style="left:1692px;top:924px;font-size:10.5px;color:#fff;white-space:nowrap;line-height:1;font-weight:bold;width:35px;text-align:center;">62-63</div>
<div style="left:1711px;top:915px;width:1px;height:8px;background:#9a9a9a;"></div>
<div style="left:1554px;top:937px;width:327px;height:1px;background:#484848;"></div>
<div style="left:1560px;top:946px;font-size:9.9px;color:#ececec;white-space:nowrap;line-height:1;">168 Seiten auf 85 Druckbögen</div>
<svg style="left:1785px;top:943px;" width="17" height="13" viewBox="0 0 17 13"><path d="M1,5.5 H6 V11.5 H1Z M6,5.5 H7.5 M5,5.5 V1.5 H9 L11.5,4 V11.5 H6 M9,1.5 V4 H11.5" fill="none" stroke="#c8c8c8" stroke-width="1.1"/><path d="M13.2,10.8 L16.2,10.8 L14.7,12.6Z" fill="#c8c8c8"/></svg>
<svg style="left:1818px;top:943px;" width="12" height="12" viewBox="0 0 12 12"><rect x="0.6" y="0.6" width="10.8" height="10.8" fill="none" stroke="#c8c8c8" stroke-width="1.1"/><path d="M6,3V9 M3,6H9" stroke="#c8c8c8" stroke-width="1.1"/></svg>
<svg style="left:1845px;top:942px;" width="12" height="14" viewBox="0 0 12 14"><path d="M0.5,3H11.5 M4,3V1H8V3 M1.8,3 L2.4,13 H9.6 L10.2,3 M4.4,5V11 M6,5V11 M7.6,5V11" fill="none" stroke="#c8c8c8" stroke-width="1.1"/></svg>
<div style="left:1554px;top:961px;width:327px;height:1.5px;background:#3c3c3c;"></div>
<div style="left:1554px;top:962.5px;width:327px;height:6.5px;background:#4c4c4c;"></div>
<div style="left:1707px;top:964px;width:1px;height:4px;background:#333;"></div><div style="left:1709px;top:964px;width:1px;height:4px;background:#333;"></div><div style="left:1711px;top:964px;width:1px;height:4px;background:#333;"></div><div style="left:1713px;top:964px;width:1px;height:4px;background:#333;"></div><div style="left:1715px;top:964px;width:1px;height:4px;background:#333;"></div><div style="left:1717px;top:964px;width:1px;height:4px;background:#333;"></div><div style="left:1719px;top:964px;width:1px;height:4px;background:#333;"></div><div style="left:1721px;top:964px;width:1px;height:4px;background:#333;"></div><div style="left:1723px;top:964px;width:1px;height:4px;background:#333;"></div><div style="left:1725px;top:964px;width:1px;height:4px;background:#333;"></div>
<div style="left:1881px;top:90.5px;width:39px;height:948.5px;background:#535353;"></div>
<div style="left:1880px;top:90.5px;width:1.5px;height:950px;background:#3c3c3c;"></div>
<div style="left:1881px;top:90.5px;width:39px;height:12px;background:#484848;"></div>
<svg style="left:1906px;top:94px;" width="8" height="6" viewBox="0 0 8 6"><path d="M3.5,0.5 L1,3 L3.5,5.5Z M7.5,0.5 L5,3 L7.5,5.5Z" fill="#d8d8d8"/></svg>
<div style="left:1881px;top:102.5px;width:39px;height:1px;background:#3c3c3c;"></div>
<div style="left:1881px;top:143px;width:39px;height:1px;background:#3e3e3e;"></div>
<div style="left:1881px;top:184px;width:39px;height:1px;background:#3e3e3e;"></div>
<div style="left:1881px;top:281px;width:39px;height:1px;background:#3e3e3e;"></div>
<div style="left:1881px;top:322px;width:39px;height:1px;background:#3e3e3e;"></div>
<div style="left:1881px;top:475px;width:39px;height:1px;background:#3e3e3e;"></div>
<div style="left:1881px;top:544px;width:39px;height:1px;background:#3e3e3e;"></div>
<div style="left:1881px;top:613px;width:39px;height:1px;background:#3e3e3e;"></div>
<div style="left:1881px;top:654px;width:39px;height:1px;background:#3e3e3e;"></div>
<div style="left:1881px;top:695px;width:39px;height:1px;background:#3e3e3e;"></div>
<div style="left:1891px;top:106px;width:1px;height:4px;background:#3a3a3a;"></div><div style="left:1893px;top:106px;width:1px;height:4px;background:#3a3a3a;"></div><div style="left:1895px;top:106px;width:1px;height:4px;background:#3a3a3a;"></div><div style="left:1897px;top:106px;width:1px;height:4px;background:#3a3a3a;"></div><div style="left:1899px;top:106px;width:1px;height:4px;background:#3a3a3a;"></div><div style="left:1901px;top:106px;width:1px;height:4px;background:#3a3a3a;"></div><div style="left:1903px;top:106px;width:1px;height:4px;background:#3a3a3a;"></div><div style="left:1905px;top:106px;width:1px;height:4px;background:#3a3a3a;"></div><div style="left:1907px;top:106px;width:1px;height:4px;background:#3a3a3a;"></div><div style="left:1909px;top:106px;width:1px;height:4px;background:#3a3a3a;"></div>
<div style="left:1891px;top:147px;width:1px;height:4px;background:#3a3a3a;"></div><div style="left:1893px;top:147px;width:1px;height:4px;background:#3a3a3a;"></div><div style="left:1895px;top:147px;width:1px;height:4px;background:#3a3a3a;"></div><div style="left:1897px;top:147px;width:1px;height:4px;background:#3a3a3a;"></div><div style="left:1899px;top:147px;width:1px;height:4px;background:#3a3a3a;"></div><div style="left:1901px;top:147px;width:1px;height:4px;background:#3a3a3a;"></div><div style="left:1903px;top:147px;width:1px;height:4px;background:#3a3a3a;"></div><div style="left:1905px;top:147px;width:1px;height:4px;background:#3a3a3a;"></div><div style="left:1907px;top:147px;width:1px;height:4px;background:#3a3a3a;"></div><div style="left:1909px;top:147px;width:1px;height:4px;background:#3a3a3a;"></div>
<div style="left:1891px;top:188px;width:1px;height:4px;background:#3a3a3a;"></div><div style="left:1893px;top:188px;width:1px;height:4px;background:#3a3a3a;"></div><div style="left:1895px;top:188px;width:1px;height:4px;background:#3a3a3a;"></div><div style="left:1897px;top:188px;width:1px;height:4px;background:#3a3a3a;"></div><div style="left:1899px;top:188px;width:1px;height:4px;background:#3a3a3a;"></div><div style="left:1901px;top:188px;width:1px;height:4px;background:#3a3a3a;"></div><div style="left:1903px;top:188px;width:1px;height:4px;background:#3a3a3a;"></div><div style="left:1905px;top:188px;width:1px;height:4px;background:#3a3a3a;"></div><div style="left:1907px;top:188px;width:1px;height:4px;background:#3a3a3a;"></div><div style="left:1909px;top:188px;width:1px;height:4px;background:#3a3a3a;"></div>
<div style="left:1891px;top:285px;width:1px;height:4px;background:#3a3a3a;"></div><div style="left:1893px;top:285px;width:1px;height:4px;background:#3a3a3a;"></div><div style="left:1895px;top:285px;width:1px;height:4px;background:#3a3a3a;"></div><div style="left:1897px;top:285px;width:1px;height:4px;background:#3a3a3a;"></div><div style="left:1899px;top:285px;width:1px;height:4px;background:#3a3a3a;"></div><div style="left:1901px;top:285px;width:1px;height:4px;background:#3a3a3a;"></div><div style="left:1903px;top:285px;width:1px;height:4px;background:#3a3a3a;"></div><div style="left:1905px;top:285px;width:1px;height:4px;background:#3a3a3a;"></div><div style="left:1907px;top:285px;width:1px;height:4px;background:#3a3a3a;"></div><div style="left:1909px;top:285px;width:1px;height:4px;background:#3a3a3a;"></div>
<div style="left:1891px;top:326px;width:1px;height:4px;background:#3a3a3a;"></div><div style="left:1893px;top:326px;width:1px;height:4px;background:#3a3a3a;"></div><div style="left:1895px;top:326px;width:1px;height:4px;background:#3a3a3a;"></div><div style="left:1897px;top:326px;width:1px;height:4px;background:#3a3a3a;"></div><div style="left:1899px;top:326px;width:1px;height:4px;background:#3a3a3a;"></div><div style="left:1901px;top:326px;width:1px;height:4px;background:#3a3a3a;"></div><div style="left:1903px;top:326px;width:1px;height:4px;background:#3a3a3a;"></div><div style="left:1905px;top:326px;width:1px;height:4px;background:#3a3a3a;"></div><div style="left:1907px;top:326px;width:1px;height:4px;background:#3a3a3a;"></div><div style="left:1909px;top:326px;width:1px;height:4px;background:#3a3a3a;"></div>
<div style="left:1891px;top:480.5px;width:1px;height:4px;background:#3a3a3a;"></div><div style="left:1893px;top:480.5px;width:1px;height:4px;background:#3a3a3a;"></div><div style="left:1895px;top:480.5px;width:1px;height:4px;background:#3a3a3a;"></div><div style="left:1897px;top:480.5px;width:1px;height:4px;background:#3a3a3a;"></div><div style="left:1899px;top:480.5px;width:1px;height:4px;background:#3a3a3a;"></div><div style="left:1901px;top:480.5px;width:1px;height:4px;background:#3a3a3a;"></div><div style="left:1903px;top:480.5px;width:1px;height:4px;background:#3a3a3a;"></div><div style="left:1905px;top:480.5px;width:1px;height:4px;background:#3a3a3a;"></div><div style="left:1907px;top:480.5px;width:1px;height:4px;background:#3a3a3a;"></div><div style="left:1909px;top:480.5px;width:1px;height:4px;background:#3a3a3a;"></div>
<div style="left:1891px;top:549px;width:1px;height:4px;background:#3a3a3a;"></div><div style="left:1893px;top:549px;width:1px;height:4px;background:#3a3a3a;"></div><div style="left:1895px;top:549px;width:1px;height:4px;background:#3a3a3a;"></div><div style="left:1897px;top:549px;width:1px;height:4px;background:#3a3a3a;"></div><div style="left:1899px;top:549px;width:1px;height:4px;background:#3a3a3a;"></div><div style="left:1901px;top:549px;width:1px;height:4px;background:#3a3a3a;"></div><div style="left:1903px;top:549px;width:1px;height:4px;background:#3a3a3a;"></div><div style="left:1905px;top:549px;width:1px;height:4px;background:#3a3a3a;"></div><div style="left:1907px;top:549px;width:1px;height:4px;background:#3a3a3a;"></div><div style="left:1909px;top:549px;width:1px;height:4px;background:#3a3a3a;"></div>
<div style="left:1891px;top:618px;width:1px;height:4px;background:#3a3a3a;"></div><div style="left:1893px;top:618px;width:1px;height:4px;background:#3a3a3a;"></div><div style="left:1895px;top:618px;width:1px;height:4px;background:#3a3a3a;"></div><div style="left:1897px;top:618px;width:1px;height:4px;background:#3a3a3a;"></div><div style="left:1899px;top:618px;width:1px;height:4px;background:#3a3a3a;"></div><div style="left:1901px;top:618px;width:1px;height:4px;background:#3a3a3a;"></div><div style="left:1903px;top:618px;width:1px;height:4px;background:#3a3a3a;"></div><div style="left:1905px;top:618px;width:1px;height:4px;background:#3a3a3a;"></div><div style="left:1907px;top:618px;width:1px;height:4px;background:#3a3a3a;"></div><div style="left:1909px;top:618px;width:1px;height:4px;background:#3a3a3a;"></div>
<div style="left:1891px;top:658.5px;width:1px;height:4px;background:#3a3a3a;"></div><div style="left:1893px;top:658.5px;width:1px;height:4px;background:#3a3a3a;"></div><div style="left:1895px;top:658.5px;width:1px;height:4px;background:#3a3a3a;"></div><div style="left:1897px;top:658.5px;width:1px;height:4px;background:#3a3a3a;"></div><div style="left:1899px;top:658.5px;width:1px;height:4px;background:#3a3a3a;"></div><div style="left:1901px;top:658.5px;width:1px;height:4px;background:#3a3a3a;"></div><div style="left:1903px;top:658.5px;width:1px;height:4px;background:#3a3a3a;"></div><div style="left:1905px;top:658.5px;width:1px;height:4px;background:#3a3a3a;"></div><div style="left:1907px;top:658.5px;width:1px;height:4px;background:#3a3a3a;"></div><div style="left:1909px;top:658.5px;width:1px;height:4px;background:#3a3a3a;"></div>
<div style="left:1887px;top:115px;width:27px;height:22px;background:#383838;border-radius:3px;border:1px solid #666;box-sizing:border-box;"></div>
<svg style="left:1892px;top:117px;" width="18" height="18" viewBox="0 0 18 18"><path d="M1,6.5 L4.5,3 H8 V15.5 H1Z M17,6.5 L13.5,3 H10 V15.5 H17Z" fill="#d2d2d2"/><path d="M1,6.5 H4.5 V3 M17,6.5 H13.5 V3" fill="none" stroke="#383838" stroke-width="0.7"/><path d="M9,0.5V17.5" stroke="#d2d2d2" stroke-width="1"/></svg>
<svg style="left:1892px;top:158px;" width="20" height="19" viewBox="0 0 20 19"><path d="M1,1 H9 L12,4 V12.5 H1Z" fill="#c4c4c4"/><path d="M2.5,5 L3.8,6.5 L6,4 M2.5,8.5 L3.8,10 L6,7.5" stroke="#535353" stroke-width="0.9" fill="none"/><path d="M15,6.5 L18,9.5 L11,16.5 L7.5,17.8 L8.6,14Z" fill="#d2d2d2" stroke="#535353" stroke-width="0.6"/></svg>
<svg style="left:1890.5px;top:203.5px;" width="21" height="10" viewBox="0 0 21 10"><rect x="1.2" y="1.3" width="11.4" height="7.4" rx="3.7" fill="none" stroke="#d2d2d2" stroke-width="2.3"/><rect x="8.4" y="1.3" width="11.4" height="7.4" rx="3.7" fill="none" stroke="#d2d2d2" stroke-width="2.3"/><path d="M8.6,3.4 V6.6 M12.4,3.4 V6.6" stroke="#535353" stroke-width="1"/></svg>
<svg style="left:1892px;top:230px;" width="18" height="14" viewBox="0 0 18 14"><path d="M0,0.6H18 M0,3.8H18 M0,7H18 M0,10.2H18 M0,13.4H18" stroke="#d2d2d2" stroke-width="1.1"/><ellipse cx="9" cy="7" rx="4.8" ry="4.8" fill="#535353"/><ellipse cx="9" cy="7" rx="3.9" ry="4.1" fill="#d2d2d2"/></svg>
<svg style="left:1892px;top:255px;" width="19" height="19" viewBox="0 0 19 19"><path d="M9.5,0.8 L18.2,6.2 L9.5,11.6 L0.8,6.2Z" fill="#d2d2d2"/><path d="M2.2,10.2 L9.5,14.8 L16.8,10.2 L18.2,11.4 L9.5,17 L0.8,11.4Z" fill="#d2d2d2"/></svg>
<svg style="left:1893px;top:298px;" width="17" height="16" viewBox="0 0 17 16"><rect x="1" y="1" width="8.5" height="8.5" fill="#d2d2d2"/><rect x="7" y="6.5" width="9" height="9" fill="#d2d2d2" stroke="#535353" stroke-width="0.8"/><rect x="5" y="4.2" width="5" height="5" fill="#8a8a8a" stroke="#535353" stroke-width="0.8"/></svg>
<svg style="left:1894px;top:337.5px;" width="15" height="19" viewBox="0 0 15 19"><path d="M1,0.5 H14 V4 H12.4 V2.6 H9.2 V10.4 H11 V12 H4 V10.4 H5.8 V2.6 H2.6 V4 H1Z" fill="#d2d2d2"/><path d="M0.8,15 L2.7,17.2 L4.9,14.8 L7.1,17.2 L9.3,14.8 L11.5,17.2 L13.9,14.6" fill="none" stroke="#d2d2d2" stroke-width="1.5"/></svg>
<svg style="left:1893px;top:367px;" width="17" height="14" viewBox="0 0 17 14"><path d="M0,1H17" stroke="#d2d2d2" stroke-width="1.2"/><path d="M0,5.5H17" stroke="#d2d2d2" stroke-width="2"/><path d="M0,11.5H17" stroke="#d2d2d2" stroke-width="3"/></svg>
<svg style="left:1893px;top:397px;" width="17" height="12" viewBox="0 0 17 12"><rect x="0.5" y="0.5" width="16" height="10.5" fill="#d2d2d2"/><rect x="1.8" y="1.8" width="4" height="3.4" fill="#9a9a9a"/><rect x="6.5" y="1.8" width="4" height="3.4" fill="#d8d8d8"/><rect x="11.2" y="1.8" width="4" height="3.4" fill="#6a6a6a"/><rect x="1.8" y="6.2" width="4" height="3.4" fill="#d8d8d8"/><rect x="6.5" y="6.2" width="4" height="3.4" fill="#7a7a7a"/><rect x="11.2" y="6.2" width="4" height="3.4" fill="#a8a8a8"/></svg>
<svg style="left:1896px;top:422px;" width="11" height="18" viewBox="0 0 11 18"><path d="M0.5,0.5 H10.5 V17 L5.5,12 L0.5,17Z" fill="#d2d2d2"/></svg>
<svg style="left:1893px;top:450px;" width="17" height="17" viewBox="0 0 17 17"><rect x="0.8" y="2.8" width="11" height="12.5" rx="1.5" fill="none" stroke="#d2d2d2" stroke-width="1.2"/><rect x="3.6" y="0.8" width="12" height="13.5" rx="1.5" fill="#535353" stroke="#d2d2d2" stroke-width="1.2"/><path d="M9,1 V7 L10.8,5.4 L12.6,7 V1Z" fill="#d2d2d2"/></svg>
<svg style="left:1891px;top:492px;" width="21" height="15" viewBox="0 0 21 15"><path d="M11,0.8 C17,0.8 20.2,4 20.2,7.4 C20.2,10 17.6,10.4 15.4,9.8 C13,9.2 12.6,11.4 13.4,12.4 C14,13.6 12.6,14.4 10.2,14.4 C4.6,14.4 0.8,11.6 0.8,7.6 C0.8,3.6 5,0.8 11,0.8Z" fill="#d2d2d2"/><circle cx="5" cy="9" r="1.5" fill="#535353"/><circle cx="6.2" cy="5" r="1.5" fill="#535353"/><circle cx="10.6" cy="3.4" r="1.5" fill="#535353"/><circle cx="15.4" cy="4.6" r="1.5" fill="#535353"/><circle cx="9.4" cy="11.4" r="1.4" fill="#535353"/></svg>
<svg style="left:1892px;top:518px;" width="19" height="19" viewBox="0 0 19 19"><path d="M10,1 H17.5 V2.6 H16.2 V14 H14.6 V2.6 H13 V14 H11.4 V8 C8.2,8 7.4,6 7.4,4.5 C7.4,2.6 8.6,1 10,1Z" fill="#d2d2d2"/><rect x="0.8" y="10" width="5" height="5" fill="none" stroke="#d2d2d2" stroke-width="1.1"/><rect x="3.4" y="12.6" width="5" height="5" fill="#535353" stroke="#d2d2d2" stroke-width="1.1"/></svg>
<svg style="left:1892px;top:559px;" width="18" height="19" viewBox="0 0 18 19"><path d="M1.2,0 V19" stroke="#d2d2d2" stroke-width="1.4"/><rect x="3.5" y="3" width="9" height="5" fill="#d2d2d2"/><rect x="3.5" y="11" width="14" height="5" fill="#d2d2d2"/></svg>
<svg style="left:1891px;top:588px;" width="21" height="19" viewBox="0 0 21 19"><circle cx="8.5" cy="8" r="7.2" fill="#d2d2d2"/><path d="M5,3 C7,4 8,6 6.5,7.5 C5,9 4,8 3,9.5 M10.5,1.5 C10,3.5 12,4 13,5.5 C14,7 12.5,8 13.5,9.5" fill="none" stroke="#535353" stroke-width="1.3"/><path d="M11,9 L11,16 L12.6,14.6 L14.2,18 L15.8,17.2 L14.4,14 L16.6,14Z" fill="#d2d2d2" stroke="#535353" stroke-width="0.9"/><path d="M12.5,12 h6 v3.4 c0,2 -1,3 -3,3 c-2,0 -3,-1 -3,-3Z" fill="#d2d2d2" stroke="#535353" stroke-width="0.7"/></svg>
<svg style="left:1893px;top:630px;" width="17" height="16" viewBox="0 0 17 16"><path d="M2,1.2H17 M6,5H17 M0,8.8H17 M5,12.4H17 M8,15.2H17" stroke="#d2d2d2" stroke-width="1.5"/></svg>
<svg style="left:1895px;top:672px;" width="13" height="15" viewBox="0 0 13 15"><path d="M4.5,0.5 H12.5 V2.2 H11 V14.5 H9.4 V2.2 H7.6 V14.5 H6 V7.8 C2.2,7.8 0.5,6.2 0.5,4.2 C0.5,2 2.4,0.5 4.5,0.5Z" fill="#d2d2d2"/></svg>
<div style="left:0px;top:1022.5px;width:1881px;height:16.5px;background:#535353;"></div>
<div style="left:0px;top:1022.5px;width:1881px;height:1px;background:#3e3e3e;"></div>
<div style="left:15px;top:1027px;font-size:10px;color:#e6e6e6;white-space:nowrap;line-height:1;">75 %</div>
<svg style="left:57px;top:1029px;" width="8" height="5" viewBox="0 0 8 5"><path d="M0.5,0.5 L4,4 L7.5,0.5" fill="none" stroke="#c8c8c8" stroke-width="1.2"/></svg>
<svg style="left:77px;top:1028px;" width="9" height="8" viewBox="0 0 9 8"><path d="M1,0V8" stroke="#c8c8c8" stroke-width="1.6"/><path d="M8.5,0 L3,4 L8.5,8Z" fill="#c8c8c8"/></svg>
<svg style="left:100px;top:1028px;" width="6" height="8" viewBox="0 0 6 8"><path d="M5.5,0 L0.5,4 L5.5,8Z" fill="#c8c8c8"/></svg>
<div style="left:117px;top:1024px;width:91px;height:15px;background:#444;border:1px solid #6a6a6a;border-radius:3px;box-sizing:border-box;"></div>
<div style="left:190px;top:1025px;width:1px;height:13px;background:#6a6a6a;"></div>
<div style="left:121px;top:1026.5px;font-size:10px;color:#f0f0f0;white-space:nowrap;line-height:1;">63</div>
<svg style="left:194px;top:1029px;" width="8" height="5" viewBox="0 0 8 5"><path d="M0.5,0.5 L4,4 L7.5,0.5" fill="none" stroke="#d8d8d8" stroke-width="1.2"/></svg>
<svg style="left:221px;top:1028px;" width="6" height="8" viewBox="0 0 6 8"><path d="M0.5,0 L5.5,4 L0.5,8Z" fill="#c8c8c8"/></svg>
<svg style="left:240px;top:1028px;" width="9" height="8" viewBox="0 0 9 8"><path d="M8,0V8" stroke="#c8c8c8" stroke-width="1.6"/><path d="M0.5,0 L6,4 L0.5,8Z" fill="#c8c8c8"/></svg>
<svg style="left:264px;top:1024.5px;" width="18" height="14" viewBox="0 0 18 14"><path d="M2.4,12.4 A5.9,5.9 0 1 1 13,12.4" fill="none" stroke="#c4c4c4" stroke-width="2.3"/><path d="M7.9,8 V3.4 A4.6,4.6 0 0 1 12.5,8Z" fill="#e2e2e2" stroke="#535353" stroke-width="0.9"/><path d="M14.2,11.2 L17.2,11.2 L15.7,13Z" fill="#c8c8c8"/></svg>
<div style="left:297px;top:1027px;font-size:10px;color:#e6e6e6;white-space:nowrap;line-height:1;">[Grundprofil] (Arb...</div>
<svg style="left:399px;top:1029px;" width="8" height="5" viewBox="0 0 8 5"><path d="M0.5,0.5 L4,4 L7.5,0.5" fill="none" stroke="#c8c8c8" stroke-width="1.2"/></svg>
<div style="left:423px;top:1026.5px;width:10.5px;height:10.5px;background:#3ab54a;border-radius:50%;"></div>
<div style="left:438.5px;top:1027px;font-size:10px;color:#e6e6e6;white-space:nowrap;line-height:1;">Ohne Fehler</div>
<svg style="left:511.5px;top:1029px;" width="8" height="5" viewBox="0 0 8 5"><path d="M0.5,0.5 L4,4 L7.5,0.5" fill="none" stroke="#c8c8c8" stroke-width="1.2"/></svg>
<div style="left:525px;top:1023.5px;width:1318px;height:15.5px;background:#4a4a4a;"></div>
<div style="left:648px;top:1024px;width:1177px;height:15px;background:#6b6b6b;border-radius:7.5px;"></div>
<svg style="left:531.5px;top:1027px;" width="5" height="9" viewBox="0 0 5 9"><path d="M4.3,0.7 L1,4.5 L4.3,8.3" fill="none" stroke="#7a7a7a" stroke-width="1.1"/></svg>
<svg style="left:1831.2px;top:1027.2px;" width="5" height="9" viewBox="0 0 5 9"><path d="M0.7,0.7 L4,4.5 L0.7,8.3" fill="none" stroke="#8a8a8a" stroke-width="1.1"/></svg>
<svg style="left:1846px;top:1025.5px;" width="16" height="12" viewBox="0 0 16 12"><rect x="0.7" y="0.7" width="14.6" height="10.6" fill="none" stroke="#b8b8b8" stroke-width="1.2"/><path d="M8,0.7V11.3" stroke="#b8b8b8" stroke-width="1.2"/></svg>
<svg style="left:1869px;top:1028px;" width="10" height="10" viewBox="0 0 10 10"><rect x="7.800000000000001" y="0.0" width="1" height="1" fill="#6e6e6e"/><rect x="5.2" y="2.6" width="1" height="1" fill="#6e6e6e"/><rect x="7.800000000000001" y="2.6" width="1" height="1" fill="#6e6e6e"/><rect x="2.6" y="5.2" width="1" height="1" fill="#6e6e6e"/><rect x="5.2" y="5.2" width="1" height="1" fill="#6e6e6e"/><rect x="7.800000000000001" y="5.2" width="1" height="1" fill="#6e6e6e"/><rect x="0.0" y="7.800000000000001" width="1" height="1" fill="#6e6e6e"/><rect x="2.6" y="7.800000000000001" width="1" height="1" fill="#6e6e6e"/><rect x="5.2" y="7.800000000000001" width="1" height="1" fill="#6e6e6e"/><rect x="7.800000000000001" y="7.800000000000001" width="1" height="1" fill="#6e6e6e"/></svg>
<div style="left:1863.5px;top:969px;width:16px;height:54.5px;background:#4a4a4a;"></div>
<div style="left:1879.5px;top:969px;width:2px;height:70px;background:#3c3c3c;"></div>
<svg style="left:1867.5px;top:1013.5px;" width="8" height="5" viewBox="0 0 8 5"><path d="M0.5,0.5 L4,4 L7.5,0.5" fill="none" stroke="#a0a0a0" stroke-width="1.2"/></svg>
<div style="left:0px;top:1039px;width:1920px;height:41px;background:linear-gradient(90deg,#34312f 0%,#312e2c 22%,#2d2a28 52%,#343130 66%,#3c3937 79%,#3b3938 100%);"></div>
<svg style="left:16px;top:1052px;" width="17" height="17" viewBox="0 0 17 17"><path d="M0,2.4 L7,1.4 V8 H0Z M8,1.25 L17,0 V8 H8Z M0,9 H7 V15.6 L0,14.6Z M8,9 H17 V17 L8,15.75Z" fill="#fff"/></svg>
<div style="left:48px;top:1040px;width:343.5px;height:40px;background:#f2f2f2;border-top:1px solid #d0d0d0;box-sizing:border-box;"></div>
<svg style="left:59px;top:1051px;" width="19" height="19" viewBox="0 0 19 19"><circle cx="11.3" cy="7.2" r="5.6" fill="none" stroke="#222" stroke-width="1.4"/><path d="M7.3,11.2 L1,17.5" stroke="#222" stroke-width="1.5"/></svg>
<div style="left:88px;top:1052.7px;font-size:15px;color:#2a2a2a;white-space:nowrap;line-height:1;letter-spacing:-0.15px;">Zur Suche Text hier eingeben</div>
<svg style="left:408px;top:1052px;" width="17" height="16" viewBox="0 0 17 16"><rect x="2" y="3.4" width="9.6" height="8.4" fill="none" stroke="#fff" stroke-width="1.3"/><path d="M0.7,0.7 H12.9 M0.7,15 H12.9" stroke="#fff" stroke-width="1.3"/><path d="M15,0.5 V2.5 M15,5 V11.2 M15,13.5 V15.5" stroke="#fff" stroke-width="1.5"/></svg>
<svg style="left:455px;top:1047px;" width="24" height="26" viewBox="0 0 24 26"><path d="M7.5,8 C7.5,2.5 9.5,1 12,1 C14.5,1 16.5,2.5 16.5,8" fill="none" stroke="#f0f0f0" stroke-width="1.5"/><path d="M0.5,7 H23.5 V23.5 Q23.5,25 22,25 H2 Q0.5,25 0.5,23.5Z" fill="#f6f6f6"/><rect x="6.5" y="10.5" width="5" height="5" fill="#f25022"/><rect x="12.5" y="10.5" width="5" height="5" fill="#7fba00"/><rect x="6.5" y="16.5" width="5" height="5" fill="#00a4ef"/><rect x="12.5" y="16.5" width="5" height="5" fill="#ffb900"/></svg>
<svg style="left:504px;top:1048px;" width="25" height="23" viewBox="0 0 25 23"><path d="M0.5,8.5 L12.5,0.5 L24.5,8.5 V22.5 H0.5Z" fill="#1478d4"/><path d="M0.5,8.5 L12.5,16 L24.5,8.5 V22.5 H0.5Z" fill="#38a8f0"/><path d="M0.5,22.5 L12.5,13.5 L24.5,22.5Z" fill="#1e90e8"/></svg>
<svg style="left:553px;top:1048px;" width="24" height="24" viewBox="0 0 24 24"><circle cx="12" cy="12" r="11.5" fill="#db4437"/><path d="M12,12 L2.05,6.25 A11.5,11.5 0 0 0 12,23.5 L17.2,14.9Z" fill="#0f9d58"/><path d="M12,12 L17.2,14.9 L12,23.5 A11.5,11.5 0 0 0 21.95,6.25 L12,6.25Z" fill="#ffcd40"/><circle cx="12" cy="12" r="5.4" fill="#f1f1f1"/><circle cx="12" cy="12" r="4.2" fill="#4285f4"/></svg>
<svg style="left:602px;top:1049px;" width="25" height="22" viewBox="0 0 25 22"><path d="M1,2.5 Q1,1 2.5,1 H9 L11,3.5 H22.5 Q24,3.5 24,5 V19 H1Z" fill="#e8a820"/><rect x="1" y="6.5" width="23" height="13.5" fill="#ffd968"/><path d="M5,12 H20 V21 H16 V17 H9 V21 H5Z" fill="#2a8ae0"/><rect x="5" y="12" width="15" height="2.2" fill="#58b0f4"/></svg>
<svg style="left:653px;top:1050px;" width="19" height="19" viewBox="0 0 19 19"><rect width="19" height="19" fill="#f8e000"/><path d="M19,9.5 V19 H9.5Z" fill="#2a2a2a"/></svg>
<svg style="left:699px;top:1047px;" width="26" height="26" viewBox="0 0 26 26"><path d="M13,1 A11.5,11.5 0 1 1 7,22.3 L1.2,24.2 L3.2,18.6 A11.5,11.5 0 0 1 13,1Z" fill="#fff"/><path d="M13,2.8 A9.7,9.7 0 1 1 7.6,20.4 L3.8,21.6 L5.1,18 A9.7,9.7 0 0 1 13,2.8Z" fill="#2cb742"/><path d="M9.4,7.2 C8.6,7.6 8,8.8 8.4,10.2 C9.4,13.6 12.4,16.4 15.6,17.2 C17,17.4 18.2,16.6 18.4,15.6 L16,14.2 L14.8,15.2 C13.2,14.6 11.6,13 11,11.4 L12,10.2 L10.8,7.4Z" fill="#fff"/></svg>
<svg style="left:749px;top:1047px;" width="26" height="27" viewBox="0 0 26 27"><circle cx="12.5" cy="4.5" r="3.6" fill="#5b60c8"/><circle cx="20.5" cy="6" r="2.8" fill="#5b60c8"/><path d="M7,9.5 H17.5 V18 A5.2,5.2 0 0 1 7,18Z" fill="#5b60c8"/><path d="M18,10 H24.5 V16.5 A3.5,3.5 0 0 1 18,17.5Z" fill="#4c50b4"/><rect x="0.5" y="7" width="12" height="12" rx="1.2" fill="#4248ae"/><path d="M3.5,10 H9.5 V11.8 H7.4 V16.5 H5.6 V11.8 H3.5Z" fill="#fff"/><circle cx="19.5" cy="21" r="4.6" fill="#fff"/><circle cx="19.5" cy="21" r="3.8" fill="#7ab83c"/><path d="M17.6,21 L19,22.4 L21.6,19.6" fill="none" stroke="#fff" stroke-width="1.1"/></svg>
<svg style="left:799px;top:1048px;" width="23" height="23" viewBox="0 0 23 23"><rect width="23" height="23" rx="1.5" fill="#3a9aec"/><circle cx="15.6" cy="5.6" r="2" fill="#fff"/><path d="M0,16.5 L9,7.5 L21,23 H1.5 Q0,23 0,21.5Z" fill="#1a4a98"/><path d="M10,23 L17.5,13.5 L23,19.5 V21.5 Q23,23 21.5,23Z" fill="#2868c4"/></svg>
<div style="left:848px;top:1049px;width:22px;height:21px;background:#0a2636;border:1.6px solid #28c8f8;box-sizing:border-box;"></div>
<div style="left:851.5px;top:1053px;font-size:12px;color:#30c8f8;white-space:nowrap;line-height:1;font-weight:bold;letter-spacing:-0.3px;">Ps</div>
<svg style="left:897px;top:1049px;" width="22" height="21" viewBox="0 0 22 21"><rect width="22" height="21" rx="4" fill="#d8141c"/><rect y="14" width="22" height="7" rx="3" fill="#a80c12"/><path d="M6.8,13.8 A3.6,3.6 0 0 1 7.6,6.8 A4.2,4.2 0 0 1 15,6.4 A3.9,3.9 0 0 1 15.6,13.8 H6.8" fill="none" stroke="#fff" stroke-width="1.3"/><path d="M7.6,10.4 A2.6,2.6 0 0 1 12.2,9 L14.8,12.4 M14.6,10.2 A2.4,2.4 0 0 0 10.4,9.2 L8,12.6" fill="none" stroke="#fff" stroke-width="1.1"/></svg>
<div style="left:933.5px;top:1039px;width:47.5px;height:41px;background:#585553;"></div>
<div style="left:946px;top:1049px;width:22px;height:21px;background:#470137;border:1.6px solid #ff3f94;box-sizing:border-box;"></div>
<div style="left:950.5px;top:1053px;font-size:12.5px;color:#ff5aa6;white-space:nowrap;line-height:1;font-weight:bold;">Id</div>
<div style="left:545px;top:1078px;width:40px;height:2px;background:#f3e5c6;"></div>
<div style="left:594px;top:1078px;width:40px;height:2px;background:#f3e5c6;"></div>
<div style="left:643px;top:1078px;width:40px;height:2px;background:#f3e5c6;"></div>
<div style="left:692px;top:1078px;width:40px;height:2px;background:#f3e5c6;"></div>
<div style="left:741px;top:1078px;width:40px;height:2px;background:#f3e5c6;"></div>
<div style="left:790px;top:1078px;width:40px;height:2px;background:#f3e5c6;"></div>
<div style="left:839px;top:1078px;width:40px;height:2px;background:#f3e5c6;"></div>
<div style="left:888px;top:1078px;width:40px;height:2px;background:#f3e5c6;"></div>
<div style="left:933.5px;top:1078px;width:47.5px;height:2px;background:#f3e5c6;"></div>
<div style="left:677px;top:1078px;width:6px;height:2px;background:#c8bca4;"></div>
<svg style="left:1699px;top:1056px;" width="13" height="8" viewBox="0 0 13 8"><path d="M0.8,7 L6.5,1.3 L12.2,7" fill="none" stroke="#fff" stroke-width="1.4"/></svg>
<svg style="left:1723px;top:1053px;" width="17" height="15" viewBox="0 0 17 15"><circle cx="13.2" cy="12.2" r="1.5" fill="#fff"/><path d="M8.6,13.6 A5,5 0 0 1 14.4,7.6 M5.4,13.6 A8.2,8.2 0 0 1 14.8,4.4 M2.2,13.2 A11.4,11.4 0 0 1 15,1.2" fill="none" stroke="#e8e8e8" stroke-width="1.2"/></svg>
<svg style="left:1746px;top:1055px;" width="16" height="10" viewBox="0 0 16 10"><rect x="0.7" y="0.7" width="12.8" height="8.6" fill="none" stroke="#fff" stroke-width="1.2"/><rect x="14" y="3" width="1.6" height="4" fill="#fff"/><rect x="2.2" y="2.2" width="5.2" height="5.6" fill="#fff"/></svg>
<div style="left:1772.5px;top:1054.5px;font-size:11.5px;color:#fff;white-space:nowrap;line-height:1;letter-spacing:-0.2px;">DEU</div>
<div style="left:1800px;top:1045px;font-size:11.5px;color:#fff;white-space:nowrap;line-height:1;width:68px;text-align:center;letter-spacing:-0.2px;">17:45</div>
<div style="left:1800px;top:1063px;font-size:11.5px;color:#fff;white-space:nowrap;line-height:1;width:68px;text-align:center;letter-spacing:-0.2px;">13.05.2020</div>
<svg style="left:1878px;top:1052px;" width="18" height="17" viewBox="0 0 18 17"><path d="M0.5,0.5 H17 V12 H7 L3.4,15.6 V12 H0.5Z" fill="#fff"/><path d="M3,3.5H14.5 M3,6.2H14.5 M3,8.9H14.5" stroke="#3a3837" stroke-width="0.9"/></svg>
<div style="left:1886px;top:1060px;width:16px;height:16px;background:#3a3837;border:1px solid #d8d8d8;border-radius:50%;box-sizing:border-box;"></div>
<div style="left:1886px;top:1062.5px;font-size:10.5px;color:#fff;white-space:nowrap;line-height:1;width:16px;text-align:center;">3</div>
<div style="left:1915.5px;top:1039px;width:1px;height:41px;background:#7e7c7a;"></div>
</body></html>
